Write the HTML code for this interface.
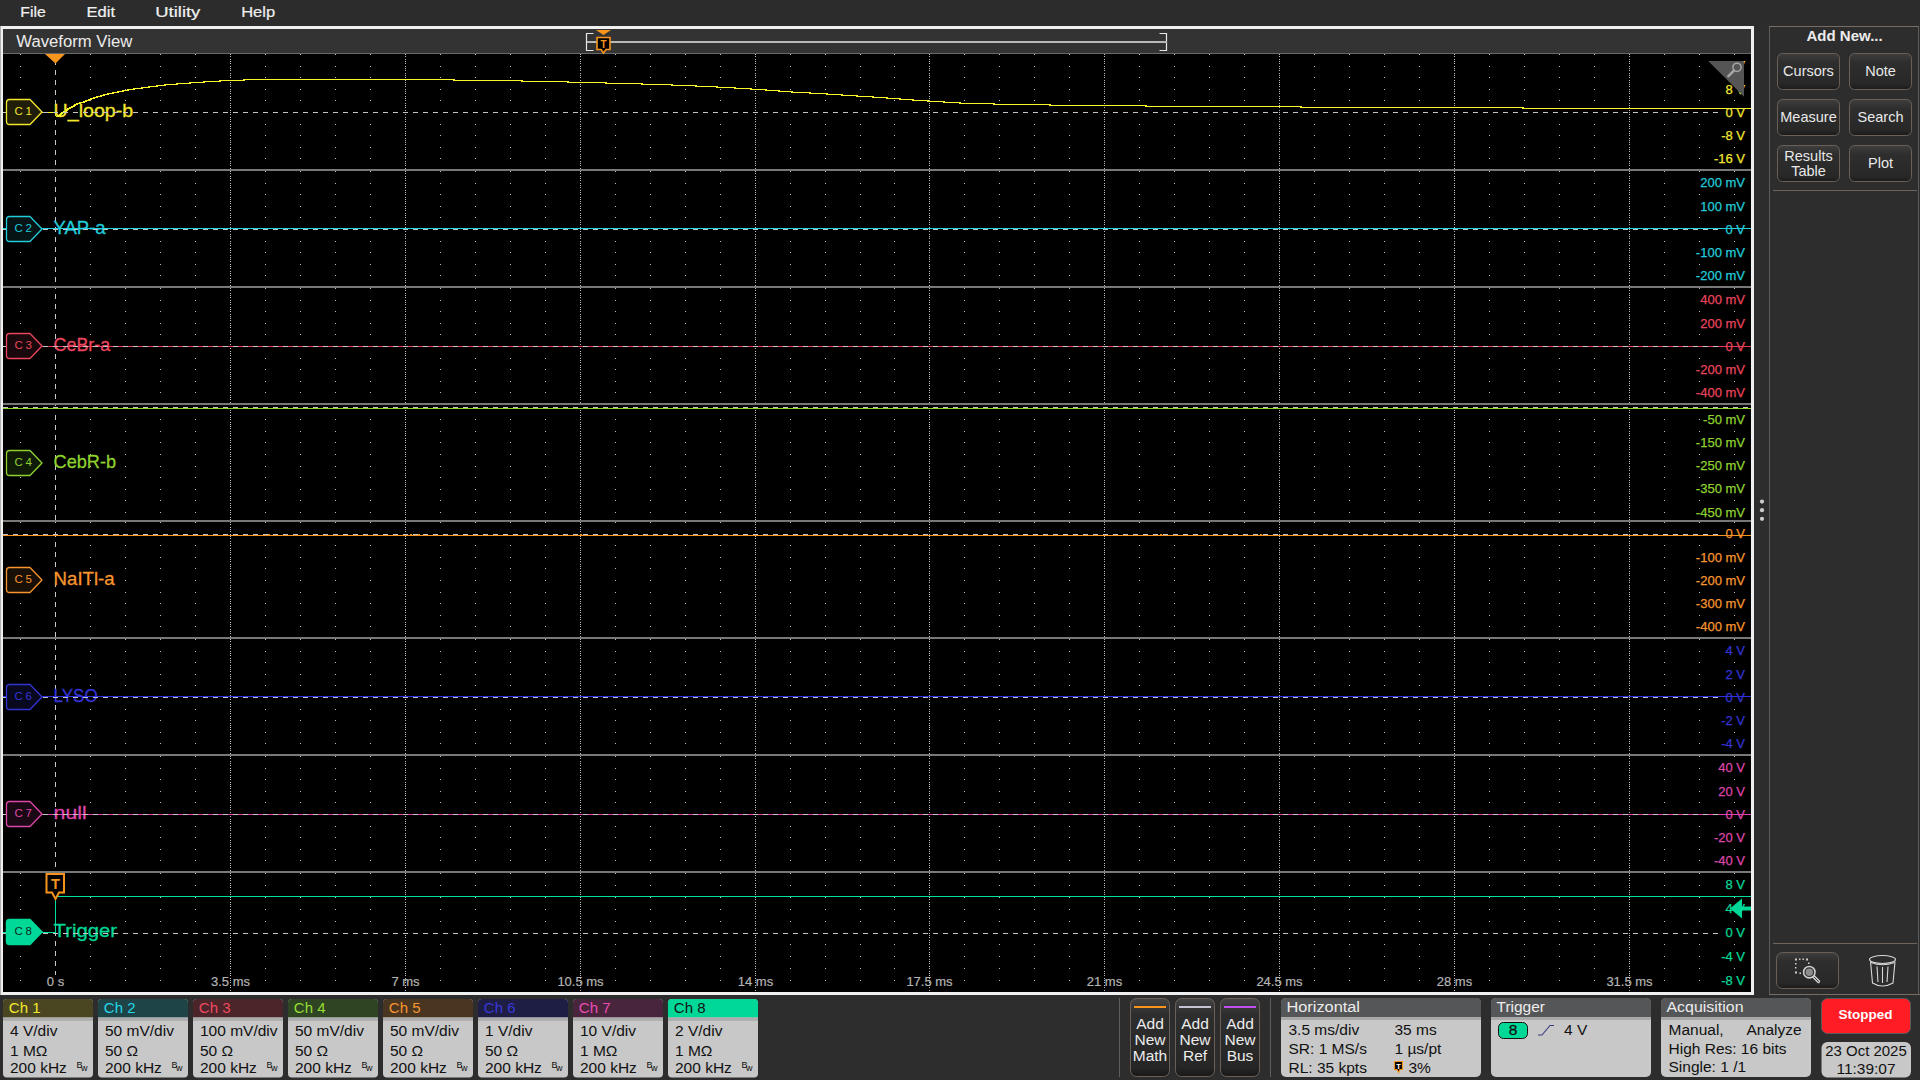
<!DOCTYPE html><html><head><meta charset="utf-8"><title>Waveform View</title><style>
html,body{margin:0;padding:0;background:#2d2d2d;width:1920px;height:1080px;overflow:hidden}
svg{display:block;font-family:"Liberation Sans",sans-serif}
</style></head><body>
<svg width="1920" height="1080" viewBox="0 0 1920 1080">
<rect x="0" y="0" width="1920" height="1080" fill="#2d2d2d"/>
<rect x="0" y="0" width="1920" height="26" fill="#2c2c2c"/>
<text x="20.3" y="16.5" font-size="15" fill="#f0f0f0" stroke="#f0f0f0" stroke-width="0.2" textLength="25.5" lengthAdjust="spacingAndGlyphs">File</text>
<text x="86.5" y="16.5" font-size="15" fill="#f0f0f0" stroke="#f0f0f0" stroke-width="0.2" textLength="28.6" lengthAdjust="spacingAndGlyphs">Edit</text>
<text x="155.3" y="16.5" font-size="15" fill="#f0f0f0" stroke="#f0f0f0" stroke-width="0.2" textLength="45" lengthAdjust="spacingAndGlyphs">Utility</text>
<text x="241.2" y="16.5" font-size="15" fill="#f0f0f0" stroke="#f0f0f0" stroke-width="0.2" textLength="34" lengthAdjust="spacingAndGlyphs">Help</text>
<rect x="0" y="26" width="1754" height="969" fill="#f0f0f0"/>
<rect x="0" y="26" width="1" height="969" fill="#b0b0b0"/>
<rect x="3" y="29" width="1748" height="24" fill="#333333"/>
<rect x="3" y="53" width="1748" height="1" fill="#6a6a6a"/>
<rect x="3" y="54" width="1748" height="938" fill="#000000"/>
<text x="16.3" y="47.2" font-size="16.7" fill="#ececec">Waveform View</text>
<path d="M593.5 33.5H586.5V50.5H593.5" fill="none" stroke="#e6e6e6" stroke-width="1.2"/>
<path d="M1159.5 33.5H1166.5V50.5H1159.5" fill="none" stroke="#e6e6e6" stroke-width="1.2"/>
<rect x="587" y="41" width="580" height="2" fill="#b8b8b8"/>
<path d="M596 30H611L603.5 35Z" fill="#f7941d"/>
<path d="M597 37.5H610V49.5H606L603.5 53L601 49.5H597Z" fill="#000" stroke="#f7941d" stroke-width="1.6"/>
<text x="603.5" y="48" font-size="10" font-weight="bold" fill="#f7941d" text-anchor="middle">T</text>
<path d="M20 54h1v1h-1zM90 54h1v1h-1zM125 54h1v1h-1zM160 54h1v1h-1zM195 54h1v1h-1zM265 54h1v1h-1zM300 54h1v1h-1zM335 54h1v1h-1zM370 54h1v1h-1zM440 54h1v1h-1zM475 54h1v1h-1zM510 54h1v1h-1zM545 54h1v1h-1zM615 54h1v1h-1zM650 54h1v1h-1zM685 54h1v1h-1zM720 54h1v1h-1zM790 54h1v1h-1zM825 54h1v1h-1zM860 54h1v1h-1zM894 54h1v1h-1zM964 54h1v1h-1zM999 54h1v1h-1zM1034 54h1v1h-1zM1069 54h1v1h-1zM1139 54h1v1h-1zM1174 54h1v1h-1zM1209 54h1v1h-1zM1244 54h1v1h-1zM1314 54h1v1h-1zM1349 54h1v1h-1zM1384 54h1v1h-1zM1419 54h1v1h-1zM1489 54h1v1h-1zM1524 54h1v1h-1zM1559 54h1v1h-1zM1594 54h1v1h-1zM1664 54h1v1h-1zM1699 54h1v1h-1zM1734 54h1v1h-1zM20 66h1v1h-1zM90 66h1v1h-1zM125 66h1v1h-1zM160 66h1v1h-1zM195 66h1v1h-1zM265 66h1v1h-1zM300 66h1v1h-1zM335 66h1v1h-1zM370 66h1v1h-1zM440 66h1v1h-1zM475 66h1v1h-1zM510 66h1v1h-1zM545 66h1v1h-1zM615 66h1v1h-1zM650 66h1v1h-1zM685 66h1v1h-1zM720 66h1v1h-1zM790 66h1v1h-1zM825 66h1v1h-1zM860 66h1v1h-1zM894 66h1v1h-1zM964 66h1v1h-1zM999 66h1v1h-1zM1034 66h1v1h-1zM1069 66h1v1h-1zM1139 66h1v1h-1zM1174 66h1v1h-1zM1209 66h1v1h-1zM1244 66h1v1h-1zM1314 66h1v1h-1zM1349 66h1v1h-1zM1384 66h1v1h-1zM1419 66h1v1h-1zM1489 66h1v1h-1zM1524 66h1v1h-1zM1559 66h1v1h-1zM1594 66h1v1h-1zM1664 66h1v1h-1zM1699 66h1v1h-1zM1734 66h1v1h-1zM20 77h1v1h-1zM90 77h1v1h-1zM125 77h1v1h-1zM160 77h1v1h-1zM195 77h1v1h-1zM265 77h1v1h-1zM300 77h1v1h-1zM335 77h1v1h-1zM370 77h1v1h-1zM440 77h1v1h-1zM475 77h1v1h-1zM510 77h1v1h-1zM545 77h1v1h-1zM615 77h1v1h-1zM650 77h1v1h-1zM685 77h1v1h-1zM720 77h1v1h-1zM790 77h1v1h-1zM825 77h1v1h-1zM860 77h1v1h-1zM894 77h1v1h-1zM964 77h1v1h-1zM999 77h1v1h-1zM1034 77h1v1h-1zM1069 77h1v1h-1zM1139 77h1v1h-1zM1174 77h1v1h-1zM1209 77h1v1h-1zM1244 77h1v1h-1zM1314 77h1v1h-1zM1349 77h1v1h-1zM1384 77h1v1h-1zM1419 77h1v1h-1zM1489 77h1v1h-1zM1524 77h1v1h-1zM1559 77h1v1h-1zM1594 77h1v1h-1zM1664 77h1v1h-1zM1699 77h1v1h-1zM1734 77h1v1h-1zM20 89h1v1h-1zM90 89h1v1h-1zM125 89h1v1h-1zM160 89h1v1h-1zM195 89h1v1h-1zM265 89h1v1h-1zM300 89h1v1h-1zM335 89h1v1h-1zM370 89h1v1h-1zM440 89h1v1h-1zM475 89h1v1h-1zM510 89h1v1h-1zM545 89h1v1h-1zM615 89h1v1h-1zM650 89h1v1h-1zM685 89h1v1h-1zM720 89h1v1h-1zM790 89h1v1h-1zM825 89h1v1h-1zM860 89h1v1h-1zM894 89h1v1h-1zM964 89h1v1h-1zM999 89h1v1h-1zM1034 89h1v1h-1zM1069 89h1v1h-1zM1139 89h1v1h-1zM1174 89h1v1h-1zM1209 89h1v1h-1zM1244 89h1v1h-1zM1314 89h1v1h-1zM1349 89h1v1h-1zM1384 89h1v1h-1zM1419 89h1v1h-1zM1489 89h1v1h-1zM1524 89h1v1h-1zM1559 89h1v1h-1zM1594 89h1v1h-1zM1664 89h1v1h-1zM1699 89h1v1h-1zM1734 89h1v1h-1zM20 100h1v1h-1zM90 100h1v1h-1zM125 100h1v1h-1zM160 100h1v1h-1zM195 100h1v1h-1zM265 100h1v1h-1zM300 100h1v1h-1zM335 100h1v1h-1zM370 100h1v1h-1zM440 100h1v1h-1zM475 100h1v1h-1zM510 100h1v1h-1zM545 100h1v1h-1zM615 100h1v1h-1zM650 100h1v1h-1zM685 100h1v1h-1zM720 100h1v1h-1zM790 100h1v1h-1zM825 100h1v1h-1zM860 100h1v1h-1zM894 100h1v1h-1zM964 100h1v1h-1zM999 100h1v1h-1zM1034 100h1v1h-1zM1069 100h1v1h-1zM1139 100h1v1h-1zM1174 100h1v1h-1zM1209 100h1v1h-1zM1244 100h1v1h-1zM1314 100h1v1h-1zM1349 100h1v1h-1zM1384 100h1v1h-1zM1419 100h1v1h-1zM1489 100h1v1h-1zM1524 100h1v1h-1zM1559 100h1v1h-1zM1594 100h1v1h-1zM1664 100h1v1h-1zM1699 100h1v1h-1zM1734 100h1v1h-1zM20 124h1v1h-1zM90 124h1v1h-1zM125 124h1v1h-1zM160 124h1v1h-1zM195 124h1v1h-1zM265 124h1v1h-1zM300 124h1v1h-1zM335 124h1v1h-1zM370 124h1v1h-1zM440 124h1v1h-1zM475 124h1v1h-1zM510 124h1v1h-1zM545 124h1v1h-1zM615 124h1v1h-1zM650 124h1v1h-1zM685 124h1v1h-1zM720 124h1v1h-1zM790 124h1v1h-1zM825 124h1v1h-1zM860 124h1v1h-1zM894 124h1v1h-1zM964 124h1v1h-1zM999 124h1v1h-1zM1034 124h1v1h-1zM1069 124h1v1h-1zM1139 124h1v1h-1zM1174 124h1v1h-1zM1209 124h1v1h-1zM1244 124h1v1h-1zM1314 124h1v1h-1zM1349 124h1v1h-1zM1384 124h1v1h-1zM1419 124h1v1h-1zM1489 124h1v1h-1zM1524 124h1v1h-1zM1559 124h1v1h-1zM1594 124h1v1h-1zM1664 124h1v1h-1zM1699 124h1v1h-1zM1734 124h1v1h-1zM20 135h1v1h-1zM90 135h1v1h-1zM125 135h1v1h-1zM160 135h1v1h-1zM195 135h1v1h-1zM265 135h1v1h-1zM300 135h1v1h-1zM335 135h1v1h-1zM370 135h1v1h-1zM440 135h1v1h-1zM475 135h1v1h-1zM510 135h1v1h-1zM545 135h1v1h-1zM615 135h1v1h-1zM650 135h1v1h-1zM685 135h1v1h-1zM720 135h1v1h-1zM790 135h1v1h-1zM825 135h1v1h-1zM860 135h1v1h-1zM894 135h1v1h-1zM964 135h1v1h-1zM999 135h1v1h-1zM1034 135h1v1h-1zM1069 135h1v1h-1zM1139 135h1v1h-1zM1174 135h1v1h-1zM1209 135h1v1h-1zM1244 135h1v1h-1zM1314 135h1v1h-1zM1349 135h1v1h-1zM1384 135h1v1h-1zM1419 135h1v1h-1zM1489 135h1v1h-1zM1524 135h1v1h-1zM1559 135h1v1h-1zM1594 135h1v1h-1zM1664 135h1v1h-1zM1699 135h1v1h-1zM1734 135h1v1h-1zM20 147h1v1h-1zM90 147h1v1h-1zM125 147h1v1h-1zM160 147h1v1h-1zM195 147h1v1h-1zM265 147h1v1h-1zM300 147h1v1h-1zM335 147h1v1h-1zM370 147h1v1h-1zM440 147h1v1h-1zM475 147h1v1h-1zM510 147h1v1h-1zM545 147h1v1h-1zM615 147h1v1h-1zM650 147h1v1h-1zM685 147h1v1h-1zM720 147h1v1h-1zM790 147h1v1h-1zM825 147h1v1h-1zM860 147h1v1h-1zM894 147h1v1h-1zM964 147h1v1h-1zM999 147h1v1h-1zM1034 147h1v1h-1zM1069 147h1v1h-1zM1139 147h1v1h-1zM1174 147h1v1h-1zM1209 147h1v1h-1zM1244 147h1v1h-1zM1314 147h1v1h-1zM1349 147h1v1h-1zM1384 147h1v1h-1zM1419 147h1v1h-1zM1489 147h1v1h-1zM1524 147h1v1h-1zM1559 147h1v1h-1zM1594 147h1v1h-1zM1664 147h1v1h-1zM1699 147h1v1h-1zM1734 147h1v1h-1zM20 158h1v1h-1zM90 158h1v1h-1zM125 158h1v1h-1zM160 158h1v1h-1zM195 158h1v1h-1zM265 158h1v1h-1zM300 158h1v1h-1zM335 158h1v1h-1zM370 158h1v1h-1zM440 158h1v1h-1zM475 158h1v1h-1zM510 158h1v1h-1zM545 158h1v1h-1zM615 158h1v1h-1zM650 158h1v1h-1zM685 158h1v1h-1zM720 158h1v1h-1zM790 158h1v1h-1zM825 158h1v1h-1zM860 158h1v1h-1zM894 158h1v1h-1zM964 158h1v1h-1zM999 158h1v1h-1zM1034 158h1v1h-1zM1069 158h1v1h-1zM1139 158h1v1h-1zM1174 158h1v1h-1zM1209 158h1v1h-1zM1244 158h1v1h-1zM1314 158h1v1h-1zM1349 158h1v1h-1zM1384 158h1v1h-1zM1419 158h1v1h-1zM1489 158h1v1h-1zM1524 158h1v1h-1zM1559 158h1v1h-1zM1594 158h1v1h-1zM1664 158h1v1h-1zM1699 158h1v1h-1zM1734 158h1v1h-1zM230 54h1v1h-1zM230 56h1v1h-1zM230 59h1v1h-1zM230 61h1v1h-1zM230 63h1v1h-1zM230 66h1v1h-1zM230 68h1v1h-1zM230 70h1v1h-1zM230 73h1v1h-1zM230 75h1v1h-1zM230 77h1v1h-1zM230 80h1v1h-1zM230 82h1v1h-1zM230 84h1v1h-1zM230 86h1v1h-1zM230 89h1v1h-1zM230 91h1v1h-1zM230 93h1v1h-1zM230 96h1v1h-1zM230 98h1v1h-1zM230 100h1v1h-1zM230 103h1v1h-1zM230 105h1v1h-1zM230 107h1v1h-1zM230 110h1v1h-1zM230 112h1v1h-1zM230 114h1v1h-1zM230 117h1v1h-1zM230 119h1v1h-1zM230 121h1v1h-1zM230 124h1v1h-1zM230 126h1v1h-1zM230 128h1v1h-1zM230 131h1v1h-1zM230 133h1v1h-1zM230 135h1v1h-1zM230 138h1v1h-1zM230 140h1v1h-1zM230 142h1v1h-1zM230 144h1v1h-1zM230 147h1v1h-1zM230 149h1v1h-1zM230 151h1v1h-1zM230 154h1v1h-1zM230 156h1v1h-1zM230 158h1v1h-1zM230 161h1v1h-1zM230 163h1v1h-1zM230 165h1v1h-1zM230 168h1v1h-1zM405 54h1v1h-1zM405 56h1v1h-1zM405 59h1v1h-1zM405 61h1v1h-1zM405 63h1v1h-1zM405 66h1v1h-1zM405 68h1v1h-1zM405 70h1v1h-1zM405 73h1v1h-1zM405 75h1v1h-1zM405 77h1v1h-1zM405 80h1v1h-1zM405 82h1v1h-1zM405 84h1v1h-1zM405 86h1v1h-1zM405 89h1v1h-1zM405 91h1v1h-1zM405 93h1v1h-1zM405 96h1v1h-1zM405 98h1v1h-1zM405 100h1v1h-1zM405 103h1v1h-1zM405 105h1v1h-1zM405 107h1v1h-1zM405 110h1v1h-1zM405 112h1v1h-1zM405 114h1v1h-1zM405 117h1v1h-1zM405 119h1v1h-1zM405 121h1v1h-1zM405 124h1v1h-1zM405 126h1v1h-1zM405 128h1v1h-1zM405 131h1v1h-1zM405 133h1v1h-1zM405 135h1v1h-1zM405 138h1v1h-1zM405 140h1v1h-1zM405 142h1v1h-1zM405 144h1v1h-1zM405 147h1v1h-1zM405 149h1v1h-1zM405 151h1v1h-1zM405 154h1v1h-1zM405 156h1v1h-1zM405 158h1v1h-1zM405 161h1v1h-1zM405 163h1v1h-1zM405 165h1v1h-1zM405 168h1v1h-1zM580 54h1v1h-1zM580 56h1v1h-1zM580 59h1v1h-1zM580 61h1v1h-1zM580 63h1v1h-1zM580 66h1v1h-1zM580 68h1v1h-1zM580 70h1v1h-1zM580 73h1v1h-1zM580 75h1v1h-1zM580 77h1v1h-1zM580 80h1v1h-1zM580 82h1v1h-1zM580 84h1v1h-1zM580 86h1v1h-1zM580 89h1v1h-1zM580 91h1v1h-1zM580 93h1v1h-1zM580 96h1v1h-1zM580 98h1v1h-1zM580 100h1v1h-1zM580 103h1v1h-1zM580 105h1v1h-1zM580 107h1v1h-1zM580 110h1v1h-1zM580 112h1v1h-1zM580 114h1v1h-1zM580 117h1v1h-1zM580 119h1v1h-1zM580 121h1v1h-1zM580 124h1v1h-1zM580 126h1v1h-1zM580 128h1v1h-1zM580 131h1v1h-1zM580 133h1v1h-1zM580 135h1v1h-1zM580 138h1v1h-1zM580 140h1v1h-1zM580 142h1v1h-1zM580 144h1v1h-1zM580 147h1v1h-1zM580 149h1v1h-1zM580 151h1v1h-1zM580 154h1v1h-1zM580 156h1v1h-1zM580 158h1v1h-1zM580 161h1v1h-1zM580 163h1v1h-1zM580 165h1v1h-1zM580 168h1v1h-1zM755 54h1v1h-1zM755 56h1v1h-1zM755 59h1v1h-1zM755 61h1v1h-1zM755 63h1v1h-1zM755 66h1v1h-1zM755 68h1v1h-1zM755 70h1v1h-1zM755 73h1v1h-1zM755 75h1v1h-1zM755 77h1v1h-1zM755 80h1v1h-1zM755 82h1v1h-1zM755 84h1v1h-1zM755 86h1v1h-1zM755 89h1v1h-1zM755 91h1v1h-1zM755 93h1v1h-1zM755 96h1v1h-1zM755 98h1v1h-1zM755 100h1v1h-1zM755 103h1v1h-1zM755 105h1v1h-1zM755 107h1v1h-1zM755 110h1v1h-1zM755 112h1v1h-1zM755 114h1v1h-1zM755 117h1v1h-1zM755 119h1v1h-1zM755 121h1v1h-1zM755 124h1v1h-1zM755 126h1v1h-1zM755 128h1v1h-1zM755 131h1v1h-1zM755 133h1v1h-1zM755 135h1v1h-1zM755 138h1v1h-1zM755 140h1v1h-1zM755 142h1v1h-1zM755 144h1v1h-1zM755 147h1v1h-1zM755 149h1v1h-1zM755 151h1v1h-1zM755 154h1v1h-1zM755 156h1v1h-1zM755 158h1v1h-1zM755 161h1v1h-1zM755 163h1v1h-1zM755 165h1v1h-1zM755 168h1v1h-1zM929 54h1v1h-1zM929 56h1v1h-1zM929 59h1v1h-1zM929 61h1v1h-1zM929 63h1v1h-1zM929 66h1v1h-1zM929 68h1v1h-1zM929 70h1v1h-1zM929 73h1v1h-1zM929 75h1v1h-1zM929 77h1v1h-1zM929 80h1v1h-1zM929 82h1v1h-1zM929 84h1v1h-1zM929 86h1v1h-1zM929 89h1v1h-1zM929 91h1v1h-1zM929 93h1v1h-1zM929 96h1v1h-1zM929 98h1v1h-1zM929 100h1v1h-1zM929 103h1v1h-1zM929 105h1v1h-1zM929 107h1v1h-1zM929 110h1v1h-1zM929 112h1v1h-1zM929 114h1v1h-1zM929 117h1v1h-1zM929 119h1v1h-1zM929 121h1v1h-1zM929 124h1v1h-1zM929 126h1v1h-1zM929 128h1v1h-1zM929 131h1v1h-1zM929 133h1v1h-1zM929 135h1v1h-1zM929 138h1v1h-1zM929 140h1v1h-1zM929 142h1v1h-1zM929 144h1v1h-1zM929 147h1v1h-1zM929 149h1v1h-1zM929 151h1v1h-1zM929 154h1v1h-1zM929 156h1v1h-1zM929 158h1v1h-1zM929 161h1v1h-1zM929 163h1v1h-1zM929 165h1v1h-1zM929 168h1v1h-1zM1104 54h1v1h-1zM1104 56h1v1h-1zM1104 59h1v1h-1zM1104 61h1v1h-1zM1104 63h1v1h-1zM1104 66h1v1h-1zM1104 68h1v1h-1zM1104 70h1v1h-1zM1104 73h1v1h-1zM1104 75h1v1h-1zM1104 77h1v1h-1zM1104 80h1v1h-1zM1104 82h1v1h-1zM1104 84h1v1h-1zM1104 86h1v1h-1zM1104 89h1v1h-1zM1104 91h1v1h-1zM1104 93h1v1h-1zM1104 96h1v1h-1zM1104 98h1v1h-1zM1104 100h1v1h-1zM1104 103h1v1h-1zM1104 105h1v1h-1zM1104 107h1v1h-1zM1104 110h1v1h-1zM1104 112h1v1h-1zM1104 114h1v1h-1zM1104 117h1v1h-1zM1104 119h1v1h-1zM1104 121h1v1h-1zM1104 124h1v1h-1zM1104 126h1v1h-1zM1104 128h1v1h-1zM1104 131h1v1h-1zM1104 133h1v1h-1zM1104 135h1v1h-1zM1104 138h1v1h-1zM1104 140h1v1h-1zM1104 142h1v1h-1zM1104 144h1v1h-1zM1104 147h1v1h-1zM1104 149h1v1h-1zM1104 151h1v1h-1zM1104 154h1v1h-1zM1104 156h1v1h-1zM1104 158h1v1h-1zM1104 161h1v1h-1zM1104 163h1v1h-1zM1104 165h1v1h-1zM1104 168h1v1h-1zM1279 54h1v1h-1zM1279 56h1v1h-1zM1279 59h1v1h-1zM1279 61h1v1h-1zM1279 63h1v1h-1zM1279 66h1v1h-1zM1279 68h1v1h-1zM1279 70h1v1h-1zM1279 73h1v1h-1zM1279 75h1v1h-1zM1279 77h1v1h-1zM1279 80h1v1h-1zM1279 82h1v1h-1zM1279 84h1v1h-1zM1279 86h1v1h-1zM1279 89h1v1h-1zM1279 91h1v1h-1zM1279 93h1v1h-1zM1279 96h1v1h-1zM1279 98h1v1h-1zM1279 100h1v1h-1zM1279 103h1v1h-1zM1279 105h1v1h-1zM1279 107h1v1h-1zM1279 110h1v1h-1zM1279 112h1v1h-1zM1279 114h1v1h-1zM1279 117h1v1h-1zM1279 119h1v1h-1zM1279 121h1v1h-1zM1279 124h1v1h-1zM1279 126h1v1h-1zM1279 128h1v1h-1zM1279 131h1v1h-1zM1279 133h1v1h-1zM1279 135h1v1h-1zM1279 138h1v1h-1zM1279 140h1v1h-1zM1279 142h1v1h-1zM1279 144h1v1h-1zM1279 147h1v1h-1zM1279 149h1v1h-1zM1279 151h1v1h-1zM1279 154h1v1h-1zM1279 156h1v1h-1zM1279 158h1v1h-1zM1279 161h1v1h-1zM1279 163h1v1h-1zM1279 165h1v1h-1zM1279 168h1v1h-1zM1454 54h1v1h-1zM1454 56h1v1h-1zM1454 59h1v1h-1zM1454 61h1v1h-1zM1454 63h1v1h-1zM1454 66h1v1h-1zM1454 68h1v1h-1zM1454 70h1v1h-1zM1454 73h1v1h-1zM1454 75h1v1h-1zM1454 77h1v1h-1zM1454 80h1v1h-1zM1454 82h1v1h-1zM1454 84h1v1h-1zM1454 86h1v1h-1zM1454 89h1v1h-1zM1454 91h1v1h-1zM1454 93h1v1h-1zM1454 96h1v1h-1zM1454 98h1v1h-1zM1454 100h1v1h-1zM1454 103h1v1h-1zM1454 105h1v1h-1zM1454 107h1v1h-1zM1454 110h1v1h-1zM1454 112h1v1h-1zM1454 114h1v1h-1zM1454 117h1v1h-1zM1454 119h1v1h-1zM1454 121h1v1h-1zM1454 124h1v1h-1zM1454 126h1v1h-1zM1454 128h1v1h-1zM1454 131h1v1h-1zM1454 133h1v1h-1zM1454 135h1v1h-1zM1454 138h1v1h-1zM1454 140h1v1h-1zM1454 142h1v1h-1zM1454 144h1v1h-1zM1454 147h1v1h-1zM1454 149h1v1h-1zM1454 151h1v1h-1zM1454 154h1v1h-1zM1454 156h1v1h-1zM1454 158h1v1h-1zM1454 161h1v1h-1zM1454 163h1v1h-1zM1454 165h1v1h-1zM1454 168h1v1h-1zM1629 54h1v1h-1zM1629 56h1v1h-1zM1629 59h1v1h-1zM1629 61h1v1h-1zM1629 63h1v1h-1zM1629 66h1v1h-1zM1629 68h1v1h-1zM1629 70h1v1h-1zM1629 73h1v1h-1zM1629 75h1v1h-1zM1629 77h1v1h-1zM1629 80h1v1h-1zM1629 82h1v1h-1zM1629 84h1v1h-1zM1629 86h1v1h-1zM1629 89h1v1h-1zM1629 91h1v1h-1zM1629 93h1v1h-1zM1629 96h1v1h-1zM1629 98h1v1h-1zM1629 100h1v1h-1zM1629 103h1v1h-1zM1629 105h1v1h-1zM1629 107h1v1h-1zM1629 110h1v1h-1zM1629 112h1v1h-1zM1629 114h1v1h-1zM1629 117h1v1h-1zM1629 119h1v1h-1zM1629 121h1v1h-1zM1629 124h1v1h-1zM1629 126h1v1h-1zM1629 128h1v1h-1zM1629 131h1v1h-1zM1629 133h1v1h-1zM1629 135h1v1h-1zM1629 138h1v1h-1zM1629 140h1v1h-1zM1629 142h1v1h-1zM1629 144h1v1h-1zM1629 147h1v1h-1zM1629 149h1v1h-1zM1629 151h1v1h-1zM1629 154h1v1h-1zM1629 156h1v1h-1zM1629 158h1v1h-1zM1629 161h1v1h-1zM1629 163h1v1h-1zM1629 165h1v1h-1zM1629 168h1v1h-1zM20 171h1v1h-1zM90 171h1v1h-1zM125 171h1v1h-1zM160 171h1v1h-1zM195 171h1v1h-1zM265 171h1v1h-1zM300 171h1v1h-1zM335 171h1v1h-1zM370 171h1v1h-1zM440 171h1v1h-1zM475 171h1v1h-1zM510 171h1v1h-1zM545 171h1v1h-1zM615 171h1v1h-1zM650 171h1v1h-1zM685 171h1v1h-1zM720 171h1v1h-1zM790 171h1v1h-1zM825 171h1v1h-1zM860 171h1v1h-1zM894 171h1v1h-1zM964 171h1v1h-1zM999 171h1v1h-1zM1034 171h1v1h-1zM1069 171h1v1h-1zM1139 171h1v1h-1zM1174 171h1v1h-1zM1209 171h1v1h-1zM1244 171h1v1h-1zM1314 171h1v1h-1zM1349 171h1v1h-1zM1384 171h1v1h-1zM1419 171h1v1h-1zM1489 171h1v1h-1zM1524 171h1v1h-1zM1559 171h1v1h-1zM1594 171h1v1h-1zM1664 171h1v1h-1zM1699 171h1v1h-1zM1734 171h1v1h-1zM20 183h1v1h-1zM90 183h1v1h-1zM125 183h1v1h-1zM160 183h1v1h-1zM195 183h1v1h-1zM265 183h1v1h-1zM300 183h1v1h-1zM335 183h1v1h-1zM370 183h1v1h-1zM440 183h1v1h-1zM475 183h1v1h-1zM510 183h1v1h-1zM545 183h1v1h-1zM615 183h1v1h-1zM650 183h1v1h-1zM685 183h1v1h-1zM720 183h1v1h-1zM790 183h1v1h-1zM825 183h1v1h-1zM860 183h1v1h-1zM894 183h1v1h-1zM964 183h1v1h-1zM999 183h1v1h-1zM1034 183h1v1h-1zM1069 183h1v1h-1zM1139 183h1v1h-1zM1174 183h1v1h-1zM1209 183h1v1h-1zM1244 183h1v1h-1zM1314 183h1v1h-1zM1349 183h1v1h-1zM1384 183h1v1h-1zM1419 183h1v1h-1zM1489 183h1v1h-1zM1524 183h1v1h-1zM1559 183h1v1h-1zM1594 183h1v1h-1zM1664 183h1v1h-1zM1699 183h1v1h-1zM1734 183h1v1h-1zM20 194h1v1h-1zM90 194h1v1h-1zM125 194h1v1h-1zM160 194h1v1h-1zM195 194h1v1h-1zM265 194h1v1h-1zM300 194h1v1h-1zM335 194h1v1h-1zM370 194h1v1h-1zM440 194h1v1h-1zM475 194h1v1h-1zM510 194h1v1h-1zM545 194h1v1h-1zM615 194h1v1h-1zM650 194h1v1h-1zM685 194h1v1h-1zM720 194h1v1h-1zM790 194h1v1h-1zM825 194h1v1h-1zM860 194h1v1h-1zM894 194h1v1h-1zM964 194h1v1h-1zM999 194h1v1h-1zM1034 194h1v1h-1zM1069 194h1v1h-1zM1139 194h1v1h-1zM1174 194h1v1h-1zM1209 194h1v1h-1zM1244 194h1v1h-1zM1314 194h1v1h-1zM1349 194h1v1h-1zM1384 194h1v1h-1zM1419 194h1v1h-1zM1489 194h1v1h-1zM1524 194h1v1h-1zM1559 194h1v1h-1zM1594 194h1v1h-1zM1664 194h1v1h-1zM1699 194h1v1h-1zM1734 194h1v1h-1zM20 206h1v1h-1zM90 206h1v1h-1zM125 206h1v1h-1zM160 206h1v1h-1zM195 206h1v1h-1zM265 206h1v1h-1zM300 206h1v1h-1zM335 206h1v1h-1zM370 206h1v1h-1zM440 206h1v1h-1zM475 206h1v1h-1zM510 206h1v1h-1zM545 206h1v1h-1zM615 206h1v1h-1zM650 206h1v1h-1zM685 206h1v1h-1zM720 206h1v1h-1zM790 206h1v1h-1zM825 206h1v1h-1zM860 206h1v1h-1zM894 206h1v1h-1zM964 206h1v1h-1zM999 206h1v1h-1zM1034 206h1v1h-1zM1069 206h1v1h-1zM1139 206h1v1h-1zM1174 206h1v1h-1zM1209 206h1v1h-1zM1244 206h1v1h-1zM1314 206h1v1h-1zM1349 206h1v1h-1zM1384 206h1v1h-1zM1419 206h1v1h-1zM1489 206h1v1h-1zM1524 206h1v1h-1zM1559 206h1v1h-1zM1594 206h1v1h-1zM1664 206h1v1h-1zM1699 206h1v1h-1zM1734 206h1v1h-1zM20 217h1v1h-1zM90 217h1v1h-1zM125 217h1v1h-1zM160 217h1v1h-1zM195 217h1v1h-1zM265 217h1v1h-1zM300 217h1v1h-1zM335 217h1v1h-1zM370 217h1v1h-1zM440 217h1v1h-1zM475 217h1v1h-1zM510 217h1v1h-1zM545 217h1v1h-1zM615 217h1v1h-1zM650 217h1v1h-1zM685 217h1v1h-1zM720 217h1v1h-1zM790 217h1v1h-1zM825 217h1v1h-1zM860 217h1v1h-1zM894 217h1v1h-1zM964 217h1v1h-1zM999 217h1v1h-1zM1034 217h1v1h-1zM1069 217h1v1h-1zM1139 217h1v1h-1zM1174 217h1v1h-1zM1209 217h1v1h-1zM1244 217h1v1h-1zM1314 217h1v1h-1zM1349 217h1v1h-1zM1384 217h1v1h-1zM1419 217h1v1h-1zM1489 217h1v1h-1zM1524 217h1v1h-1zM1559 217h1v1h-1zM1594 217h1v1h-1zM1664 217h1v1h-1zM1699 217h1v1h-1zM1734 217h1v1h-1zM20 241h1v1h-1zM90 241h1v1h-1zM125 241h1v1h-1zM160 241h1v1h-1zM195 241h1v1h-1zM265 241h1v1h-1zM300 241h1v1h-1zM335 241h1v1h-1zM370 241h1v1h-1zM440 241h1v1h-1zM475 241h1v1h-1zM510 241h1v1h-1zM545 241h1v1h-1zM615 241h1v1h-1zM650 241h1v1h-1zM685 241h1v1h-1zM720 241h1v1h-1zM790 241h1v1h-1zM825 241h1v1h-1zM860 241h1v1h-1zM894 241h1v1h-1zM964 241h1v1h-1zM999 241h1v1h-1zM1034 241h1v1h-1zM1069 241h1v1h-1zM1139 241h1v1h-1zM1174 241h1v1h-1zM1209 241h1v1h-1zM1244 241h1v1h-1zM1314 241h1v1h-1zM1349 241h1v1h-1zM1384 241h1v1h-1zM1419 241h1v1h-1zM1489 241h1v1h-1zM1524 241h1v1h-1zM1559 241h1v1h-1zM1594 241h1v1h-1zM1664 241h1v1h-1zM1699 241h1v1h-1zM1734 241h1v1h-1zM20 252h1v1h-1zM90 252h1v1h-1zM125 252h1v1h-1zM160 252h1v1h-1zM195 252h1v1h-1zM265 252h1v1h-1zM300 252h1v1h-1zM335 252h1v1h-1zM370 252h1v1h-1zM440 252h1v1h-1zM475 252h1v1h-1zM510 252h1v1h-1zM545 252h1v1h-1zM615 252h1v1h-1zM650 252h1v1h-1zM685 252h1v1h-1zM720 252h1v1h-1zM790 252h1v1h-1zM825 252h1v1h-1zM860 252h1v1h-1zM894 252h1v1h-1zM964 252h1v1h-1zM999 252h1v1h-1zM1034 252h1v1h-1zM1069 252h1v1h-1zM1139 252h1v1h-1zM1174 252h1v1h-1zM1209 252h1v1h-1zM1244 252h1v1h-1zM1314 252h1v1h-1zM1349 252h1v1h-1zM1384 252h1v1h-1zM1419 252h1v1h-1zM1489 252h1v1h-1zM1524 252h1v1h-1zM1559 252h1v1h-1zM1594 252h1v1h-1zM1664 252h1v1h-1zM1699 252h1v1h-1zM1734 252h1v1h-1zM20 264h1v1h-1zM90 264h1v1h-1zM125 264h1v1h-1zM160 264h1v1h-1zM195 264h1v1h-1zM265 264h1v1h-1zM300 264h1v1h-1zM335 264h1v1h-1zM370 264h1v1h-1zM440 264h1v1h-1zM475 264h1v1h-1zM510 264h1v1h-1zM545 264h1v1h-1zM615 264h1v1h-1zM650 264h1v1h-1zM685 264h1v1h-1zM720 264h1v1h-1zM790 264h1v1h-1zM825 264h1v1h-1zM860 264h1v1h-1zM894 264h1v1h-1zM964 264h1v1h-1zM999 264h1v1h-1zM1034 264h1v1h-1zM1069 264h1v1h-1zM1139 264h1v1h-1zM1174 264h1v1h-1zM1209 264h1v1h-1zM1244 264h1v1h-1zM1314 264h1v1h-1zM1349 264h1v1h-1zM1384 264h1v1h-1zM1419 264h1v1h-1zM1489 264h1v1h-1zM1524 264h1v1h-1zM1559 264h1v1h-1zM1594 264h1v1h-1zM1664 264h1v1h-1zM1699 264h1v1h-1zM1734 264h1v1h-1zM20 275h1v1h-1zM90 275h1v1h-1zM125 275h1v1h-1zM160 275h1v1h-1zM195 275h1v1h-1zM265 275h1v1h-1zM300 275h1v1h-1zM335 275h1v1h-1zM370 275h1v1h-1zM440 275h1v1h-1zM475 275h1v1h-1zM510 275h1v1h-1zM545 275h1v1h-1zM615 275h1v1h-1zM650 275h1v1h-1zM685 275h1v1h-1zM720 275h1v1h-1zM790 275h1v1h-1zM825 275h1v1h-1zM860 275h1v1h-1zM894 275h1v1h-1zM964 275h1v1h-1zM999 275h1v1h-1zM1034 275h1v1h-1zM1069 275h1v1h-1zM1139 275h1v1h-1zM1174 275h1v1h-1zM1209 275h1v1h-1zM1244 275h1v1h-1zM1314 275h1v1h-1zM1349 275h1v1h-1zM1384 275h1v1h-1zM1419 275h1v1h-1zM1489 275h1v1h-1zM1524 275h1v1h-1zM1559 275h1v1h-1zM1594 275h1v1h-1zM1664 275h1v1h-1zM1699 275h1v1h-1zM1734 275h1v1h-1zM230 171h1v1h-1zM230 173h1v1h-1zM230 176h1v1h-1zM230 178h1v1h-1zM230 180h1v1h-1zM230 183h1v1h-1zM230 185h1v1h-1zM230 187h1v1h-1zM230 190h1v1h-1zM230 192h1v1h-1zM230 194h1v1h-1zM230 197h1v1h-1zM230 199h1v1h-1zM230 201h1v1h-1zM230 203h1v1h-1zM230 206h1v1h-1zM230 208h1v1h-1zM230 210h1v1h-1zM230 213h1v1h-1zM230 215h1v1h-1zM230 217h1v1h-1zM230 220h1v1h-1zM230 222h1v1h-1zM230 224h1v1h-1zM230 227h1v1h-1zM230 229h1v1h-1zM230 231h1v1h-1zM230 234h1v1h-1zM230 236h1v1h-1zM230 238h1v1h-1zM230 241h1v1h-1zM230 243h1v1h-1zM230 245h1v1h-1zM230 248h1v1h-1zM230 250h1v1h-1zM230 252h1v1h-1zM230 255h1v1h-1zM230 257h1v1h-1zM230 259h1v1h-1zM230 261h1v1h-1zM230 264h1v1h-1zM230 266h1v1h-1zM230 268h1v1h-1zM230 271h1v1h-1zM230 273h1v1h-1zM230 275h1v1h-1zM230 278h1v1h-1zM230 280h1v1h-1zM230 282h1v1h-1zM230 285h1v1h-1zM405 171h1v1h-1zM405 173h1v1h-1zM405 176h1v1h-1zM405 178h1v1h-1zM405 180h1v1h-1zM405 183h1v1h-1zM405 185h1v1h-1zM405 187h1v1h-1zM405 190h1v1h-1zM405 192h1v1h-1zM405 194h1v1h-1zM405 197h1v1h-1zM405 199h1v1h-1zM405 201h1v1h-1zM405 203h1v1h-1zM405 206h1v1h-1zM405 208h1v1h-1zM405 210h1v1h-1zM405 213h1v1h-1zM405 215h1v1h-1zM405 217h1v1h-1zM405 220h1v1h-1zM405 222h1v1h-1zM405 224h1v1h-1zM405 227h1v1h-1zM405 229h1v1h-1zM405 231h1v1h-1zM405 234h1v1h-1zM405 236h1v1h-1zM405 238h1v1h-1zM405 241h1v1h-1zM405 243h1v1h-1zM405 245h1v1h-1zM405 248h1v1h-1zM405 250h1v1h-1zM405 252h1v1h-1zM405 255h1v1h-1zM405 257h1v1h-1zM405 259h1v1h-1zM405 261h1v1h-1zM405 264h1v1h-1zM405 266h1v1h-1zM405 268h1v1h-1zM405 271h1v1h-1zM405 273h1v1h-1zM405 275h1v1h-1zM405 278h1v1h-1zM405 280h1v1h-1zM405 282h1v1h-1zM405 285h1v1h-1zM580 171h1v1h-1zM580 173h1v1h-1zM580 176h1v1h-1zM580 178h1v1h-1zM580 180h1v1h-1zM580 183h1v1h-1zM580 185h1v1h-1zM580 187h1v1h-1zM580 190h1v1h-1zM580 192h1v1h-1zM580 194h1v1h-1zM580 197h1v1h-1zM580 199h1v1h-1zM580 201h1v1h-1zM580 203h1v1h-1zM580 206h1v1h-1zM580 208h1v1h-1zM580 210h1v1h-1zM580 213h1v1h-1zM580 215h1v1h-1zM580 217h1v1h-1zM580 220h1v1h-1zM580 222h1v1h-1zM580 224h1v1h-1zM580 227h1v1h-1zM580 229h1v1h-1zM580 231h1v1h-1zM580 234h1v1h-1zM580 236h1v1h-1zM580 238h1v1h-1zM580 241h1v1h-1zM580 243h1v1h-1zM580 245h1v1h-1zM580 248h1v1h-1zM580 250h1v1h-1zM580 252h1v1h-1zM580 255h1v1h-1zM580 257h1v1h-1zM580 259h1v1h-1zM580 261h1v1h-1zM580 264h1v1h-1zM580 266h1v1h-1zM580 268h1v1h-1zM580 271h1v1h-1zM580 273h1v1h-1zM580 275h1v1h-1zM580 278h1v1h-1zM580 280h1v1h-1zM580 282h1v1h-1zM580 285h1v1h-1zM755 171h1v1h-1zM755 173h1v1h-1zM755 176h1v1h-1zM755 178h1v1h-1zM755 180h1v1h-1zM755 183h1v1h-1zM755 185h1v1h-1zM755 187h1v1h-1zM755 190h1v1h-1zM755 192h1v1h-1zM755 194h1v1h-1zM755 197h1v1h-1zM755 199h1v1h-1zM755 201h1v1h-1zM755 203h1v1h-1zM755 206h1v1h-1zM755 208h1v1h-1zM755 210h1v1h-1zM755 213h1v1h-1zM755 215h1v1h-1zM755 217h1v1h-1zM755 220h1v1h-1zM755 222h1v1h-1zM755 224h1v1h-1zM755 227h1v1h-1zM755 229h1v1h-1zM755 231h1v1h-1zM755 234h1v1h-1zM755 236h1v1h-1zM755 238h1v1h-1zM755 241h1v1h-1zM755 243h1v1h-1zM755 245h1v1h-1zM755 248h1v1h-1zM755 250h1v1h-1zM755 252h1v1h-1zM755 255h1v1h-1zM755 257h1v1h-1zM755 259h1v1h-1zM755 261h1v1h-1zM755 264h1v1h-1zM755 266h1v1h-1zM755 268h1v1h-1zM755 271h1v1h-1zM755 273h1v1h-1zM755 275h1v1h-1zM755 278h1v1h-1zM755 280h1v1h-1zM755 282h1v1h-1zM755 285h1v1h-1zM929 171h1v1h-1zM929 173h1v1h-1zM929 176h1v1h-1zM929 178h1v1h-1zM929 180h1v1h-1zM929 183h1v1h-1zM929 185h1v1h-1zM929 187h1v1h-1zM929 190h1v1h-1zM929 192h1v1h-1zM929 194h1v1h-1zM929 197h1v1h-1zM929 199h1v1h-1zM929 201h1v1h-1zM929 203h1v1h-1zM929 206h1v1h-1zM929 208h1v1h-1zM929 210h1v1h-1zM929 213h1v1h-1zM929 215h1v1h-1zM929 217h1v1h-1zM929 220h1v1h-1zM929 222h1v1h-1zM929 224h1v1h-1zM929 227h1v1h-1zM929 229h1v1h-1zM929 231h1v1h-1zM929 234h1v1h-1zM929 236h1v1h-1zM929 238h1v1h-1zM929 241h1v1h-1zM929 243h1v1h-1zM929 245h1v1h-1zM929 248h1v1h-1zM929 250h1v1h-1zM929 252h1v1h-1zM929 255h1v1h-1zM929 257h1v1h-1zM929 259h1v1h-1zM929 261h1v1h-1zM929 264h1v1h-1zM929 266h1v1h-1zM929 268h1v1h-1zM929 271h1v1h-1zM929 273h1v1h-1zM929 275h1v1h-1zM929 278h1v1h-1zM929 280h1v1h-1zM929 282h1v1h-1zM929 285h1v1h-1zM1104 171h1v1h-1zM1104 173h1v1h-1zM1104 176h1v1h-1zM1104 178h1v1h-1zM1104 180h1v1h-1zM1104 183h1v1h-1zM1104 185h1v1h-1zM1104 187h1v1h-1zM1104 190h1v1h-1zM1104 192h1v1h-1zM1104 194h1v1h-1zM1104 197h1v1h-1zM1104 199h1v1h-1zM1104 201h1v1h-1zM1104 203h1v1h-1zM1104 206h1v1h-1zM1104 208h1v1h-1zM1104 210h1v1h-1zM1104 213h1v1h-1zM1104 215h1v1h-1zM1104 217h1v1h-1zM1104 220h1v1h-1zM1104 222h1v1h-1zM1104 224h1v1h-1zM1104 227h1v1h-1zM1104 229h1v1h-1zM1104 231h1v1h-1zM1104 234h1v1h-1zM1104 236h1v1h-1zM1104 238h1v1h-1zM1104 241h1v1h-1zM1104 243h1v1h-1zM1104 245h1v1h-1zM1104 248h1v1h-1zM1104 250h1v1h-1zM1104 252h1v1h-1zM1104 255h1v1h-1zM1104 257h1v1h-1zM1104 259h1v1h-1zM1104 261h1v1h-1zM1104 264h1v1h-1zM1104 266h1v1h-1zM1104 268h1v1h-1zM1104 271h1v1h-1zM1104 273h1v1h-1zM1104 275h1v1h-1zM1104 278h1v1h-1zM1104 280h1v1h-1zM1104 282h1v1h-1zM1104 285h1v1h-1zM1279 171h1v1h-1zM1279 173h1v1h-1zM1279 176h1v1h-1zM1279 178h1v1h-1zM1279 180h1v1h-1zM1279 183h1v1h-1zM1279 185h1v1h-1zM1279 187h1v1h-1zM1279 190h1v1h-1zM1279 192h1v1h-1zM1279 194h1v1h-1zM1279 197h1v1h-1zM1279 199h1v1h-1zM1279 201h1v1h-1zM1279 203h1v1h-1zM1279 206h1v1h-1zM1279 208h1v1h-1zM1279 210h1v1h-1zM1279 213h1v1h-1zM1279 215h1v1h-1zM1279 217h1v1h-1zM1279 220h1v1h-1zM1279 222h1v1h-1zM1279 224h1v1h-1zM1279 227h1v1h-1zM1279 229h1v1h-1zM1279 231h1v1h-1zM1279 234h1v1h-1zM1279 236h1v1h-1zM1279 238h1v1h-1zM1279 241h1v1h-1zM1279 243h1v1h-1zM1279 245h1v1h-1zM1279 248h1v1h-1zM1279 250h1v1h-1zM1279 252h1v1h-1zM1279 255h1v1h-1zM1279 257h1v1h-1zM1279 259h1v1h-1zM1279 261h1v1h-1zM1279 264h1v1h-1zM1279 266h1v1h-1zM1279 268h1v1h-1zM1279 271h1v1h-1zM1279 273h1v1h-1zM1279 275h1v1h-1zM1279 278h1v1h-1zM1279 280h1v1h-1zM1279 282h1v1h-1zM1279 285h1v1h-1zM1454 171h1v1h-1zM1454 173h1v1h-1zM1454 176h1v1h-1zM1454 178h1v1h-1zM1454 180h1v1h-1zM1454 183h1v1h-1zM1454 185h1v1h-1zM1454 187h1v1h-1zM1454 190h1v1h-1zM1454 192h1v1h-1zM1454 194h1v1h-1zM1454 197h1v1h-1zM1454 199h1v1h-1zM1454 201h1v1h-1zM1454 203h1v1h-1zM1454 206h1v1h-1zM1454 208h1v1h-1zM1454 210h1v1h-1zM1454 213h1v1h-1zM1454 215h1v1h-1zM1454 217h1v1h-1zM1454 220h1v1h-1zM1454 222h1v1h-1zM1454 224h1v1h-1zM1454 227h1v1h-1zM1454 229h1v1h-1zM1454 231h1v1h-1zM1454 234h1v1h-1zM1454 236h1v1h-1zM1454 238h1v1h-1zM1454 241h1v1h-1zM1454 243h1v1h-1zM1454 245h1v1h-1zM1454 248h1v1h-1zM1454 250h1v1h-1zM1454 252h1v1h-1zM1454 255h1v1h-1zM1454 257h1v1h-1zM1454 259h1v1h-1zM1454 261h1v1h-1zM1454 264h1v1h-1zM1454 266h1v1h-1zM1454 268h1v1h-1zM1454 271h1v1h-1zM1454 273h1v1h-1zM1454 275h1v1h-1zM1454 278h1v1h-1zM1454 280h1v1h-1zM1454 282h1v1h-1zM1454 285h1v1h-1zM1629 171h1v1h-1zM1629 173h1v1h-1zM1629 176h1v1h-1zM1629 178h1v1h-1zM1629 180h1v1h-1zM1629 183h1v1h-1zM1629 185h1v1h-1zM1629 187h1v1h-1zM1629 190h1v1h-1zM1629 192h1v1h-1zM1629 194h1v1h-1zM1629 197h1v1h-1zM1629 199h1v1h-1zM1629 201h1v1h-1zM1629 203h1v1h-1zM1629 206h1v1h-1zM1629 208h1v1h-1zM1629 210h1v1h-1zM1629 213h1v1h-1zM1629 215h1v1h-1zM1629 217h1v1h-1zM1629 220h1v1h-1zM1629 222h1v1h-1zM1629 224h1v1h-1zM1629 227h1v1h-1zM1629 229h1v1h-1zM1629 231h1v1h-1zM1629 234h1v1h-1zM1629 236h1v1h-1zM1629 238h1v1h-1zM1629 241h1v1h-1zM1629 243h1v1h-1zM1629 245h1v1h-1zM1629 248h1v1h-1zM1629 250h1v1h-1zM1629 252h1v1h-1zM1629 255h1v1h-1zM1629 257h1v1h-1zM1629 259h1v1h-1zM1629 261h1v1h-1zM1629 264h1v1h-1zM1629 266h1v1h-1zM1629 268h1v1h-1zM1629 271h1v1h-1zM1629 273h1v1h-1zM1629 275h1v1h-1zM1629 278h1v1h-1zM1629 280h1v1h-1zM1629 282h1v1h-1zM1629 285h1v1h-1zM20 288h1v1h-1zM90 288h1v1h-1zM125 288h1v1h-1zM160 288h1v1h-1zM195 288h1v1h-1zM265 288h1v1h-1zM300 288h1v1h-1zM335 288h1v1h-1zM370 288h1v1h-1zM440 288h1v1h-1zM475 288h1v1h-1zM510 288h1v1h-1zM545 288h1v1h-1zM615 288h1v1h-1zM650 288h1v1h-1zM685 288h1v1h-1zM720 288h1v1h-1zM790 288h1v1h-1zM825 288h1v1h-1zM860 288h1v1h-1zM894 288h1v1h-1zM964 288h1v1h-1zM999 288h1v1h-1zM1034 288h1v1h-1zM1069 288h1v1h-1zM1139 288h1v1h-1zM1174 288h1v1h-1zM1209 288h1v1h-1zM1244 288h1v1h-1zM1314 288h1v1h-1zM1349 288h1v1h-1zM1384 288h1v1h-1zM1419 288h1v1h-1zM1489 288h1v1h-1zM1524 288h1v1h-1zM1559 288h1v1h-1zM1594 288h1v1h-1zM1664 288h1v1h-1zM1699 288h1v1h-1zM1734 288h1v1h-1zM20 300h1v1h-1zM90 300h1v1h-1zM125 300h1v1h-1zM160 300h1v1h-1zM195 300h1v1h-1zM265 300h1v1h-1zM300 300h1v1h-1zM335 300h1v1h-1zM370 300h1v1h-1zM440 300h1v1h-1zM475 300h1v1h-1zM510 300h1v1h-1zM545 300h1v1h-1zM615 300h1v1h-1zM650 300h1v1h-1zM685 300h1v1h-1zM720 300h1v1h-1zM790 300h1v1h-1zM825 300h1v1h-1zM860 300h1v1h-1zM894 300h1v1h-1zM964 300h1v1h-1zM999 300h1v1h-1zM1034 300h1v1h-1zM1069 300h1v1h-1zM1139 300h1v1h-1zM1174 300h1v1h-1zM1209 300h1v1h-1zM1244 300h1v1h-1zM1314 300h1v1h-1zM1349 300h1v1h-1zM1384 300h1v1h-1zM1419 300h1v1h-1zM1489 300h1v1h-1zM1524 300h1v1h-1zM1559 300h1v1h-1zM1594 300h1v1h-1zM1664 300h1v1h-1zM1699 300h1v1h-1zM1734 300h1v1h-1zM20 311h1v1h-1zM90 311h1v1h-1zM125 311h1v1h-1zM160 311h1v1h-1zM195 311h1v1h-1zM265 311h1v1h-1zM300 311h1v1h-1zM335 311h1v1h-1zM370 311h1v1h-1zM440 311h1v1h-1zM475 311h1v1h-1zM510 311h1v1h-1zM545 311h1v1h-1zM615 311h1v1h-1zM650 311h1v1h-1zM685 311h1v1h-1zM720 311h1v1h-1zM790 311h1v1h-1zM825 311h1v1h-1zM860 311h1v1h-1zM894 311h1v1h-1zM964 311h1v1h-1zM999 311h1v1h-1zM1034 311h1v1h-1zM1069 311h1v1h-1zM1139 311h1v1h-1zM1174 311h1v1h-1zM1209 311h1v1h-1zM1244 311h1v1h-1zM1314 311h1v1h-1zM1349 311h1v1h-1zM1384 311h1v1h-1zM1419 311h1v1h-1zM1489 311h1v1h-1zM1524 311h1v1h-1zM1559 311h1v1h-1zM1594 311h1v1h-1zM1664 311h1v1h-1zM1699 311h1v1h-1zM1734 311h1v1h-1zM20 323h1v1h-1zM90 323h1v1h-1zM125 323h1v1h-1zM160 323h1v1h-1zM195 323h1v1h-1zM265 323h1v1h-1zM300 323h1v1h-1zM335 323h1v1h-1zM370 323h1v1h-1zM440 323h1v1h-1zM475 323h1v1h-1zM510 323h1v1h-1zM545 323h1v1h-1zM615 323h1v1h-1zM650 323h1v1h-1zM685 323h1v1h-1zM720 323h1v1h-1zM790 323h1v1h-1zM825 323h1v1h-1zM860 323h1v1h-1zM894 323h1v1h-1zM964 323h1v1h-1zM999 323h1v1h-1zM1034 323h1v1h-1zM1069 323h1v1h-1zM1139 323h1v1h-1zM1174 323h1v1h-1zM1209 323h1v1h-1zM1244 323h1v1h-1zM1314 323h1v1h-1zM1349 323h1v1h-1zM1384 323h1v1h-1zM1419 323h1v1h-1zM1489 323h1v1h-1zM1524 323h1v1h-1zM1559 323h1v1h-1zM1594 323h1v1h-1zM1664 323h1v1h-1zM1699 323h1v1h-1zM1734 323h1v1h-1zM20 334h1v1h-1zM90 334h1v1h-1zM125 334h1v1h-1zM160 334h1v1h-1zM195 334h1v1h-1zM265 334h1v1h-1zM300 334h1v1h-1zM335 334h1v1h-1zM370 334h1v1h-1zM440 334h1v1h-1zM475 334h1v1h-1zM510 334h1v1h-1zM545 334h1v1h-1zM615 334h1v1h-1zM650 334h1v1h-1zM685 334h1v1h-1zM720 334h1v1h-1zM790 334h1v1h-1zM825 334h1v1h-1zM860 334h1v1h-1zM894 334h1v1h-1zM964 334h1v1h-1zM999 334h1v1h-1zM1034 334h1v1h-1zM1069 334h1v1h-1zM1139 334h1v1h-1zM1174 334h1v1h-1zM1209 334h1v1h-1zM1244 334h1v1h-1zM1314 334h1v1h-1zM1349 334h1v1h-1zM1384 334h1v1h-1zM1419 334h1v1h-1zM1489 334h1v1h-1zM1524 334h1v1h-1zM1559 334h1v1h-1zM1594 334h1v1h-1zM1664 334h1v1h-1zM1699 334h1v1h-1zM1734 334h1v1h-1zM20 358h1v1h-1zM90 358h1v1h-1zM125 358h1v1h-1zM160 358h1v1h-1zM195 358h1v1h-1zM265 358h1v1h-1zM300 358h1v1h-1zM335 358h1v1h-1zM370 358h1v1h-1zM440 358h1v1h-1zM475 358h1v1h-1zM510 358h1v1h-1zM545 358h1v1h-1zM615 358h1v1h-1zM650 358h1v1h-1zM685 358h1v1h-1zM720 358h1v1h-1zM790 358h1v1h-1zM825 358h1v1h-1zM860 358h1v1h-1zM894 358h1v1h-1zM964 358h1v1h-1zM999 358h1v1h-1zM1034 358h1v1h-1zM1069 358h1v1h-1zM1139 358h1v1h-1zM1174 358h1v1h-1zM1209 358h1v1h-1zM1244 358h1v1h-1zM1314 358h1v1h-1zM1349 358h1v1h-1zM1384 358h1v1h-1zM1419 358h1v1h-1zM1489 358h1v1h-1zM1524 358h1v1h-1zM1559 358h1v1h-1zM1594 358h1v1h-1zM1664 358h1v1h-1zM1699 358h1v1h-1zM1734 358h1v1h-1zM20 369h1v1h-1zM90 369h1v1h-1zM125 369h1v1h-1zM160 369h1v1h-1zM195 369h1v1h-1zM265 369h1v1h-1zM300 369h1v1h-1zM335 369h1v1h-1zM370 369h1v1h-1zM440 369h1v1h-1zM475 369h1v1h-1zM510 369h1v1h-1zM545 369h1v1h-1zM615 369h1v1h-1zM650 369h1v1h-1zM685 369h1v1h-1zM720 369h1v1h-1zM790 369h1v1h-1zM825 369h1v1h-1zM860 369h1v1h-1zM894 369h1v1h-1zM964 369h1v1h-1zM999 369h1v1h-1zM1034 369h1v1h-1zM1069 369h1v1h-1zM1139 369h1v1h-1zM1174 369h1v1h-1zM1209 369h1v1h-1zM1244 369h1v1h-1zM1314 369h1v1h-1zM1349 369h1v1h-1zM1384 369h1v1h-1zM1419 369h1v1h-1zM1489 369h1v1h-1zM1524 369h1v1h-1zM1559 369h1v1h-1zM1594 369h1v1h-1zM1664 369h1v1h-1zM1699 369h1v1h-1zM1734 369h1v1h-1zM20 381h1v1h-1zM90 381h1v1h-1zM125 381h1v1h-1zM160 381h1v1h-1zM195 381h1v1h-1zM265 381h1v1h-1zM300 381h1v1h-1zM335 381h1v1h-1zM370 381h1v1h-1zM440 381h1v1h-1zM475 381h1v1h-1zM510 381h1v1h-1zM545 381h1v1h-1zM615 381h1v1h-1zM650 381h1v1h-1zM685 381h1v1h-1zM720 381h1v1h-1zM790 381h1v1h-1zM825 381h1v1h-1zM860 381h1v1h-1zM894 381h1v1h-1zM964 381h1v1h-1zM999 381h1v1h-1zM1034 381h1v1h-1zM1069 381h1v1h-1zM1139 381h1v1h-1zM1174 381h1v1h-1zM1209 381h1v1h-1zM1244 381h1v1h-1zM1314 381h1v1h-1zM1349 381h1v1h-1zM1384 381h1v1h-1zM1419 381h1v1h-1zM1489 381h1v1h-1zM1524 381h1v1h-1zM1559 381h1v1h-1zM1594 381h1v1h-1zM1664 381h1v1h-1zM1699 381h1v1h-1zM1734 381h1v1h-1zM20 392h1v1h-1zM90 392h1v1h-1zM125 392h1v1h-1zM160 392h1v1h-1zM195 392h1v1h-1zM265 392h1v1h-1zM300 392h1v1h-1zM335 392h1v1h-1zM370 392h1v1h-1zM440 392h1v1h-1zM475 392h1v1h-1zM510 392h1v1h-1zM545 392h1v1h-1zM615 392h1v1h-1zM650 392h1v1h-1zM685 392h1v1h-1zM720 392h1v1h-1zM790 392h1v1h-1zM825 392h1v1h-1zM860 392h1v1h-1zM894 392h1v1h-1zM964 392h1v1h-1zM999 392h1v1h-1zM1034 392h1v1h-1zM1069 392h1v1h-1zM1139 392h1v1h-1zM1174 392h1v1h-1zM1209 392h1v1h-1zM1244 392h1v1h-1zM1314 392h1v1h-1zM1349 392h1v1h-1zM1384 392h1v1h-1zM1419 392h1v1h-1zM1489 392h1v1h-1zM1524 392h1v1h-1zM1559 392h1v1h-1zM1594 392h1v1h-1zM1664 392h1v1h-1zM1699 392h1v1h-1zM1734 392h1v1h-1zM230 288h1v1h-1zM230 290h1v1h-1zM230 293h1v1h-1zM230 295h1v1h-1zM230 297h1v1h-1zM230 300h1v1h-1zM230 302h1v1h-1zM230 304h1v1h-1zM230 307h1v1h-1zM230 309h1v1h-1zM230 311h1v1h-1zM230 314h1v1h-1zM230 316h1v1h-1zM230 318h1v1h-1zM230 320h1v1h-1zM230 323h1v1h-1zM230 325h1v1h-1zM230 327h1v1h-1zM230 330h1v1h-1zM230 332h1v1h-1zM230 334h1v1h-1zM230 337h1v1h-1zM230 339h1v1h-1zM230 341h1v1h-1zM230 344h1v1h-1zM230 346h1v1h-1zM230 348h1v1h-1zM230 351h1v1h-1zM230 353h1v1h-1zM230 355h1v1h-1zM230 358h1v1h-1zM230 360h1v1h-1zM230 362h1v1h-1zM230 365h1v1h-1zM230 367h1v1h-1zM230 369h1v1h-1zM230 372h1v1h-1zM230 374h1v1h-1zM230 376h1v1h-1zM230 378h1v1h-1zM230 381h1v1h-1zM230 383h1v1h-1zM230 385h1v1h-1zM230 388h1v1h-1zM230 390h1v1h-1zM230 392h1v1h-1zM230 395h1v1h-1zM230 397h1v1h-1zM230 399h1v1h-1zM230 402h1v1h-1zM405 288h1v1h-1zM405 290h1v1h-1zM405 293h1v1h-1zM405 295h1v1h-1zM405 297h1v1h-1zM405 300h1v1h-1zM405 302h1v1h-1zM405 304h1v1h-1zM405 307h1v1h-1zM405 309h1v1h-1zM405 311h1v1h-1zM405 314h1v1h-1zM405 316h1v1h-1zM405 318h1v1h-1zM405 320h1v1h-1zM405 323h1v1h-1zM405 325h1v1h-1zM405 327h1v1h-1zM405 330h1v1h-1zM405 332h1v1h-1zM405 334h1v1h-1zM405 337h1v1h-1zM405 339h1v1h-1zM405 341h1v1h-1zM405 344h1v1h-1zM405 346h1v1h-1zM405 348h1v1h-1zM405 351h1v1h-1zM405 353h1v1h-1zM405 355h1v1h-1zM405 358h1v1h-1zM405 360h1v1h-1zM405 362h1v1h-1zM405 365h1v1h-1zM405 367h1v1h-1zM405 369h1v1h-1zM405 372h1v1h-1zM405 374h1v1h-1zM405 376h1v1h-1zM405 378h1v1h-1zM405 381h1v1h-1zM405 383h1v1h-1zM405 385h1v1h-1zM405 388h1v1h-1zM405 390h1v1h-1zM405 392h1v1h-1zM405 395h1v1h-1zM405 397h1v1h-1zM405 399h1v1h-1zM405 402h1v1h-1zM580 288h1v1h-1zM580 290h1v1h-1zM580 293h1v1h-1zM580 295h1v1h-1zM580 297h1v1h-1zM580 300h1v1h-1zM580 302h1v1h-1zM580 304h1v1h-1zM580 307h1v1h-1zM580 309h1v1h-1zM580 311h1v1h-1zM580 314h1v1h-1zM580 316h1v1h-1zM580 318h1v1h-1zM580 320h1v1h-1zM580 323h1v1h-1zM580 325h1v1h-1zM580 327h1v1h-1zM580 330h1v1h-1zM580 332h1v1h-1zM580 334h1v1h-1zM580 337h1v1h-1zM580 339h1v1h-1zM580 341h1v1h-1zM580 344h1v1h-1zM580 346h1v1h-1zM580 348h1v1h-1zM580 351h1v1h-1zM580 353h1v1h-1zM580 355h1v1h-1zM580 358h1v1h-1zM580 360h1v1h-1zM580 362h1v1h-1zM580 365h1v1h-1zM580 367h1v1h-1zM580 369h1v1h-1zM580 372h1v1h-1zM580 374h1v1h-1zM580 376h1v1h-1zM580 378h1v1h-1zM580 381h1v1h-1zM580 383h1v1h-1zM580 385h1v1h-1zM580 388h1v1h-1zM580 390h1v1h-1zM580 392h1v1h-1zM580 395h1v1h-1zM580 397h1v1h-1zM580 399h1v1h-1zM580 402h1v1h-1zM755 288h1v1h-1zM755 290h1v1h-1zM755 293h1v1h-1zM755 295h1v1h-1zM755 297h1v1h-1zM755 300h1v1h-1zM755 302h1v1h-1zM755 304h1v1h-1zM755 307h1v1h-1zM755 309h1v1h-1zM755 311h1v1h-1zM755 314h1v1h-1zM755 316h1v1h-1zM755 318h1v1h-1zM755 320h1v1h-1zM755 323h1v1h-1zM755 325h1v1h-1zM755 327h1v1h-1zM755 330h1v1h-1zM755 332h1v1h-1zM755 334h1v1h-1zM755 337h1v1h-1zM755 339h1v1h-1zM755 341h1v1h-1zM755 344h1v1h-1zM755 346h1v1h-1zM755 348h1v1h-1zM755 351h1v1h-1zM755 353h1v1h-1zM755 355h1v1h-1zM755 358h1v1h-1zM755 360h1v1h-1zM755 362h1v1h-1zM755 365h1v1h-1zM755 367h1v1h-1zM755 369h1v1h-1zM755 372h1v1h-1zM755 374h1v1h-1zM755 376h1v1h-1zM755 378h1v1h-1zM755 381h1v1h-1zM755 383h1v1h-1zM755 385h1v1h-1zM755 388h1v1h-1zM755 390h1v1h-1zM755 392h1v1h-1zM755 395h1v1h-1zM755 397h1v1h-1zM755 399h1v1h-1zM755 402h1v1h-1zM929 288h1v1h-1zM929 290h1v1h-1zM929 293h1v1h-1zM929 295h1v1h-1zM929 297h1v1h-1zM929 300h1v1h-1zM929 302h1v1h-1zM929 304h1v1h-1zM929 307h1v1h-1zM929 309h1v1h-1zM929 311h1v1h-1zM929 314h1v1h-1zM929 316h1v1h-1zM929 318h1v1h-1zM929 320h1v1h-1zM929 323h1v1h-1zM929 325h1v1h-1zM929 327h1v1h-1zM929 330h1v1h-1zM929 332h1v1h-1zM929 334h1v1h-1zM929 337h1v1h-1zM929 339h1v1h-1zM929 341h1v1h-1zM929 344h1v1h-1zM929 346h1v1h-1zM929 348h1v1h-1zM929 351h1v1h-1zM929 353h1v1h-1zM929 355h1v1h-1zM929 358h1v1h-1zM929 360h1v1h-1zM929 362h1v1h-1zM929 365h1v1h-1zM929 367h1v1h-1zM929 369h1v1h-1zM929 372h1v1h-1zM929 374h1v1h-1zM929 376h1v1h-1zM929 378h1v1h-1zM929 381h1v1h-1zM929 383h1v1h-1zM929 385h1v1h-1zM929 388h1v1h-1zM929 390h1v1h-1zM929 392h1v1h-1zM929 395h1v1h-1zM929 397h1v1h-1zM929 399h1v1h-1zM929 402h1v1h-1zM1104 288h1v1h-1zM1104 290h1v1h-1zM1104 293h1v1h-1zM1104 295h1v1h-1zM1104 297h1v1h-1zM1104 300h1v1h-1zM1104 302h1v1h-1zM1104 304h1v1h-1zM1104 307h1v1h-1zM1104 309h1v1h-1zM1104 311h1v1h-1zM1104 314h1v1h-1zM1104 316h1v1h-1zM1104 318h1v1h-1zM1104 320h1v1h-1zM1104 323h1v1h-1zM1104 325h1v1h-1zM1104 327h1v1h-1zM1104 330h1v1h-1zM1104 332h1v1h-1zM1104 334h1v1h-1zM1104 337h1v1h-1zM1104 339h1v1h-1zM1104 341h1v1h-1zM1104 344h1v1h-1zM1104 346h1v1h-1zM1104 348h1v1h-1zM1104 351h1v1h-1zM1104 353h1v1h-1zM1104 355h1v1h-1zM1104 358h1v1h-1zM1104 360h1v1h-1zM1104 362h1v1h-1zM1104 365h1v1h-1zM1104 367h1v1h-1zM1104 369h1v1h-1zM1104 372h1v1h-1zM1104 374h1v1h-1zM1104 376h1v1h-1zM1104 378h1v1h-1zM1104 381h1v1h-1zM1104 383h1v1h-1zM1104 385h1v1h-1zM1104 388h1v1h-1zM1104 390h1v1h-1zM1104 392h1v1h-1zM1104 395h1v1h-1zM1104 397h1v1h-1zM1104 399h1v1h-1zM1104 402h1v1h-1zM1279 288h1v1h-1zM1279 290h1v1h-1zM1279 293h1v1h-1zM1279 295h1v1h-1zM1279 297h1v1h-1zM1279 300h1v1h-1zM1279 302h1v1h-1zM1279 304h1v1h-1zM1279 307h1v1h-1zM1279 309h1v1h-1zM1279 311h1v1h-1zM1279 314h1v1h-1zM1279 316h1v1h-1zM1279 318h1v1h-1zM1279 320h1v1h-1zM1279 323h1v1h-1zM1279 325h1v1h-1zM1279 327h1v1h-1zM1279 330h1v1h-1zM1279 332h1v1h-1zM1279 334h1v1h-1zM1279 337h1v1h-1zM1279 339h1v1h-1zM1279 341h1v1h-1zM1279 344h1v1h-1zM1279 346h1v1h-1zM1279 348h1v1h-1zM1279 351h1v1h-1zM1279 353h1v1h-1zM1279 355h1v1h-1zM1279 358h1v1h-1zM1279 360h1v1h-1zM1279 362h1v1h-1zM1279 365h1v1h-1zM1279 367h1v1h-1zM1279 369h1v1h-1zM1279 372h1v1h-1zM1279 374h1v1h-1zM1279 376h1v1h-1zM1279 378h1v1h-1zM1279 381h1v1h-1zM1279 383h1v1h-1zM1279 385h1v1h-1zM1279 388h1v1h-1zM1279 390h1v1h-1zM1279 392h1v1h-1zM1279 395h1v1h-1zM1279 397h1v1h-1zM1279 399h1v1h-1zM1279 402h1v1h-1zM1454 288h1v1h-1zM1454 290h1v1h-1zM1454 293h1v1h-1zM1454 295h1v1h-1zM1454 297h1v1h-1zM1454 300h1v1h-1zM1454 302h1v1h-1zM1454 304h1v1h-1zM1454 307h1v1h-1zM1454 309h1v1h-1zM1454 311h1v1h-1zM1454 314h1v1h-1zM1454 316h1v1h-1zM1454 318h1v1h-1zM1454 320h1v1h-1zM1454 323h1v1h-1zM1454 325h1v1h-1zM1454 327h1v1h-1zM1454 330h1v1h-1zM1454 332h1v1h-1zM1454 334h1v1h-1zM1454 337h1v1h-1zM1454 339h1v1h-1zM1454 341h1v1h-1zM1454 344h1v1h-1zM1454 346h1v1h-1zM1454 348h1v1h-1zM1454 351h1v1h-1zM1454 353h1v1h-1zM1454 355h1v1h-1zM1454 358h1v1h-1zM1454 360h1v1h-1zM1454 362h1v1h-1zM1454 365h1v1h-1zM1454 367h1v1h-1zM1454 369h1v1h-1zM1454 372h1v1h-1zM1454 374h1v1h-1zM1454 376h1v1h-1zM1454 378h1v1h-1zM1454 381h1v1h-1zM1454 383h1v1h-1zM1454 385h1v1h-1zM1454 388h1v1h-1zM1454 390h1v1h-1zM1454 392h1v1h-1zM1454 395h1v1h-1zM1454 397h1v1h-1zM1454 399h1v1h-1zM1454 402h1v1h-1zM1629 288h1v1h-1zM1629 290h1v1h-1zM1629 293h1v1h-1zM1629 295h1v1h-1zM1629 297h1v1h-1zM1629 300h1v1h-1zM1629 302h1v1h-1zM1629 304h1v1h-1zM1629 307h1v1h-1zM1629 309h1v1h-1zM1629 311h1v1h-1zM1629 314h1v1h-1zM1629 316h1v1h-1zM1629 318h1v1h-1zM1629 320h1v1h-1zM1629 323h1v1h-1zM1629 325h1v1h-1zM1629 327h1v1h-1zM1629 330h1v1h-1zM1629 332h1v1h-1zM1629 334h1v1h-1zM1629 337h1v1h-1zM1629 339h1v1h-1zM1629 341h1v1h-1zM1629 344h1v1h-1zM1629 346h1v1h-1zM1629 348h1v1h-1zM1629 351h1v1h-1zM1629 353h1v1h-1zM1629 355h1v1h-1zM1629 358h1v1h-1zM1629 360h1v1h-1zM1629 362h1v1h-1zM1629 365h1v1h-1zM1629 367h1v1h-1zM1629 369h1v1h-1zM1629 372h1v1h-1zM1629 374h1v1h-1zM1629 376h1v1h-1zM1629 378h1v1h-1zM1629 381h1v1h-1zM1629 383h1v1h-1zM1629 385h1v1h-1zM1629 388h1v1h-1zM1629 390h1v1h-1zM1629 392h1v1h-1zM1629 395h1v1h-1zM1629 397h1v1h-1zM1629 399h1v1h-1zM1629 402h1v1h-1zM20 408h1v1h-1zM90 408h1v1h-1zM125 408h1v1h-1zM160 408h1v1h-1zM195 408h1v1h-1zM265 408h1v1h-1zM300 408h1v1h-1zM335 408h1v1h-1zM370 408h1v1h-1zM440 408h1v1h-1zM475 408h1v1h-1zM510 408h1v1h-1zM545 408h1v1h-1zM615 408h1v1h-1zM650 408h1v1h-1zM685 408h1v1h-1zM720 408h1v1h-1zM790 408h1v1h-1zM825 408h1v1h-1zM860 408h1v1h-1zM894 408h1v1h-1zM964 408h1v1h-1zM999 408h1v1h-1zM1034 408h1v1h-1zM1069 408h1v1h-1zM1139 408h1v1h-1zM1174 408h1v1h-1zM1209 408h1v1h-1zM1244 408h1v1h-1zM1314 408h1v1h-1zM1349 408h1v1h-1zM1384 408h1v1h-1zM1419 408h1v1h-1zM1489 408h1v1h-1zM1524 408h1v1h-1zM1559 408h1v1h-1zM1594 408h1v1h-1zM1664 408h1v1h-1zM1699 408h1v1h-1zM1734 408h1v1h-1zM20 419h1v1h-1zM90 419h1v1h-1zM125 419h1v1h-1zM160 419h1v1h-1zM195 419h1v1h-1zM265 419h1v1h-1zM300 419h1v1h-1zM335 419h1v1h-1zM370 419h1v1h-1zM440 419h1v1h-1zM475 419h1v1h-1zM510 419h1v1h-1zM545 419h1v1h-1zM615 419h1v1h-1zM650 419h1v1h-1zM685 419h1v1h-1zM720 419h1v1h-1zM790 419h1v1h-1zM825 419h1v1h-1zM860 419h1v1h-1zM894 419h1v1h-1zM964 419h1v1h-1zM999 419h1v1h-1zM1034 419h1v1h-1zM1069 419h1v1h-1zM1139 419h1v1h-1zM1174 419h1v1h-1zM1209 419h1v1h-1zM1244 419h1v1h-1zM1314 419h1v1h-1zM1349 419h1v1h-1zM1384 419h1v1h-1zM1419 419h1v1h-1zM1489 419h1v1h-1zM1524 419h1v1h-1zM1559 419h1v1h-1zM1594 419h1v1h-1zM1664 419h1v1h-1zM1699 419h1v1h-1zM1734 419h1v1h-1zM20 431h1v1h-1zM90 431h1v1h-1zM125 431h1v1h-1zM160 431h1v1h-1zM195 431h1v1h-1zM265 431h1v1h-1zM300 431h1v1h-1zM335 431h1v1h-1zM370 431h1v1h-1zM440 431h1v1h-1zM475 431h1v1h-1zM510 431h1v1h-1zM545 431h1v1h-1zM615 431h1v1h-1zM650 431h1v1h-1zM685 431h1v1h-1zM720 431h1v1h-1zM790 431h1v1h-1zM825 431h1v1h-1zM860 431h1v1h-1zM894 431h1v1h-1zM964 431h1v1h-1zM999 431h1v1h-1zM1034 431h1v1h-1zM1069 431h1v1h-1zM1139 431h1v1h-1zM1174 431h1v1h-1zM1209 431h1v1h-1zM1244 431h1v1h-1zM1314 431h1v1h-1zM1349 431h1v1h-1zM1384 431h1v1h-1zM1419 431h1v1h-1zM1489 431h1v1h-1zM1524 431h1v1h-1zM1559 431h1v1h-1zM1594 431h1v1h-1zM1664 431h1v1h-1zM1699 431h1v1h-1zM1734 431h1v1h-1zM20 442h1v1h-1zM90 442h1v1h-1zM125 442h1v1h-1zM160 442h1v1h-1zM195 442h1v1h-1zM265 442h1v1h-1zM300 442h1v1h-1zM335 442h1v1h-1zM370 442h1v1h-1zM440 442h1v1h-1zM475 442h1v1h-1zM510 442h1v1h-1zM545 442h1v1h-1zM615 442h1v1h-1zM650 442h1v1h-1zM685 442h1v1h-1zM720 442h1v1h-1zM790 442h1v1h-1zM825 442h1v1h-1zM860 442h1v1h-1zM894 442h1v1h-1zM964 442h1v1h-1zM999 442h1v1h-1zM1034 442h1v1h-1zM1069 442h1v1h-1zM1139 442h1v1h-1zM1174 442h1v1h-1zM1209 442h1v1h-1zM1244 442h1v1h-1zM1314 442h1v1h-1zM1349 442h1v1h-1zM1384 442h1v1h-1zM1419 442h1v1h-1zM1489 442h1v1h-1zM1524 442h1v1h-1zM1559 442h1v1h-1zM1594 442h1v1h-1zM1664 442h1v1h-1zM1699 442h1v1h-1zM1734 442h1v1h-1zM20 454h1v1h-1zM90 454h1v1h-1zM125 454h1v1h-1zM160 454h1v1h-1zM195 454h1v1h-1zM265 454h1v1h-1zM300 454h1v1h-1zM335 454h1v1h-1zM370 454h1v1h-1zM440 454h1v1h-1zM475 454h1v1h-1zM510 454h1v1h-1zM545 454h1v1h-1zM615 454h1v1h-1zM650 454h1v1h-1zM685 454h1v1h-1zM720 454h1v1h-1zM790 454h1v1h-1zM825 454h1v1h-1zM860 454h1v1h-1zM894 454h1v1h-1zM964 454h1v1h-1zM999 454h1v1h-1zM1034 454h1v1h-1zM1069 454h1v1h-1zM1139 454h1v1h-1zM1174 454h1v1h-1zM1209 454h1v1h-1zM1244 454h1v1h-1zM1314 454h1v1h-1zM1349 454h1v1h-1zM1384 454h1v1h-1zM1419 454h1v1h-1zM1489 454h1v1h-1zM1524 454h1v1h-1zM1559 454h1v1h-1zM1594 454h1v1h-1zM1664 454h1v1h-1zM1699 454h1v1h-1zM1734 454h1v1h-1zM20 466h1v1h-1zM90 466h1v1h-1zM125 466h1v1h-1zM160 466h1v1h-1zM195 466h1v1h-1zM265 466h1v1h-1zM300 466h1v1h-1zM335 466h1v1h-1zM370 466h1v1h-1zM440 466h1v1h-1zM475 466h1v1h-1zM510 466h1v1h-1zM545 466h1v1h-1zM615 466h1v1h-1zM650 466h1v1h-1zM685 466h1v1h-1zM720 466h1v1h-1zM790 466h1v1h-1zM825 466h1v1h-1zM860 466h1v1h-1zM894 466h1v1h-1zM964 466h1v1h-1zM999 466h1v1h-1zM1034 466h1v1h-1zM1069 466h1v1h-1zM1139 466h1v1h-1zM1174 466h1v1h-1zM1209 466h1v1h-1zM1244 466h1v1h-1zM1314 466h1v1h-1zM1349 466h1v1h-1zM1384 466h1v1h-1zM1419 466h1v1h-1zM1489 466h1v1h-1zM1524 466h1v1h-1zM1559 466h1v1h-1zM1594 466h1v1h-1zM1664 466h1v1h-1zM1699 466h1v1h-1zM1734 466h1v1h-1zM20 477h1v1h-1zM90 477h1v1h-1zM125 477h1v1h-1zM160 477h1v1h-1zM195 477h1v1h-1zM265 477h1v1h-1zM300 477h1v1h-1zM335 477h1v1h-1zM370 477h1v1h-1zM440 477h1v1h-1zM475 477h1v1h-1zM510 477h1v1h-1zM545 477h1v1h-1zM615 477h1v1h-1zM650 477h1v1h-1zM685 477h1v1h-1zM720 477h1v1h-1zM790 477h1v1h-1zM825 477h1v1h-1zM860 477h1v1h-1zM894 477h1v1h-1zM964 477h1v1h-1zM999 477h1v1h-1zM1034 477h1v1h-1zM1069 477h1v1h-1zM1139 477h1v1h-1zM1174 477h1v1h-1zM1209 477h1v1h-1zM1244 477h1v1h-1zM1314 477h1v1h-1zM1349 477h1v1h-1zM1384 477h1v1h-1zM1419 477h1v1h-1zM1489 477h1v1h-1zM1524 477h1v1h-1zM1559 477h1v1h-1zM1594 477h1v1h-1zM1664 477h1v1h-1zM1699 477h1v1h-1zM1734 477h1v1h-1zM20 489h1v1h-1zM90 489h1v1h-1zM125 489h1v1h-1zM160 489h1v1h-1zM195 489h1v1h-1zM265 489h1v1h-1zM300 489h1v1h-1zM335 489h1v1h-1zM370 489h1v1h-1zM440 489h1v1h-1zM475 489h1v1h-1zM510 489h1v1h-1zM545 489h1v1h-1zM615 489h1v1h-1zM650 489h1v1h-1zM685 489h1v1h-1zM720 489h1v1h-1zM790 489h1v1h-1zM825 489h1v1h-1zM860 489h1v1h-1zM894 489h1v1h-1zM964 489h1v1h-1zM999 489h1v1h-1zM1034 489h1v1h-1zM1069 489h1v1h-1zM1139 489h1v1h-1zM1174 489h1v1h-1zM1209 489h1v1h-1zM1244 489h1v1h-1zM1314 489h1v1h-1zM1349 489h1v1h-1zM1384 489h1v1h-1zM1419 489h1v1h-1zM1489 489h1v1h-1zM1524 489h1v1h-1zM1559 489h1v1h-1zM1594 489h1v1h-1zM1664 489h1v1h-1zM1699 489h1v1h-1zM1734 489h1v1h-1zM20 500h1v1h-1zM90 500h1v1h-1zM125 500h1v1h-1zM160 500h1v1h-1zM195 500h1v1h-1zM265 500h1v1h-1zM300 500h1v1h-1zM335 500h1v1h-1zM370 500h1v1h-1zM440 500h1v1h-1zM475 500h1v1h-1zM510 500h1v1h-1zM545 500h1v1h-1zM615 500h1v1h-1zM650 500h1v1h-1zM685 500h1v1h-1zM720 500h1v1h-1zM790 500h1v1h-1zM825 500h1v1h-1zM860 500h1v1h-1zM894 500h1v1h-1zM964 500h1v1h-1zM999 500h1v1h-1zM1034 500h1v1h-1zM1069 500h1v1h-1zM1139 500h1v1h-1zM1174 500h1v1h-1zM1209 500h1v1h-1zM1244 500h1v1h-1zM1314 500h1v1h-1zM1349 500h1v1h-1zM1384 500h1v1h-1zM1419 500h1v1h-1zM1489 500h1v1h-1zM1524 500h1v1h-1zM1559 500h1v1h-1zM1594 500h1v1h-1zM1664 500h1v1h-1zM1699 500h1v1h-1zM1734 500h1v1h-1zM20 512h1v1h-1zM90 512h1v1h-1zM125 512h1v1h-1zM160 512h1v1h-1zM195 512h1v1h-1zM265 512h1v1h-1zM300 512h1v1h-1zM335 512h1v1h-1zM370 512h1v1h-1zM440 512h1v1h-1zM475 512h1v1h-1zM510 512h1v1h-1zM545 512h1v1h-1zM615 512h1v1h-1zM650 512h1v1h-1zM685 512h1v1h-1zM720 512h1v1h-1zM790 512h1v1h-1zM825 512h1v1h-1zM860 512h1v1h-1zM894 512h1v1h-1zM964 512h1v1h-1zM999 512h1v1h-1zM1034 512h1v1h-1zM1069 512h1v1h-1zM1139 512h1v1h-1zM1174 512h1v1h-1zM1209 512h1v1h-1zM1244 512h1v1h-1zM1314 512h1v1h-1zM1349 512h1v1h-1zM1384 512h1v1h-1zM1419 512h1v1h-1zM1489 512h1v1h-1zM1524 512h1v1h-1zM1559 512h1v1h-1zM1594 512h1v1h-1zM1664 512h1v1h-1zM1699 512h1v1h-1zM1734 512h1v1h-1zM230 408h1v1h-1zM230 410h1v1h-1zM230 412h1v1h-1zM230 415h1v1h-1zM230 417h1v1h-1zM230 419h1v1h-1zM230 422h1v1h-1zM230 424h1v1h-1zM230 426h1v1h-1zM230 428h1v1h-1zM230 431h1v1h-1zM230 433h1v1h-1zM230 435h1v1h-1zM230 438h1v1h-1zM230 440h1v1h-1zM230 442h1v1h-1zM230 445h1v1h-1zM230 447h1v1h-1zM230 449h1v1h-1zM230 452h1v1h-1zM230 454h1v1h-1zM230 456h1v1h-1zM230 459h1v1h-1zM230 461h1v1h-1zM230 463h1v1h-1zM230 466h1v1h-1zM230 468h1v1h-1zM230 470h1v1h-1zM230 473h1v1h-1zM230 475h1v1h-1zM230 477h1v1h-1zM230 480h1v1h-1zM230 482h1v1h-1zM230 484h1v1h-1zM230 486h1v1h-1zM230 489h1v1h-1zM230 491h1v1h-1zM230 493h1v1h-1zM230 496h1v1h-1zM230 498h1v1h-1zM230 500h1v1h-1zM230 503h1v1h-1zM230 505h1v1h-1zM230 507h1v1h-1zM230 510h1v1h-1zM230 512h1v1h-1zM230 514h1v1h-1zM230 517h1v1h-1zM230 519h1v1h-1zM230 521h1v1h-1zM405 408h1v1h-1zM405 410h1v1h-1zM405 412h1v1h-1zM405 415h1v1h-1zM405 417h1v1h-1zM405 419h1v1h-1zM405 422h1v1h-1zM405 424h1v1h-1zM405 426h1v1h-1zM405 428h1v1h-1zM405 431h1v1h-1zM405 433h1v1h-1zM405 435h1v1h-1zM405 438h1v1h-1zM405 440h1v1h-1zM405 442h1v1h-1zM405 445h1v1h-1zM405 447h1v1h-1zM405 449h1v1h-1zM405 452h1v1h-1zM405 454h1v1h-1zM405 456h1v1h-1zM405 459h1v1h-1zM405 461h1v1h-1zM405 463h1v1h-1zM405 466h1v1h-1zM405 468h1v1h-1zM405 470h1v1h-1zM405 473h1v1h-1zM405 475h1v1h-1zM405 477h1v1h-1zM405 480h1v1h-1zM405 482h1v1h-1zM405 484h1v1h-1zM405 486h1v1h-1zM405 489h1v1h-1zM405 491h1v1h-1zM405 493h1v1h-1zM405 496h1v1h-1zM405 498h1v1h-1zM405 500h1v1h-1zM405 503h1v1h-1zM405 505h1v1h-1zM405 507h1v1h-1zM405 510h1v1h-1zM405 512h1v1h-1zM405 514h1v1h-1zM405 517h1v1h-1zM405 519h1v1h-1zM405 521h1v1h-1zM580 408h1v1h-1zM580 410h1v1h-1zM580 412h1v1h-1zM580 415h1v1h-1zM580 417h1v1h-1zM580 419h1v1h-1zM580 422h1v1h-1zM580 424h1v1h-1zM580 426h1v1h-1zM580 428h1v1h-1zM580 431h1v1h-1zM580 433h1v1h-1zM580 435h1v1h-1zM580 438h1v1h-1zM580 440h1v1h-1zM580 442h1v1h-1zM580 445h1v1h-1zM580 447h1v1h-1zM580 449h1v1h-1zM580 452h1v1h-1zM580 454h1v1h-1zM580 456h1v1h-1zM580 459h1v1h-1zM580 461h1v1h-1zM580 463h1v1h-1zM580 466h1v1h-1zM580 468h1v1h-1zM580 470h1v1h-1zM580 473h1v1h-1zM580 475h1v1h-1zM580 477h1v1h-1zM580 480h1v1h-1zM580 482h1v1h-1zM580 484h1v1h-1zM580 486h1v1h-1zM580 489h1v1h-1zM580 491h1v1h-1zM580 493h1v1h-1zM580 496h1v1h-1zM580 498h1v1h-1zM580 500h1v1h-1zM580 503h1v1h-1zM580 505h1v1h-1zM580 507h1v1h-1zM580 510h1v1h-1zM580 512h1v1h-1zM580 514h1v1h-1zM580 517h1v1h-1zM580 519h1v1h-1zM580 521h1v1h-1zM755 408h1v1h-1zM755 410h1v1h-1zM755 412h1v1h-1zM755 415h1v1h-1zM755 417h1v1h-1zM755 419h1v1h-1zM755 422h1v1h-1zM755 424h1v1h-1zM755 426h1v1h-1zM755 428h1v1h-1zM755 431h1v1h-1zM755 433h1v1h-1zM755 435h1v1h-1zM755 438h1v1h-1zM755 440h1v1h-1zM755 442h1v1h-1zM755 445h1v1h-1zM755 447h1v1h-1zM755 449h1v1h-1zM755 452h1v1h-1zM755 454h1v1h-1zM755 456h1v1h-1zM755 459h1v1h-1zM755 461h1v1h-1zM755 463h1v1h-1zM755 466h1v1h-1zM755 468h1v1h-1zM755 470h1v1h-1zM755 473h1v1h-1zM755 475h1v1h-1zM755 477h1v1h-1zM755 480h1v1h-1zM755 482h1v1h-1zM755 484h1v1h-1zM755 486h1v1h-1zM755 489h1v1h-1zM755 491h1v1h-1zM755 493h1v1h-1zM755 496h1v1h-1zM755 498h1v1h-1zM755 500h1v1h-1zM755 503h1v1h-1zM755 505h1v1h-1zM755 507h1v1h-1zM755 510h1v1h-1zM755 512h1v1h-1zM755 514h1v1h-1zM755 517h1v1h-1zM755 519h1v1h-1zM755 521h1v1h-1zM929 408h1v1h-1zM929 410h1v1h-1zM929 412h1v1h-1zM929 415h1v1h-1zM929 417h1v1h-1zM929 419h1v1h-1zM929 422h1v1h-1zM929 424h1v1h-1zM929 426h1v1h-1zM929 428h1v1h-1zM929 431h1v1h-1zM929 433h1v1h-1zM929 435h1v1h-1zM929 438h1v1h-1zM929 440h1v1h-1zM929 442h1v1h-1zM929 445h1v1h-1zM929 447h1v1h-1zM929 449h1v1h-1zM929 452h1v1h-1zM929 454h1v1h-1zM929 456h1v1h-1zM929 459h1v1h-1zM929 461h1v1h-1zM929 463h1v1h-1zM929 466h1v1h-1zM929 468h1v1h-1zM929 470h1v1h-1zM929 473h1v1h-1zM929 475h1v1h-1zM929 477h1v1h-1zM929 480h1v1h-1zM929 482h1v1h-1zM929 484h1v1h-1zM929 486h1v1h-1zM929 489h1v1h-1zM929 491h1v1h-1zM929 493h1v1h-1zM929 496h1v1h-1zM929 498h1v1h-1zM929 500h1v1h-1zM929 503h1v1h-1zM929 505h1v1h-1zM929 507h1v1h-1zM929 510h1v1h-1zM929 512h1v1h-1zM929 514h1v1h-1zM929 517h1v1h-1zM929 519h1v1h-1zM929 521h1v1h-1zM1104 408h1v1h-1zM1104 410h1v1h-1zM1104 412h1v1h-1zM1104 415h1v1h-1zM1104 417h1v1h-1zM1104 419h1v1h-1zM1104 422h1v1h-1zM1104 424h1v1h-1zM1104 426h1v1h-1zM1104 428h1v1h-1zM1104 431h1v1h-1zM1104 433h1v1h-1zM1104 435h1v1h-1zM1104 438h1v1h-1zM1104 440h1v1h-1zM1104 442h1v1h-1zM1104 445h1v1h-1zM1104 447h1v1h-1zM1104 449h1v1h-1zM1104 452h1v1h-1zM1104 454h1v1h-1zM1104 456h1v1h-1zM1104 459h1v1h-1zM1104 461h1v1h-1zM1104 463h1v1h-1zM1104 466h1v1h-1zM1104 468h1v1h-1zM1104 470h1v1h-1zM1104 473h1v1h-1zM1104 475h1v1h-1zM1104 477h1v1h-1zM1104 480h1v1h-1zM1104 482h1v1h-1zM1104 484h1v1h-1zM1104 486h1v1h-1zM1104 489h1v1h-1zM1104 491h1v1h-1zM1104 493h1v1h-1zM1104 496h1v1h-1zM1104 498h1v1h-1zM1104 500h1v1h-1zM1104 503h1v1h-1zM1104 505h1v1h-1zM1104 507h1v1h-1zM1104 510h1v1h-1zM1104 512h1v1h-1zM1104 514h1v1h-1zM1104 517h1v1h-1zM1104 519h1v1h-1zM1104 521h1v1h-1zM1279 408h1v1h-1zM1279 410h1v1h-1zM1279 412h1v1h-1zM1279 415h1v1h-1zM1279 417h1v1h-1zM1279 419h1v1h-1zM1279 422h1v1h-1zM1279 424h1v1h-1zM1279 426h1v1h-1zM1279 428h1v1h-1zM1279 431h1v1h-1zM1279 433h1v1h-1zM1279 435h1v1h-1zM1279 438h1v1h-1zM1279 440h1v1h-1zM1279 442h1v1h-1zM1279 445h1v1h-1zM1279 447h1v1h-1zM1279 449h1v1h-1zM1279 452h1v1h-1zM1279 454h1v1h-1zM1279 456h1v1h-1zM1279 459h1v1h-1zM1279 461h1v1h-1zM1279 463h1v1h-1zM1279 466h1v1h-1zM1279 468h1v1h-1zM1279 470h1v1h-1zM1279 473h1v1h-1zM1279 475h1v1h-1zM1279 477h1v1h-1zM1279 480h1v1h-1zM1279 482h1v1h-1zM1279 484h1v1h-1zM1279 486h1v1h-1zM1279 489h1v1h-1zM1279 491h1v1h-1zM1279 493h1v1h-1zM1279 496h1v1h-1zM1279 498h1v1h-1zM1279 500h1v1h-1zM1279 503h1v1h-1zM1279 505h1v1h-1zM1279 507h1v1h-1zM1279 510h1v1h-1zM1279 512h1v1h-1zM1279 514h1v1h-1zM1279 517h1v1h-1zM1279 519h1v1h-1zM1279 521h1v1h-1zM1454 408h1v1h-1zM1454 410h1v1h-1zM1454 412h1v1h-1zM1454 415h1v1h-1zM1454 417h1v1h-1zM1454 419h1v1h-1zM1454 422h1v1h-1zM1454 424h1v1h-1zM1454 426h1v1h-1zM1454 428h1v1h-1zM1454 431h1v1h-1zM1454 433h1v1h-1zM1454 435h1v1h-1zM1454 438h1v1h-1zM1454 440h1v1h-1zM1454 442h1v1h-1zM1454 445h1v1h-1zM1454 447h1v1h-1zM1454 449h1v1h-1zM1454 452h1v1h-1zM1454 454h1v1h-1zM1454 456h1v1h-1zM1454 459h1v1h-1zM1454 461h1v1h-1zM1454 463h1v1h-1zM1454 466h1v1h-1zM1454 468h1v1h-1zM1454 470h1v1h-1zM1454 473h1v1h-1zM1454 475h1v1h-1zM1454 477h1v1h-1zM1454 480h1v1h-1zM1454 482h1v1h-1zM1454 484h1v1h-1zM1454 486h1v1h-1zM1454 489h1v1h-1zM1454 491h1v1h-1zM1454 493h1v1h-1zM1454 496h1v1h-1zM1454 498h1v1h-1zM1454 500h1v1h-1zM1454 503h1v1h-1zM1454 505h1v1h-1zM1454 507h1v1h-1zM1454 510h1v1h-1zM1454 512h1v1h-1zM1454 514h1v1h-1zM1454 517h1v1h-1zM1454 519h1v1h-1zM1454 521h1v1h-1zM1629 408h1v1h-1zM1629 410h1v1h-1zM1629 412h1v1h-1zM1629 415h1v1h-1zM1629 417h1v1h-1zM1629 419h1v1h-1zM1629 422h1v1h-1zM1629 424h1v1h-1zM1629 426h1v1h-1zM1629 428h1v1h-1zM1629 431h1v1h-1zM1629 433h1v1h-1zM1629 435h1v1h-1zM1629 438h1v1h-1zM1629 440h1v1h-1zM1629 442h1v1h-1zM1629 445h1v1h-1zM1629 447h1v1h-1zM1629 449h1v1h-1zM1629 452h1v1h-1zM1629 454h1v1h-1zM1629 456h1v1h-1zM1629 459h1v1h-1zM1629 461h1v1h-1zM1629 463h1v1h-1zM1629 466h1v1h-1zM1629 468h1v1h-1zM1629 470h1v1h-1zM1629 473h1v1h-1zM1629 475h1v1h-1zM1629 477h1v1h-1zM1629 480h1v1h-1zM1629 482h1v1h-1zM1629 484h1v1h-1zM1629 486h1v1h-1zM1629 489h1v1h-1zM1629 491h1v1h-1zM1629 493h1v1h-1zM1629 496h1v1h-1zM1629 498h1v1h-1zM1629 500h1v1h-1zM1629 503h1v1h-1zM1629 505h1v1h-1zM1629 507h1v1h-1zM1629 510h1v1h-1zM1629 512h1v1h-1zM1629 514h1v1h-1zM1629 517h1v1h-1zM1629 519h1v1h-1zM1629 521h1v1h-1zM20 522h1v1h-1zM90 522h1v1h-1zM125 522h1v1h-1zM160 522h1v1h-1zM195 522h1v1h-1zM265 522h1v1h-1zM300 522h1v1h-1zM335 522h1v1h-1zM370 522h1v1h-1zM440 522h1v1h-1zM475 522h1v1h-1zM510 522h1v1h-1zM545 522h1v1h-1zM615 522h1v1h-1zM650 522h1v1h-1zM685 522h1v1h-1zM720 522h1v1h-1zM790 522h1v1h-1zM825 522h1v1h-1zM860 522h1v1h-1zM894 522h1v1h-1zM964 522h1v1h-1zM999 522h1v1h-1zM1034 522h1v1h-1zM1069 522h1v1h-1zM1139 522h1v1h-1zM1174 522h1v1h-1zM1209 522h1v1h-1zM1244 522h1v1h-1zM1314 522h1v1h-1zM1349 522h1v1h-1zM1384 522h1v1h-1zM1419 522h1v1h-1zM1489 522h1v1h-1zM1524 522h1v1h-1zM1559 522h1v1h-1zM1594 522h1v1h-1zM1664 522h1v1h-1zM1699 522h1v1h-1zM1734 522h1v1h-1zM20 545h1v1h-1zM90 545h1v1h-1zM125 545h1v1h-1zM160 545h1v1h-1zM195 545h1v1h-1zM265 545h1v1h-1zM300 545h1v1h-1zM335 545h1v1h-1zM370 545h1v1h-1zM440 545h1v1h-1zM475 545h1v1h-1zM510 545h1v1h-1zM545 545h1v1h-1zM615 545h1v1h-1zM650 545h1v1h-1zM685 545h1v1h-1zM720 545h1v1h-1zM790 545h1v1h-1zM825 545h1v1h-1zM860 545h1v1h-1zM894 545h1v1h-1zM964 545h1v1h-1zM999 545h1v1h-1zM1034 545h1v1h-1zM1069 545h1v1h-1zM1139 545h1v1h-1zM1174 545h1v1h-1zM1209 545h1v1h-1zM1244 545h1v1h-1zM1314 545h1v1h-1zM1349 545h1v1h-1zM1384 545h1v1h-1zM1419 545h1v1h-1zM1489 545h1v1h-1zM1524 545h1v1h-1zM1559 545h1v1h-1zM1594 545h1v1h-1zM1664 545h1v1h-1zM1699 545h1v1h-1zM1734 545h1v1h-1zM20 557h1v1h-1zM90 557h1v1h-1zM125 557h1v1h-1zM160 557h1v1h-1zM195 557h1v1h-1zM265 557h1v1h-1zM300 557h1v1h-1zM335 557h1v1h-1zM370 557h1v1h-1zM440 557h1v1h-1zM475 557h1v1h-1zM510 557h1v1h-1zM545 557h1v1h-1zM615 557h1v1h-1zM650 557h1v1h-1zM685 557h1v1h-1zM720 557h1v1h-1zM790 557h1v1h-1zM825 557h1v1h-1zM860 557h1v1h-1zM894 557h1v1h-1zM964 557h1v1h-1zM999 557h1v1h-1zM1034 557h1v1h-1zM1069 557h1v1h-1zM1139 557h1v1h-1zM1174 557h1v1h-1zM1209 557h1v1h-1zM1244 557h1v1h-1zM1314 557h1v1h-1zM1349 557h1v1h-1zM1384 557h1v1h-1zM1419 557h1v1h-1zM1489 557h1v1h-1zM1524 557h1v1h-1zM1559 557h1v1h-1zM1594 557h1v1h-1zM1664 557h1v1h-1zM1699 557h1v1h-1zM1734 557h1v1h-1zM20 568h1v1h-1zM90 568h1v1h-1zM125 568h1v1h-1zM160 568h1v1h-1zM195 568h1v1h-1zM265 568h1v1h-1zM300 568h1v1h-1zM335 568h1v1h-1zM370 568h1v1h-1zM440 568h1v1h-1zM475 568h1v1h-1zM510 568h1v1h-1zM545 568h1v1h-1zM615 568h1v1h-1zM650 568h1v1h-1zM685 568h1v1h-1zM720 568h1v1h-1zM790 568h1v1h-1zM825 568h1v1h-1zM860 568h1v1h-1zM894 568h1v1h-1zM964 568h1v1h-1zM999 568h1v1h-1zM1034 568h1v1h-1zM1069 568h1v1h-1zM1139 568h1v1h-1zM1174 568h1v1h-1zM1209 568h1v1h-1zM1244 568h1v1h-1zM1314 568h1v1h-1zM1349 568h1v1h-1zM1384 568h1v1h-1zM1419 568h1v1h-1zM1489 568h1v1h-1zM1524 568h1v1h-1zM1559 568h1v1h-1zM1594 568h1v1h-1zM1664 568h1v1h-1zM1699 568h1v1h-1zM1734 568h1v1h-1zM20 580h1v1h-1zM90 580h1v1h-1zM125 580h1v1h-1zM160 580h1v1h-1zM195 580h1v1h-1zM265 580h1v1h-1zM300 580h1v1h-1zM335 580h1v1h-1zM370 580h1v1h-1zM440 580h1v1h-1zM475 580h1v1h-1zM510 580h1v1h-1zM545 580h1v1h-1zM615 580h1v1h-1zM650 580h1v1h-1zM685 580h1v1h-1zM720 580h1v1h-1zM790 580h1v1h-1zM825 580h1v1h-1zM860 580h1v1h-1zM894 580h1v1h-1zM964 580h1v1h-1zM999 580h1v1h-1zM1034 580h1v1h-1zM1069 580h1v1h-1zM1139 580h1v1h-1zM1174 580h1v1h-1zM1209 580h1v1h-1zM1244 580h1v1h-1zM1314 580h1v1h-1zM1349 580h1v1h-1zM1384 580h1v1h-1zM1419 580h1v1h-1zM1489 580h1v1h-1zM1524 580h1v1h-1zM1559 580h1v1h-1zM1594 580h1v1h-1zM1664 580h1v1h-1zM1699 580h1v1h-1zM1734 580h1v1h-1zM20 592h1v1h-1zM90 592h1v1h-1zM125 592h1v1h-1zM160 592h1v1h-1zM195 592h1v1h-1zM265 592h1v1h-1zM300 592h1v1h-1zM335 592h1v1h-1zM370 592h1v1h-1zM440 592h1v1h-1zM475 592h1v1h-1zM510 592h1v1h-1zM545 592h1v1h-1zM615 592h1v1h-1zM650 592h1v1h-1zM685 592h1v1h-1zM720 592h1v1h-1zM790 592h1v1h-1zM825 592h1v1h-1zM860 592h1v1h-1zM894 592h1v1h-1zM964 592h1v1h-1zM999 592h1v1h-1zM1034 592h1v1h-1zM1069 592h1v1h-1zM1139 592h1v1h-1zM1174 592h1v1h-1zM1209 592h1v1h-1zM1244 592h1v1h-1zM1314 592h1v1h-1zM1349 592h1v1h-1zM1384 592h1v1h-1zM1419 592h1v1h-1zM1489 592h1v1h-1zM1524 592h1v1h-1zM1559 592h1v1h-1zM1594 592h1v1h-1zM1664 592h1v1h-1zM1699 592h1v1h-1zM1734 592h1v1h-1zM20 603h1v1h-1zM90 603h1v1h-1zM125 603h1v1h-1zM160 603h1v1h-1zM195 603h1v1h-1zM265 603h1v1h-1zM300 603h1v1h-1zM335 603h1v1h-1zM370 603h1v1h-1zM440 603h1v1h-1zM475 603h1v1h-1zM510 603h1v1h-1zM545 603h1v1h-1zM615 603h1v1h-1zM650 603h1v1h-1zM685 603h1v1h-1zM720 603h1v1h-1zM790 603h1v1h-1zM825 603h1v1h-1zM860 603h1v1h-1zM894 603h1v1h-1zM964 603h1v1h-1zM999 603h1v1h-1zM1034 603h1v1h-1zM1069 603h1v1h-1zM1139 603h1v1h-1zM1174 603h1v1h-1zM1209 603h1v1h-1zM1244 603h1v1h-1zM1314 603h1v1h-1zM1349 603h1v1h-1zM1384 603h1v1h-1zM1419 603h1v1h-1zM1489 603h1v1h-1zM1524 603h1v1h-1zM1559 603h1v1h-1zM1594 603h1v1h-1zM1664 603h1v1h-1zM1699 603h1v1h-1zM1734 603h1v1h-1zM20 615h1v1h-1zM90 615h1v1h-1zM125 615h1v1h-1zM160 615h1v1h-1zM195 615h1v1h-1zM265 615h1v1h-1zM300 615h1v1h-1zM335 615h1v1h-1zM370 615h1v1h-1zM440 615h1v1h-1zM475 615h1v1h-1zM510 615h1v1h-1zM545 615h1v1h-1zM615 615h1v1h-1zM650 615h1v1h-1zM685 615h1v1h-1zM720 615h1v1h-1zM790 615h1v1h-1zM825 615h1v1h-1zM860 615h1v1h-1zM894 615h1v1h-1zM964 615h1v1h-1zM999 615h1v1h-1zM1034 615h1v1h-1zM1069 615h1v1h-1zM1139 615h1v1h-1zM1174 615h1v1h-1zM1209 615h1v1h-1zM1244 615h1v1h-1zM1314 615h1v1h-1zM1349 615h1v1h-1zM1384 615h1v1h-1zM1419 615h1v1h-1zM1489 615h1v1h-1zM1524 615h1v1h-1zM1559 615h1v1h-1zM1594 615h1v1h-1zM1664 615h1v1h-1zM1699 615h1v1h-1zM1734 615h1v1h-1zM20 626h1v1h-1zM90 626h1v1h-1zM125 626h1v1h-1zM160 626h1v1h-1zM195 626h1v1h-1zM265 626h1v1h-1zM300 626h1v1h-1zM335 626h1v1h-1zM370 626h1v1h-1zM440 626h1v1h-1zM475 626h1v1h-1zM510 626h1v1h-1zM545 626h1v1h-1zM615 626h1v1h-1zM650 626h1v1h-1zM685 626h1v1h-1zM720 626h1v1h-1zM790 626h1v1h-1zM825 626h1v1h-1zM860 626h1v1h-1zM894 626h1v1h-1zM964 626h1v1h-1zM999 626h1v1h-1zM1034 626h1v1h-1zM1069 626h1v1h-1zM1139 626h1v1h-1zM1174 626h1v1h-1zM1209 626h1v1h-1zM1244 626h1v1h-1zM1314 626h1v1h-1zM1349 626h1v1h-1zM1384 626h1v1h-1zM1419 626h1v1h-1zM1489 626h1v1h-1zM1524 626h1v1h-1zM1559 626h1v1h-1zM1594 626h1v1h-1zM1664 626h1v1h-1zM1699 626h1v1h-1zM1734 626h1v1h-1zM230 522h1v1h-1zM230 524h1v1h-1zM230 527h1v1h-1zM230 529h1v1h-1zM230 531h1v1h-1zM230 534h1v1h-1zM230 536h1v1h-1zM230 538h1v1h-1zM230 541h1v1h-1zM230 543h1v1h-1zM230 545h1v1h-1zM230 548h1v1h-1zM230 550h1v1h-1zM230 552h1v1h-1zM230 554h1v1h-1zM230 557h1v1h-1zM230 559h1v1h-1zM230 561h1v1h-1zM230 564h1v1h-1zM230 566h1v1h-1zM230 568h1v1h-1zM230 571h1v1h-1zM230 573h1v1h-1zM230 575h1v1h-1zM230 578h1v1h-1zM230 580h1v1h-1zM230 582h1v1h-1zM230 585h1v1h-1zM230 587h1v1h-1zM230 589h1v1h-1zM230 592h1v1h-1zM230 594h1v1h-1zM230 596h1v1h-1zM230 599h1v1h-1zM230 601h1v1h-1zM230 603h1v1h-1zM230 606h1v1h-1zM230 608h1v1h-1zM230 610h1v1h-1zM230 612h1v1h-1zM230 615h1v1h-1zM230 617h1v1h-1zM230 619h1v1h-1zM230 622h1v1h-1zM230 624h1v1h-1zM230 626h1v1h-1zM230 629h1v1h-1zM230 631h1v1h-1zM230 633h1v1h-1zM230 636h1v1h-1zM405 522h1v1h-1zM405 524h1v1h-1zM405 527h1v1h-1zM405 529h1v1h-1zM405 531h1v1h-1zM405 534h1v1h-1zM405 536h1v1h-1zM405 538h1v1h-1zM405 541h1v1h-1zM405 543h1v1h-1zM405 545h1v1h-1zM405 548h1v1h-1zM405 550h1v1h-1zM405 552h1v1h-1zM405 554h1v1h-1zM405 557h1v1h-1zM405 559h1v1h-1zM405 561h1v1h-1zM405 564h1v1h-1zM405 566h1v1h-1zM405 568h1v1h-1zM405 571h1v1h-1zM405 573h1v1h-1zM405 575h1v1h-1zM405 578h1v1h-1zM405 580h1v1h-1zM405 582h1v1h-1zM405 585h1v1h-1zM405 587h1v1h-1zM405 589h1v1h-1zM405 592h1v1h-1zM405 594h1v1h-1zM405 596h1v1h-1zM405 599h1v1h-1zM405 601h1v1h-1zM405 603h1v1h-1zM405 606h1v1h-1zM405 608h1v1h-1zM405 610h1v1h-1zM405 612h1v1h-1zM405 615h1v1h-1zM405 617h1v1h-1zM405 619h1v1h-1zM405 622h1v1h-1zM405 624h1v1h-1zM405 626h1v1h-1zM405 629h1v1h-1zM405 631h1v1h-1zM405 633h1v1h-1zM405 636h1v1h-1zM580 522h1v1h-1zM580 524h1v1h-1zM580 527h1v1h-1zM580 529h1v1h-1zM580 531h1v1h-1zM580 534h1v1h-1zM580 536h1v1h-1zM580 538h1v1h-1zM580 541h1v1h-1zM580 543h1v1h-1zM580 545h1v1h-1zM580 548h1v1h-1zM580 550h1v1h-1zM580 552h1v1h-1zM580 554h1v1h-1zM580 557h1v1h-1zM580 559h1v1h-1zM580 561h1v1h-1zM580 564h1v1h-1zM580 566h1v1h-1zM580 568h1v1h-1zM580 571h1v1h-1zM580 573h1v1h-1zM580 575h1v1h-1zM580 578h1v1h-1zM580 580h1v1h-1zM580 582h1v1h-1zM580 585h1v1h-1zM580 587h1v1h-1zM580 589h1v1h-1zM580 592h1v1h-1zM580 594h1v1h-1zM580 596h1v1h-1zM580 599h1v1h-1zM580 601h1v1h-1zM580 603h1v1h-1zM580 606h1v1h-1zM580 608h1v1h-1zM580 610h1v1h-1zM580 612h1v1h-1zM580 615h1v1h-1zM580 617h1v1h-1zM580 619h1v1h-1zM580 622h1v1h-1zM580 624h1v1h-1zM580 626h1v1h-1zM580 629h1v1h-1zM580 631h1v1h-1zM580 633h1v1h-1zM580 636h1v1h-1zM755 522h1v1h-1zM755 524h1v1h-1zM755 527h1v1h-1zM755 529h1v1h-1zM755 531h1v1h-1zM755 534h1v1h-1zM755 536h1v1h-1zM755 538h1v1h-1zM755 541h1v1h-1zM755 543h1v1h-1zM755 545h1v1h-1zM755 548h1v1h-1zM755 550h1v1h-1zM755 552h1v1h-1zM755 554h1v1h-1zM755 557h1v1h-1zM755 559h1v1h-1zM755 561h1v1h-1zM755 564h1v1h-1zM755 566h1v1h-1zM755 568h1v1h-1zM755 571h1v1h-1zM755 573h1v1h-1zM755 575h1v1h-1zM755 578h1v1h-1zM755 580h1v1h-1zM755 582h1v1h-1zM755 585h1v1h-1zM755 587h1v1h-1zM755 589h1v1h-1zM755 592h1v1h-1zM755 594h1v1h-1zM755 596h1v1h-1zM755 599h1v1h-1zM755 601h1v1h-1zM755 603h1v1h-1zM755 606h1v1h-1zM755 608h1v1h-1zM755 610h1v1h-1zM755 612h1v1h-1zM755 615h1v1h-1zM755 617h1v1h-1zM755 619h1v1h-1zM755 622h1v1h-1zM755 624h1v1h-1zM755 626h1v1h-1zM755 629h1v1h-1zM755 631h1v1h-1zM755 633h1v1h-1zM755 636h1v1h-1zM929 522h1v1h-1zM929 524h1v1h-1zM929 527h1v1h-1zM929 529h1v1h-1zM929 531h1v1h-1zM929 534h1v1h-1zM929 536h1v1h-1zM929 538h1v1h-1zM929 541h1v1h-1zM929 543h1v1h-1zM929 545h1v1h-1zM929 548h1v1h-1zM929 550h1v1h-1zM929 552h1v1h-1zM929 554h1v1h-1zM929 557h1v1h-1zM929 559h1v1h-1zM929 561h1v1h-1zM929 564h1v1h-1zM929 566h1v1h-1zM929 568h1v1h-1zM929 571h1v1h-1zM929 573h1v1h-1zM929 575h1v1h-1zM929 578h1v1h-1zM929 580h1v1h-1zM929 582h1v1h-1zM929 585h1v1h-1zM929 587h1v1h-1zM929 589h1v1h-1zM929 592h1v1h-1zM929 594h1v1h-1zM929 596h1v1h-1zM929 599h1v1h-1zM929 601h1v1h-1zM929 603h1v1h-1zM929 606h1v1h-1zM929 608h1v1h-1zM929 610h1v1h-1zM929 612h1v1h-1zM929 615h1v1h-1zM929 617h1v1h-1zM929 619h1v1h-1zM929 622h1v1h-1zM929 624h1v1h-1zM929 626h1v1h-1zM929 629h1v1h-1zM929 631h1v1h-1zM929 633h1v1h-1zM929 636h1v1h-1zM1104 522h1v1h-1zM1104 524h1v1h-1zM1104 527h1v1h-1zM1104 529h1v1h-1zM1104 531h1v1h-1zM1104 534h1v1h-1zM1104 536h1v1h-1zM1104 538h1v1h-1zM1104 541h1v1h-1zM1104 543h1v1h-1zM1104 545h1v1h-1zM1104 548h1v1h-1zM1104 550h1v1h-1zM1104 552h1v1h-1zM1104 554h1v1h-1zM1104 557h1v1h-1zM1104 559h1v1h-1zM1104 561h1v1h-1zM1104 564h1v1h-1zM1104 566h1v1h-1zM1104 568h1v1h-1zM1104 571h1v1h-1zM1104 573h1v1h-1zM1104 575h1v1h-1zM1104 578h1v1h-1zM1104 580h1v1h-1zM1104 582h1v1h-1zM1104 585h1v1h-1zM1104 587h1v1h-1zM1104 589h1v1h-1zM1104 592h1v1h-1zM1104 594h1v1h-1zM1104 596h1v1h-1zM1104 599h1v1h-1zM1104 601h1v1h-1zM1104 603h1v1h-1zM1104 606h1v1h-1zM1104 608h1v1h-1zM1104 610h1v1h-1zM1104 612h1v1h-1zM1104 615h1v1h-1zM1104 617h1v1h-1zM1104 619h1v1h-1zM1104 622h1v1h-1zM1104 624h1v1h-1zM1104 626h1v1h-1zM1104 629h1v1h-1zM1104 631h1v1h-1zM1104 633h1v1h-1zM1104 636h1v1h-1zM1279 522h1v1h-1zM1279 524h1v1h-1zM1279 527h1v1h-1zM1279 529h1v1h-1zM1279 531h1v1h-1zM1279 534h1v1h-1zM1279 536h1v1h-1zM1279 538h1v1h-1zM1279 541h1v1h-1zM1279 543h1v1h-1zM1279 545h1v1h-1zM1279 548h1v1h-1zM1279 550h1v1h-1zM1279 552h1v1h-1zM1279 554h1v1h-1zM1279 557h1v1h-1zM1279 559h1v1h-1zM1279 561h1v1h-1zM1279 564h1v1h-1zM1279 566h1v1h-1zM1279 568h1v1h-1zM1279 571h1v1h-1zM1279 573h1v1h-1zM1279 575h1v1h-1zM1279 578h1v1h-1zM1279 580h1v1h-1zM1279 582h1v1h-1zM1279 585h1v1h-1zM1279 587h1v1h-1zM1279 589h1v1h-1zM1279 592h1v1h-1zM1279 594h1v1h-1zM1279 596h1v1h-1zM1279 599h1v1h-1zM1279 601h1v1h-1zM1279 603h1v1h-1zM1279 606h1v1h-1zM1279 608h1v1h-1zM1279 610h1v1h-1zM1279 612h1v1h-1zM1279 615h1v1h-1zM1279 617h1v1h-1zM1279 619h1v1h-1zM1279 622h1v1h-1zM1279 624h1v1h-1zM1279 626h1v1h-1zM1279 629h1v1h-1zM1279 631h1v1h-1zM1279 633h1v1h-1zM1279 636h1v1h-1zM1454 522h1v1h-1zM1454 524h1v1h-1zM1454 527h1v1h-1zM1454 529h1v1h-1zM1454 531h1v1h-1zM1454 534h1v1h-1zM1454 536h1v1h-1zM1454 538h1v1h-1zM1454 541h1v1h-1zM1454 543h1v1h-1zM1454 545h1v1h-1zM1454 548h1v1h-1zM1454 550h1v1h-1zM1454 552h1v1h-1zM1454 554h1v1h-1zM1454 557h1v1h-1zM1454 559h1v1h-1zM1454 561h1v1h-1zM1454 564h1v1h-1zM1454 566h1v1h-1zM1454 568h1v1h-1zM1454 571h1v1h-1zM1454 573h1v1h-1zM1454 575h1v1h-1zM1454 578h1v1h-1zM1454 580h1v1h-1zM1454 582h1v1h-1zM1454 585h1v1h-1zM1454 587h1v1h-1zM1454 589h1v1h-1zM1454 592h1v1h-1zM1454 594h1v1h-1zM1454 596h1v1h-1zM1454 599h1v1h-1zM1454 601h1v1h-1zM1454 603h1v1h-1zM1454 606h1v1h-1zM1454 608h1v1h-1zM1454 610h1v1h-1zM1454 612h1v1h-1zM1454 615h1v1h-1zM1454 617h1v1h-1zM1454 619h1v1h-1zM1454 622h1v1h-1zM1454 624h1v1h-1zM1454 626h1v1h-1zM1454 629h1v1h-1zM1454 631h1v1h-1zM1454 633h1v1h-1zM1454 636h1v1h-1zM1629 522h1v1h-1zM1629 524h1v1h-1zM1629 527h1v1h-1zM1629 529h1v1h-1zM1629 531h1v1h-1zM1629 534h1v1h-1zM1629 536h1v1h-1zM1629 538h1v1h-1zM1629 541h1v1h-1zM1629 543h1v1h-1zM1629 545h1v1h-1zM1629 548h1v1h-1zM1629 550h1v1h-1zM1629 552h1v1h-1zM1629 554h1v1h-1zM1629 557h1v1h-1zM1629 559h1v1h-1zM1629 561h1v1h-1zM1629 564h1v1h-1zM1629 566h1v1h-1zM1629 568h1v1h-1zM1629 571h1v1h-1zM1629 573h1v1h-1zM1629 575h1v1h-1zM1629 578h1v1h-1zM1629 580h1v1h-1zM1629 582h1v1h-1zM1629 585h1v1h-1zM1629 587h1v1h-1zM1629 589h1v1h-1zM1629 592h1v1h-1zM1629 594h1v1h-1zM1629 596h1v1h-1zM1629 599h1v1h-1zM1629 601h1v1h-1zM1629 603h1v1h-1zM1629 606h1v1h-1zM1629 608h1v1h-1zM1629 610h1v1h-1zM1629 612h1v1h-1zM1629 615h1v1h-1zM1629 617h1v1h-1zM1629 619h1v1h-1zM1629 622h1v1h-1zM1629 624h1v1h-1zM1629 626h1v1h-1zM1629 629h1v1h-1zM1629 631h1v1h-1zM1629 633h1v1h-1zM1629 636h1v1h-1zM20 639h1v1h-1zM90 639h1v1h-1zM125 639h1v1h-1zM160 639h1v1h-1zM195 639h1v1h-1zM265 639h1v1h-1zM300 639h1v1h-1zM335 639h1v1h-1zM370 639h1v1h-1zM440 639h1v1h-1zM475 639h1v1h-1zM510 639h1v1h-1zM545 639h1v1h-1zM615 639h1v1h-1zM650 639h1v1h-1zM685 639h1v1h-1zM720 639h1v1h-1zM790 639h1v1h-1zM825 639h1v1h-1zM860 639h1v1h-1zM894 639h1v1h-1zM964 639h1v1h-1zM999 639h1v1h-1zM1034 639h1v1h-1zM1069 639h1v1h-1zM1139 639h1v1h-1zM1174 639h1v1h-1zM1209 639h1v1h-1zM1244 639h1v1h-1zM1314 639h1v1h-1zM1349 639h1v1h-1zM1384 639h1v1h-1zM1419 639h1v1h-1zM1489 639h1v1h-1zM1524 639h1v1h-1zM1559 639h1v1h-1zM1594 639h1v1h-1zM1664 639h1v1h-1zM1699 639h1v1h-1zM1734 639h1v1h-1zM20 651h1v1h-1zM90 651h1v1h-1zM125 651h1v1h-1zM160 651h1v1h-1zM195 651h1v1h-1zM265 651h1v1h-1zM300 651h1v1h-1zM335 651h1v1h-1zM370 651h1v1h-1zM440 651h1v1h-1zM475 651h1v1h-1zM510 651h1v1h-1zM545 651h1v1h-1zM615 651h1v1h-1zM650 651h1v1h-1zM685 651h1v1h-1zM720 651h1v1h-1zM790 651h1v1h-1zM825 651h1v1h-1zM860 651h1v1h-1zM894 651h1v1h-1zM964 651h1v1h-1zM999 651h1v1h-1zM1034 651h1v1h-1zM1069 651h1v1h-1zM1139 651h1v1h-1zM1174 651h1v1h-1zM1209 651h1v1h-1zM1244 651h1v1h-1zM1314 651h1v1h-1zM1349 651h1v1h-1zM1384 651h1v1h-1zM1419 651h1v1h-1zM1489 651h1v1h-1zM1524 651h1v1h-1zM1559 651h1v1h-1zM1594 651h1v1h-1zM1664 651h1v1h-1zM1699 651h1v1h-1zM1734 651h1v1h-1zM20 662h1v1h-1zM90 662h1v1h-1zM125 662h1v1h-1zM160 662h1v1h-1zM195 662h1v1h-1zM265 662h1v1h-1zM300 662h1v1h-1zM335 662h1v1h-1zM370 662h1v1h-1zM440 662h1v1h-1zM475 662h1v1h-1zM510 662h1v1h-1zM545 662h1v1h-1zM615 662h1v1h-1zM650 662h1v1h-1zM685 662h1v1h-1zM720 662h1v1h-1zM790 662h1v1h-1zM825 662h1v1h-1zM860 662h1v1h-1zM894 662h1v1h-1zM964 662h1v1h-1zM999 662h1v1h-1zM1034 662h1v1h-1zM1069 662h1v1h-1zM1139 662h1v1h-1zM1174 662h1v1h-1zM1209 662h1v1h-1zM1244 662h1v1h-1zM1314 662h1v1h-1zM1349 662h1v1h-1zM1384 662h1v1h-1zM1419 662h1v1h-1zM1489 662h1v1h-1zM1524 662h1v1h-1zM1559 662h1v1h-1zM1594 662h1v1h-1zM1664 662h1v1h-1zM1699 662h1v1h-1zM1734 662h1v1h-1zM20 674h1v1h-1zM90 674h1v1h-1zM125 674h1v1h-1zM160 674h1v1h-1zM195 674h1v1h-1zM265 674h1v1h-1zM300 674h1v1h-1zM335 674h1v1h-1zM370 674h1v1h-1zM440 674h1v1h-1zM475 674h1v1h-1zM510 674h1v1h-1zM545 674h1v1h-1zM615 674h1v1h-1zM650 674h1v1h-1zM685 674h1v1h-1zM720 674h1v1h-1zM790 674h1v1h-1zM825 674h1v1h-1zM860 674h1v1h-1zM894 674h1v1h-1zM964 674h1v1h-1zM999 674h1v1h-1zM1034 674h1v1h-1zM1069 674h1v1h-1zM1139 674h1v1h-1zM1174 674h1v1h-1zM1209 674h1v1h-1zM1244 674h1v1h-1zM1314 674h1v1h-1zM1349 674h1v1h-1zM1384 674h1v1h-1zM1419 674h1v1h-1zM1489 674h1v1h-1zM1524 674h1v1h-1zM1559 674h1v1h-1zM1594 674h1v1h-1zM1664 674h1v1h-1zM1699 674h1v1h-1zM1734 674h1v1h-1zM20 685h1v1h-1zM90 685h1v1h-1zM125 685h1v1h-1zM160 685h1v1h-1zM195 685h1v1h-1zM265 685h1v1h-1zM300 685h1v1h-1zM335 685h1v1h-1zM370 685h1v1h-1zM440 685h1v1h-1zM475 685h1v1h-1zM510 685h1v1h-1zM545 685h1v1h-1zM615 685h1v1h-1zM650 685h1v1h-1zM685 685h1v1h-1zM720 685h1v1h-1zM790 685h1v1h-1zM825 685h1v1h-1zM860 685h1v1h-1zM894 685h1v1h-1zM964 685h1v1h-1zM999 685h1v1h-1zM1034 685h1v1h-1zM1069 685h1v1h-1zM1139 685h1v1h-1zM1174 685h1v1h-1zM1209 685h1v1h-1zM1244 685h1v1h-1zM1314 685h1v1h-1zM1349 685h1v1h-1zM1384 685h1v1h-1zM1419 685h1v1h-1zM1489 685h1v1h-1zM1524 685h1v1h-1zM1559 685h1v1h-1zM1594 685h1v1h-1zM1664 685h1v1h-1zM1699 685h1v1h-1zM1734 685h1v1h-1zM20 709h1v1h-1zM90 709h1v1h-1zM125 709h1v1h-1zM160 709h1v1h-1zM195 709h1v1h-1zM265 709h1v1h-1zM300 709h1v1h-1zM335 709h1v1h-1zM370 709h1v1h-1zM440 709h1v1h-1zM475 709h1v1h-1zM510 709h1v1h-1zM545 709h1v1h-1zM615 709h1v1h-1zM650 709h1v1h-1zM685 709h1v1h-1zM720 709h1v1h-1zM790 709h1v1h-1zM825 709h1v1h-1zM860 709h1v1h-1zM894 709h1v1h-1zM964 709h1v1h-1zM999 709h1v1h-1zM1034 709h1v1h-1zM1069 709h1v1h-1zM1139 709h1v1h-1zM1174 709h1v1h-1zM1209 709h1v1h-1zM1244 709h1v1h-1zM1314 709h1v1h-1zM1349 709h1v1h-1zM1384 709h1v1h-1zM1419 709h1v1h-1zM1489 709h1v1h-1zM1524 709h1v1h-1zM1559 709h1v1h-1zM1594 709h1v1h-1zM1664 709h1v1h-1zM1699 709h1v1h-1zM1734 709h1v1h-1zM20 720h1v1h-1zM90 720h1v1h-1zM125 720h1v1h-1zM160 720h1v1h-1zM195 720h1v1h-1zM265 720h1v1h-1zM300 720h1v1h-1zM335 720h1v1h-1zM370 720h1v1h-1zM440 720h1v1h-1zM475 720h1v1h-1zM510 720h1v1h-1zM545 720h1v1h-1zM615 720h1v1h-1zM650 720h1v1h-1zM685 720h1v1h-1zM720 720h1v1h-1zM790 720h1v1h-1zM825 720h1v1h-1zM860 720h1v1h-1zM894 720h1v1h-1zM964 720h1v1h-1zM999 720h1v1h-1zM1034 720h1v1h-1zM1069 720h1v1h-1zM1139 720h1v1h-1zM1174 720h1v1h-1zM1209 720h1v1h-1zM1244 720h1v1h-1zM1314 720h1v1h-1zM1349 720h1v1h-1zM1384 720h1v1h-1zM1419 720h1v1h-1zM1489 720h1v1h-1zM1524 720h1v1h-1zM1559 720h1v1h-1zM1594 720h1v1h-1zM1664 720h1v1h-1zM1699 720h1v1h-1zM1734 720h1v1h-1zM20 732h1v1h-1zM90 732h1v1h-1zM125 732h1v1h-1zM160 732h1v1h-1zM195 732h1v1h-1zM265 732h1v1h-1zM300 732h1v1h-1zM335 732h1v1h-1zM370 732h1v1h-1zM440 732h1v1h-1zM475 732h1v1h-1zM510 732h1v1h-1zM545 732h1v1h-1zM615 732h1v1h-1zM650 732h1v1h-1zM685 732h1v1h-1zM720 732h1v1h-1zM790 732h1v1h-1zM825 732h1v1h-1zM860 732h1v1h-1zM894 732h1v1h-1zM964 732h1v1h-1zM999 732h1v1h-1zM1034 732h1v1h-1zM1069 732h1v1h-1zM1139 732h1v1h-1zM1174 732h1v1h-1zM1209 732h1v1h-1zM1244 732h1v1h-1zM1314 732h1v1h-1zM1349 732h1v1h-1zM1384 732h1v1h-1zM1419 732h1v1h-1zM1489 732h1v1h-1zM1524 732h1v1h-1zM1559 732h1v1h-1zM1594 732h1v1h-1zM1664 732h1v1h-1zM1699 732h1v1h-1zM1734 732h1v1h-1zM20 743h1v1h-1zM90 743h1v1h-1zM125 743h1v1h-1zM160 743h1v1h-1zM195 743h1v1h-1zM265 743h1v1h-1zM300 743h1v1h-1zM335 743h1v1h-1zM370 743h1v1h-1zM440 743h1v1h-1zM475 743h1v1h-1zM510 743h1v1h-1zM545 743h1v1h-1zM615 743h1v1h-1zM650 743h1v1h-1zM685 743h1v1h-1zM720 743h1v1h-1zM790 743h1v1h-1zM825 743h1v1h-1zM860 743h1v1h-1zM894 743h1v1h-1zM964 743h1v1h-1zM999 743h1v1h-1zM1034 743h1v1h-1zM1069 743h1v1h-1zM1139 743h1v1h-1zM1174 743h1v1h-1zM1209 743h1v1h-1zM1244 743h1v1h-1zM1314 743h1v1h-1zM1349 743h1v1h-1zM1384 743h1v1h-1zM1419 743h1v1h-1zM1489 743h1v1h-1zM1524 743h1v1h-1zM1559 743h1v1h-1zM1594 743h1v1h-1zM1664 743h1v1h-1zM1699 743h1v1h-1zM1734 743h1v1h-1zM230 639h1v1h-1zM230 641h1v1h-1zM230 644h1v1h-1zM230 646h1v1h-1zM230 648h1v1h-1zM230 651h1v1h-1zM230 653h1v1h-1zM230 655h1v1h-1zM230 658h1v1h-1zM230 660h1v1h-1zM230 662h1v1h-1zM230 665h1v1h-1zM230 667h1v1h-1zM230 669h1v1h-1zM230 671h1v1h-1zM230 674h1v1h-1zM230 676h1v1h-1zM230 678h1v1h-1zM230 681h1v1h-1zM230 683h1v1h-1zM230 685h1v1h-1zM230 688h1v1h-1zM230 690h1v1h-1zM230 692h1v1h-1zM230 695h1v1h-1zM230 697h1v1h-1zM230 699h1v1h-1zM230 702h1v1h-1zM230 704h1v1h-1zM230 706h1v1h-1zM230 709h1v1h-1zM230 711h1v1h-1zM230 713h1v1h-1zM230 716h1v1h-1zM230 718h1v1h-1zM230 720h1v1h-1zM230 723h1v1h-1zM230 725h1v1h-1zM230 727h1v1h-1zM230 729h1v1h-1zM230 732h1v1h-1zM230 734h1v1h-1zM230 736h1v1h-1zM230 739h1v1h-1zM230 741h1v1h-1zM230 743h1v1h-1zM230 746h1v1h-1zM230 748h1v1h-1zM230 750h1v1h-1zM230 753h1v1h-1zM405 639h1v1h-1zM405 641h1v1h-1zM405 644h1v1h-1zM405 646h1v1h-1zM405 648h1v1h-1zM405 651h1v1h-1zM405 653h1v1h-1zM405 655h1v1h-1zM405 658h1v1h-1zM405 660h1v1h-1zM405 662h1v1h-1zM405 665h1v1h-1zM405 667h1v1h-1zM405 669h1v1h-1zM405 671h1v1h-1zM405 674h1v1h-1zM405 676h1v1h-1zM405 678h1v1h-1zM405 681h1v1h-1zM405 683h1v1h-1zM405 685h1v1h-1zM405 688h1v1h-1zM405 690h1v1h-1zM405 692h1v1h-1zM405 695h1v1h-1zM405 697h1v1h-1zM405 699h1v1h-1zM405 702h1v1h-1zM405 704h1v1h-1zM405 706h1v1h-1zM405 709h1v1h-1zM405 711h1v1h-1zM405 713h1v1h-1zM405 716h1v1h-1zM405 718h1v1h-1zM405 720h1v1h-1zM405 723h1v1h-1zM405 725h1v1h-1zM405 727h1v1h-1zM405 729h1v1h-1zM405 732h1v1h-1zM405 734h1v1h-1zM405 736h1v1h-1zM405 739h1v1h-1zM405 741h1v1h-1zM405 743h1v1h-1zM405 746h1v1h-1zM405 748h1v1h-1zM405 750h1v1h-1zM405 753h1v1h-1zM580 639h1v1h-1zM580 641h1v1h-1zM580 644h1v1h-1zM580 646h1v1h-1zM580 648h1v1h-1zM580 651h1v1h-1zM580 653h1v1h-1zM580 655h1v1h-1zM580 658h1v1h-1zM580 660h1v1h-1zM580 662h1v1h-1zM580 665h1v1h-1zM580 667h1v1h-1zM580 669h1v1h-1zM580 671h1v1h-1zM580 674h1v1h-1zM580 676h1v1h-1zM580 678h1v1h-1zM580 681h1v1h-1zM580 683h1v1h-1zM580 685h1v1h-1zM580 688h1v1h-1zM580 690h1v1h-1zM580 692h1v1h-1zM580 695h1v1h-1zM580 697h1v1h-1zM580 699h1v1h-1zM580 702h1v1h-1zM580 704h1v1h-1zM580 706h1v1h-1zM580 709h1v1h-1zM580 711h1v1h-1zM580 713h1v1h-1zM580 716h1v1h-1zM580 718h1v1h-1zM580 720h1v1h-1zM580 723h1v1h-1zM580 725h1v1h-1zM580 727h1v1h-1zM580 729h1v1h-1zM580 732h1v1h-1zM580 734h1v1h-1zM580 736h1v1h-1zM580 739h1v1h-1zM580 741h1v1h-1zM580 743h1v1h-1zM580 746h1v1h-1zM580 748h1v1h-1zM580 750h1v1h-1zM580 753h1v1h-1zM755 639h1v1h-1zM755 641h1v1h-1zM755 644h1v1h-1zM755 646h1v1h-1zM755 648h1v1h-1zM755 651h1v1h-1zM755 653h1v1h-1zM755 655h1v1h-1zM755 658h1v1h-1zM755 660h1v1h-1zM755 662h1v1h-1zM755 665h1v1h-1zM755 667h1v1h-1zM755 669h1v1h-1zM755 671h1v1h-1zM755 674h1v1h-1zM755 676h1v1h-1zM755 678h1v1h-1zM755 681h1v1h-1zM755 683h1v1h-1zM755 685h1v1h-1zM755 688h1v1h-1zM755 690h1v1h-1zM755 692h1v1h-1zM755 695h1v1h-1zM755 697h1v1h-1zM755 699h1v1h-1zM755 702h1v1h-1zM755 704h1v1h-1zM755 706h1v1h-1zM755 709h1v1h-1zM755 711h1v1h-1zM755 713h1v1h-1zM755 716h1v1h-1zM755 718h1v1h-1zM755 720h1v1h-1zM755 723h1v1h-1zM755 725h1v1h-1zM755 727h1v1h-1zM755 729h1v1h-1zM755 732h1v1h-1zM755 734h1v1h-1zM755 736h1v1h-1zM755 739h1v1h-1zM755 741h1v1h-1zM755 743h1v1h-1zM755 746h1v1h-1zM755 748h1v1h-1zM755 750h1v1h-1zM755 753h1v1h-1zM929 639h1v1h-1zM929 641h1v1h-1zM929 644h1v1h-1zM929 646h1v1h-1zM929 648h1v1h-1zM929 651h1v1h-1zM929 653h1v1h-1zM929 655h1v1h-1zM929 658h1v1h-1zM929 660h1v1h-1zM929 662h1v1h-1zM929 665h1v1h-1zM929 667h1v1h-1zM929 669h1v1h-1zM929 671h1v1h-1zM929 674h1v1h-1zM929 676h1v1h-1zM929 678h1v1h-1zM929 681h1v1h-1zM929 683h1v1h-1zM929 685h1v1h-1zM929 688h1v1h-1zM929 690h1v1h-1zM929 692h1v1h-1zM929 695h1v1h-1zM929 697h1v1h-1zM929 699h1v1h-1zM929 702h1v1h-1zM929 704h1v1h-1zM929 706h1v1h-1zM929 709h1v1h-1zM929 711h1v1h-1zM929 713h1v1h-1zM929 716h1v1h-1zM929 718h1v1h-1zM929 720h1v1h-1zM929 723h1v1h-1zM929 725h1v1h-1zM929 727h1v1h-1zM929 729h1v1h-1zM929 732h1v1h-1zM929 734h1v1h-1zM929 736h1v1h-1zM929 739h1v1h-1zM929 741h1v1h-1zM929 743h1v1h-1zM929 746h1v1h-1zM929 748h1v1h-1zM929 750h1v1h-1zM929 753h1v1h-1zM1104 639h1v1h-1zM1104 641h1v1h-1zM1104 644h1v1h-1zM1104 646h1v1h-1zM1104 648h1v1h-1zM1104 651h1v1h-1zM1104 653h1v1h-1zM1104 655h1v1h-1zM1104 658h1v1h-1zM1104 660h1v1h-1zM1104 662h1v1h-1zM1104 665h1v1h-1zM1104 667h1v1h-1zM1104 669h1v1h-1zM1104 671h1v1h-1zM1104 674h1v1h-1zM1104 676h1v1h-1zM1104 678h1v1h-1zM1104 681h1v1h-1zM1104 683h1v1h-1zM1104 685h1v1h-1zM1104 688h1v1h-1zM1104 690h1v1h-1zM1104 692h1v1h-1zM1104 695h1v1h-1zM1104 697h1v1h-1zM1104 699h1v1h-1zM1104 702h1v1h-1zM1104 704h1v1h-1zM1104 706h1v1h-1zM1104 709h1v1h-1zM1104 711h1v1h-1zM1104 713h1v1h-1zM1104 716h1v1h-1zM1104 718h1v1h-1zM1104 720h1v1h-1zM1104 723h1v1h-1zM1104 725h1v1h-1zM1104 727h1v1h-1zM1104 729h1v1h-1zM1104 732h1v1h-1zM1104 734h1v1h-1zM1104 736h1v1h-1zM1104 739h1v1h-1zM1104 741h1v1h-1zM1104 743h1v1h-1zM1104 746h1v1h-1zM1104 748h1v1h-1zM1104 750h1v1h-1zM1104 753h1v1h-1zM1279 639h1v1h-1zM1279 641h1v1h-1zM1279 644h1v1h-1zM1279 646h1v1h-1zM1279 648h1v1h-1zM1279 651h1v1h-1zM1279 653h1v1h-1zM1279 655h1v1h-1zM1279 658h1v1h-1zM1279 660h1v1h-1zM1279 662h1v1h-1zM1279 665h1v1h-1zM1279 667h1v1h-1zM1279 669h1v1h-1zM1279 671h1v1h-1zM1279 674h1v1h-1zM1279 676h1v1h-1zM1279 678h1v1h-1zM1279 681h1v1h-1zM1279 683h1v1h-1zM1279 685h1v1h-1zM1279 688h1v1h-1zM1279 690h1v1h-1zM1279 692h1v1h-1zM1279 695h1v1h-1zM1279 697h1v1h-1zM1279 699h1v1h-1zM1279 702h1v1h-1zM1279 704h1v1h-1zM1279 706h1v1h-1zM1279 709h1v1h-1zM1279 711h1v1h-1zM1279 713h1v1h-1zM1279 716h1v1h-1zM1279 718h1v1h-1zM1279 720h1v1h-1zM1279 723h1v1h-1zM1279 725h1v1h-1zM1279 727h1v1h-1zM1279 729h1v1h-1zM1279 732h1v1h-1zM1279 734h1v1h-1zM1279 736h1v1h-1zM1279 739h1v1h-1zM1279 741h1v1h-1zM1279 743h1v1h-1zM1279 746h1v1h-1zM1279 748h1v1h-1zM1279 750h1v1h-1zM1279 753h1v1h-1zM1454 639h1v1h-1zM1454 641h1v1h-1zM1454 644h1v1h-1zM1454 646h1v1h-1zM1454 648h1v1h-1zM1454 651h1v1h-1zM1454 653h1v1h-1zM1454 655h1v1h-1zM1454 658h1v1h-1zM1454 660h1v1h-1zM1454 662h1v1h-1zM1454 665h1v1h-1zM1454 667h1v1h-1zM1454 669h1v1h-1zM1454 671h1v1h-1zM1454 674h1v1h-1zM1454 676h1v1h-1zM1454 678h1v1h-1zM1454 681h1v1h-1zM1454 683h1v1h-1zM1454 685h1v1h-1zM1454 688h1v1h-1zM1454 690h1v1h-1zM1454 692h1v1h-1zM1454 695h1v1h-1zM1454 697h1v1h-1zM1454 699h1v1h-1zM1454 702h1v1h-1zM1454 704h1v1h-1zM1454 706h1v1h-1zM1454 709h1v1h-1zM1454 711h1v1h-1zM1454 713h1v1h-1zM1454 716h1v1h-1zM1454 718h1v1h-1zM1454 720h1v1h-1zM1454 723h1v1h-1zM1454 725h1v1h-1zM1454 727h1v1h-1zM1454 729h1v1h-1zM1454 732h1v1h-1zM1454 734h1v1h-1zM1454 736h1v1h-1zM1454 739h1v1h-1zM1454 741h1v1h-1zM1454 743h1v1h-1zM1454 746h1v1h-1zM1454 748h1v1h-1zM1454 750h1v1h-1zM1454 753h1v1h-1zM1629 639h1v1h-1zM1629 641h1v1h-1zM1629 644h1v1h-1zM1629 646h1v1h-1zM1629 648h1v1h-1zM1629 651h1v1h-1zM1629 653h1v1h-1zM1629 655h1v1h-1zM1629 658h1v1h-1zM1629 660h1v1h-1zM1629 662h1v1h-1zM1629 665h1v1h-1zM1629 667h1v1h-1zM1629 669h1v1h-1zM1629 671h1v1h-1zM1629 674h1v1h-1zM1629 676h1v1h-1zM1629 678h1v1h-1zM1629 681h1v1h-1zM1629 683h1v1h-1zM1629 685h1v1h-1zM1629 688h1v1h-1zM1629 690h1v1h-1zM1629 692h1v1h-1zM1629 695h1v1h-1zM1629 697h1v1h-1zM1629 699h1v1h-1zM1629 702h1v1h-1zM1629 704h1v1h-1zM1629 706h1v1h-1zM1629 709h1v1h-1zM1629 711h1v1h-1zM1629 713h1v1h-1zM1629 716h1v1h-1zM1629 718h1v1h-1zM1629 720h1v1h-1zM1629 723h1v1h-1zM1629 725h1v1h-1zM1629 727h1v1h-1zM1629 729h1v1h-1zM1629 732h1v1h-1zM1629 734h1v1h-1zM1629 736h1v1h-1zM1629 739h1v1h-1zM1629 741h1v1h-1zM1629 743h1v1h-1zM1629 746h1v1h-1zM1629 748h1v1h-1zM1629 750h1v1h-1zM1629 753h1v1h-1zM20 756h1v1h-1zM90 756h1v1h-1zM125 756h1v1h-1zM160 756h1v1h-1zM195 756h1v1h-1zM265 756h1v1h-1zM300 756h1v1h-1zM335 756h1v1h-1zM370 756h1v1h-1zM440 756h1v1h-1zM475 756h1v1h-1zM510 756h1v1h-1zM545 756h1v1h-1zM615 756h1v1h-1zM650 756h1v1h-1zM685 756h1v1h-1zM720 756h1v1h-1zM790 756h1v1h-1zM825 756h1v1h-1zM860 756h1v1h-1zM894 756h1v1h-1zM964 756h1v1h-1zM999 756h1v1h-1zM1034 756h1v1h-1zM1069 756h1v1h-1zM1139 756h1v1h-1zM1174 756h1v1h-1zM1209 756h1v1h-1zM1244 756h1v1h-1zM1314 756h1v1h-1zM1349 756h1v1h-1zM1384 756h1v1h-1zM1419 756h1v1h-1zM1489 756h1v1h-1zM1524 756h1v1h-1zM1559 756h1v1h-1zM1594 756h1v1h-1zM1664 756h1v1h-1zM1699 756h1v1h-1zM1734 756h1v1h-1zM20 768h1v1h-1zM90 768h1v1h-1zM125 768h1v1h-1zM160 768h1v1h-1zM195 768h1v1h-1zM265 768h1v1h-1zM300 768h1v1h-1zM335 768h1v1h-1zM370 768h1v1h-1zM440 768h1v1h-1zM475 768h1v1h-1zM510 768h1v1h-1zM545 768h1v1h-1zM615 768h1v1h-1zM650 768h1v1h-1zM685 768h1v1h-1zM720 768h1v1h-1zM790 768h1v1h-1zM825 768h1v1h-1zM860 768h1v1h-1zM894 768h1v1h-1zM964 768h1v1h-1zM999 768h1v1h-1zM1034 768h1v1h-1zM1069 768h1v1h-1zM1139 768h1v1h-1zM1174 768h1v1h-1zM1209 768h1v1h-1zM1244 768h1v1h-1zM1314 768h1v1h-1zM1349 768h1v1h-1zM1384 768h1v1h-1zM1419 768h1v1h-1zM1489 768h1v1h-1zM1524 768h1v1h-1zM1559 768h1v1h-1zM1594 768h1v1h-1zM1664 768h1v1h-1zM1699 768h1v1h-1zM1734 768h1v1h-1zM20 779h1v1h-1zM90 779h1v1h-1zM125 779h1v1h-1zM160 779h1v1h-1zM195 779h1v1h-1zM265 779h1v1h-1zM300 779h1v1h-1zM335 779h1v1h-1zM370 779h1v1h-1zM440 779h1v1h-1zM475 779h1v1h-1zM510 779h1v1h-1zM545 779h1v1h-1zM615 779h1v1h-1zM650 779h1v1h-1zM685 779h1v1h-1zM720 779h1v1h-1zM790 779h1v1h-1zM825 779h1v1h-1zM860 779h1v1h-1zM894 779h1v1h-1zM964 779h1v1h-1zM999 779h1v1h-1zM1034 779h1v1h-1zM1069 779h1v1h-1zM1139 779h1v1h-1zM1174 779h1v1h-1zM1209 779h1v1h-1zM1244 779h1v1h-1zM1314 779h1v1h-1zM1349 779h1v1h-1zM1384 779h1v1h-1zM1419 779h1v1h-1zM1489 779h1v1h-1zM1524 779h1v1h-1zM1559 779h1v1h-1zM1594 779h1v1h-1zM1664 779h1v1h-1zM1699 779h1v1h-1zM1734 779h1v1h-1zM20 791h1v1h-1zM90 791h1v1h-1zM125 791h1v1h-1zM160 791h1v1h-1zM195 791h1v1h-1zM265 791h1v1h-1zM300 791h1v1h-1zM335 791h1v1h-1zM370 791h1v1h-1zM440 791h1v1h-1zM475 791h1v1h-1zM510 791h1v1h-1zM545 791h1v1h-1zM615 791h1v1h-1zM650 791h1v1h-1zM685 791h1v1h-1zM720 791h1v1h-1zM790 791h1v1h-1zM825 791h1v1h-1zM860 791h1v1h-1zM894 791h1v1h-1zM964 791h1v1h-1zM999 791h1v1h-1zM1034 791h1v1h-1zM1069 791h1v1h-1zM1139 791h1v1h-1zM1174 791h1v1h-1zM1209 791h1v1h-1zM1244 791h1v1h-1zM1314 791h1v1h-1zM1349 791h1v1h-1zM1384 791h1v1h-1zM1419 791h1v1h-1zM1489 791h1v1h-1zM1524 791h1v1h-1zM1559 791h1v1h-1zM1594 791h1v1h-1zM1664 791h1v1h-1zM1699 791h1v1h-1zM1734 791h1v1h-1zM20 802h1v1h-1zM90 802h1v1h-1zM125 802h1v1h-1zM160 802h1v1h-1zM195 802h1v1h-1zM265 802h1v1h-1zM300 802h1v1h-1zM335 802h1v1h-1zM370 802h1v1h-1zM440 802h1v1h-1zM475 802h1v1h-1zM510 802h1v1h-1zM545 802h1v1h-1zM615 802h1v1h-1zM650 802h1v1h-1zM685 802h1v1h-1zM720 802h1v1h-1zM790 802h1v1h-1zM825 802h1v1h-1zM860 802h1v1h-1zM894 802h1v1h-1zM964 802h1v1h-1zM999 802h1v1h-1zM1034 802h1v1h-1zM1069 802h1v1h-1zM1139 802h1v1h-1zM1174 802h1v1h-1zM1209 802h1v1h-1zM1244 802h1v1h-1zM1314 802h1v1h-1zM1349 802h1v1h-1zM1384 802h1v1h-1zM1419 802h1v1h-1zM1489 802h1v1h-1zM1524 802h1v1h-1zM1559 802h1v1h-1zM1594 802h1v1h-1zM1664 802h1v1h-1zM1699 802h1v1h-1zM1734 802h1v1h-1zM20 826h1v1h-1zM90 826h1v1h-1zM125 826h1v1h-1zM160 826h1v1h-1zM195 826h1v1h-1zM265 826h1v1h-1zM300 826h1v1h-1zM335 826h1v1h-1zM370 826h1v1h-1zM440 826h1v1h-1zM475 826h1v1h-1zM510 826h1v1h-1zM545 826h1v1h-1zM615 826h1v1h-1zM650 826h1v1h-1zM685 826h1v1h-1zM720 826h1v1h-1zM790 826h1v1h-1zM825 826h1v1h-1zM860 826h1v1h-1zM894 826h1v1h-1zM964 826h1v1h-1zM999 826h1v1h-1zM1034 826h1v1h-1zM1069 826h1v1h-1zM1139 826h1v1h-1zM1174 826h1v1h-1zM1209 826h1v1h-1zM1244 826h1v1h-1zM1314 826h1v1h-1zM1349 826h1v1h-1zM1384 826h1v1h-1zM1419 826h1v1h-1zM1489 826h1v1h-1zM1524 826h1v1h-1zM1559 826h1v1h-1zM1594 826h1v1h-1zM1664 826h1v1h-1zM1699 826h1v1h-1zM1734 826h1v1h-1zM20 837h1v1h-1zM90 837h1v1h-1zM125 837h1v1h-1zM160 837h1v1h-1zM195 837h1v1h-1zM265 837h1v1h-1zM300 837h1v1h-1zM335 837h1v1h-1zM370 837h1v1h-1zM440 837h1v1h-1zM475 837h1v1h-1zM510 837h1v1h-1zM545 837h1v1h-1zM615 837h1v1h-1zM650 837h1v1h-1zM685 837h1v1h-1zM720 837h1v1h-1zM790 837h1v1h-1zM825 837h1v1h-1zM860 837h1v1h-1zM894 837h1v1h-1zM964 837h1v1h-1zM999 837h1v1h-1zM1034 837h1v1h-1zM1069 837h1v1h-1zM1139 837h1v1h-1zM1174 837h1v1h-1zM1209 837h1v1h-1zM1244 837h1v1h-1zM1314 837h1v1h-1zM1349 837h1v1h-1zM1384 837h1v1h-1zM1419 837h1v1h-1zM1489 837h1v1h-1zM1524 837h1v1h-1zM1559 837h1v1h-1zM1594 837h1v1h-1zM1664 837h1v1h-1zM1699 837h1v1h-1zM1734 837h1v1h-1zM20 849h1v1h-1zM90 849h1v1h-1zM125 849h1v1h-1zM160 849h1v1h-1zM195 849h1v1h-1zM265 849h1v1h-1zM300 849h1v1h-1zM335 849h1v1h-1zM370 849h1v1h-1zM440 849h1v1h-1zM475 849h1v1h-1zM510 849h1v1h-1zM545 849h1v1h-1zM615 849h1v1h-1zM650 849h1v1h-1zM685 849h1v1h-1zM720 849h1v1h-1zM790 849h1v1h-1zM825 849h1v1h-1zM860 849h1v1h-1zM894 849h1v1h-1zM964 849h1v1h-1zM999 849h1v1h-1zM1034 849h1v1h-1zM1069 849h1v1h-1zM1139 849h1v1h-1zM1174 849h1v1h-1zM1209 849h1v1h-1zM1244 849h1v1h-1zM1314 849h1v1h-1zM1349 849h1v1h-1zM1384 849h1v1h-1zM1419 849h1v1h-1zM1489 849h1v1h-1zM1524 849h1v1h-1zM1559 849h1v1h-1zM1594 849h1v1h-1zM1664 849h1v1h-1zM1699 849h1v1h-1zM1734 849h1v1h-1zM20 860h1v1h-1zM90 860h1v1h-1zM125 860h1v1h-1zM160 860h1v1h-1zM195 860h1v1h-1zM265 860h1v1h-1zM300 860h1v1h-1zM335 860h1v1h-1zM370 860h1v1h-1zM440 860h1v1h-1zM475 860h1v1h-1zM510 860h1v1h-1zM545 860h1v1h-1zM615 860h1v1h-1zM650 860h1v1h-1zM685 860h1v1h-1zM720 860h1v1h-1zM790 860h1v1h-1zM825 860h1v1h-1zM860 860h1v1h-1zM894 860h1v1h-1zM964 860h1v1h-1zM999 860h1v1h-1zM1034 860h1v1h-1zM1069 860h1v1h-1zM1139 860h1v1h-1zM1174 860h1v1h-1zM1209 860h1v1h-1zM1244 860h1v1h-1zM1314 860h1v1h-1zM1349 860h1v1h-1zM1384 860h1v1h-1zM1419 860h1v1h-1zM1489 860h1v1h-1zM1524 860h1v1h-1zM1559 860h1v1h-1zM1594 860h1v1h-1zM1664 860h1v1h-1zM1699 860h1v1h-1zM1734 860h1v1h-1zM230 756h1v1h-1zM230 758h1v1h-1zM230 761h1v1h-1zM230 763h1v1h-1zM230 765h1v1h-1zM230 768h1v1h-1zM230 770h1v1h-1zM230 772h1v1h-1zM230 775h1v1h-1zM230 777h1v1h-1zM230 779h1v1h-1zM230 782h1v1h-1zM230 784h1v1h-1zM230 786h1v1h-1zM230 788h1v1h-1zM230 791h1v1h-1zM230 793h1v1h-1zM230 795h1v1h-1zM230 798h1v1h-1zM230 800h1v1h-1zM230 802h1v1h-1zM230 805h1v1h-1zM230 807h1v1h-1zM230 809h1v1h-1zM230 812h1v1h-1zM230 814h1v1h-1zM230 816h1v1h-1zM230 819h1v1h-1zM230 821h1v1h-1zM230 823h1v1h-1zM230 826h1v1h-1zM230 828h1v1h-1zM230 830h1v1h-1zM230 833h1v1h-1zM230 835h1v1h-1zM230 837h1v1h-1zM230 840h1v1h-1zM230 842h1v1h-1zM230 844h1v1h-1zM230 846h1v1h-1zM230 849h1v1h-1zM230 851h1v1h-1zM230 853h1v1h-1zM230 856h1v1h-1zM230 858h1v1h-1zM230 860h1v1h-1zM230 863h1v1h-1zM230 865h1v1h-1zM230 867h1v1h-1zM230 870h1v1h-1zM405 756h1v1h-1zM405 758h1v1h-1zM405 761h1v1h-1zM405 763h1v1h-1zM405 765h1v1h-1zM405 768h1v1h-1zM405 770h1v1h-1zM405 772h1v1h-1zM405 775h1v1h-1zM405 777h1v1h-1zM405 779h1v1h-1zM405 782h1v1h-1zM405 784h1v1h-1zM405 786h1v1h-1zM405 788h1v1h-1zM405 791h1v1h-1zM405 793h1v1h-1zM405 795h1v1h-1zM405 798h1v1h-1zM405 800h1v1h-1zM405 802h1v1h-1zM405 805h1v1h-1zM405 807h1v1h-1zM405 809h1v1h-1zM405 812h1v1h-1zM405 814h1v1h-1zM405 816h1v1h-1zM405 819h1v1h-1zM405 821h1v1h-1zM405 823h1v1h-1zM405 826h1v1h-1zM405 828h1v1h-1zM405 830h1v1h-1zM405 833h1v1h-1zM405 835h1v1h-1zM405 837h1v1h-1zM405 840h1v1h-1zM405 842h1v1h-1zM405 844h1v1h-1zM405 846h1v1h-1zM405 849h1v1h-1zM405 851h1v1h-1zM405 853h1v1h-1zM405 856h1v1h-1zM405 858h1v1h-1zM405 860h1v1h-1zM405 863h1v1h-1zM405 865h1v1h-1zM405 867h1v1h-1zM405 870h1v1h-1zM580 756h1v1h-1zM580 758h1v1h-1zM580 761h1v1h-1zM580 763h1v1h-1zM580 765h1v1h-1zM580 768h1v1h-1zM580 770h1v1h-1zM580 772h1v1h-1zM580 775h1v1h-1zM580 777h1v1h-1zM580 779h1v1h-1zM580 782h1v1h-1zM580 784h1v1h-1zM580 786h1v1h-1zM580 788h1v1h-1zM580 791h1v1h-1zM580 793h1v1h-1zM580 795h1v1h-1zM580 798h1v1h-1zM580 800h1v1h-1zM580 802h1v1h-1zM580 805h1v1h-1zM580 807h1v1h-1zM580 809h1v1h-1zM580 812h1v1h-1zM580 814h1v1h-1zM580 816h1v1h-1zM580 819h1v1h-1zM580 821h1v1h-1zM580 823h1v1h-1zM580 826h1v1h-1zM580 828h1v1h-1zM580 830h1v1h-1zM580 833h1v1h-1zM580 835h1v1h-1zM580 837h1v1h-1zM580 840h1v1h-1zM580 842h1v1h-1zM580 844h1v1h-1zM580 846h1v1h-1zM580 849h1v1h-1zM580 851h1v1h-1zM580 853h1v1h-1zM580 856h1v1h-1zM580 858h1v1h-1zM580 860h1v1h-1zM580 863h1v1h-1zM580 865h1v1h-1zM580 867h1v1h-1zM580 870h1v1h-1zM755 756h1v1h-1zM755 758h1v1h-1zM755 761h1v1h-1zM755 763h1v1h-1zM755 765h1v1h-1zM755 768h1v1h-1zM755 770h1v1h-1zM755 772h1v1h-1zM755 775h1v1h-1zM755 777h1v1h-1zM755 779h1v1h-1zM755 782h1v1h-1zM755 784h1v1h-1zM755 786h1v1h-1zM755 788h1v1h-1zM755 791h1v1h-1zM755 793h1v1h-1zM755 795h1v1h-1zM755 798h1v1h-1zM755 800h1v1h-1zM755 802h1v1h-1zM755 805h1v1h-1zM755 807h1v1h-1zM755 809h1v1h-1zM755 812h1v1h-1zM755 814h1v1h-1zM755 816h1v1h-1zM755 819h1v1h-1zM755 821h1v1h-1zM755 823h1v1h-1zM755 826h1v1h-1zM755 828h1v1h-1zM755 830h1v1h-1zM755 833h1v1h-1zM755 835h1v1h-1zM755 837h1v1h-1zM755 840h1v1h-1zM755 842h1v1h-1zM755 844h1v1h-1zM755 846h1v1h-1zM755 849h1v1h-1zM755 851h1v1h-1zM755 853h1v1h-1zM755 856h1v1h-1zM755 858h1v1h-1zM755 860h1v1h-1zM755 863h1v1h-1zM755 865h1v1h-1zM755 867h1v1h-1zM755 870h1v1h-1zM929 756h1v1h-1zM929 758h1v1h-1zM929 761h1v1h-1zM929 763h1v1h-1zM929 765h1v1h-1zM929 768h1v1h-1zM929 770h1v1h-1zM929 772h1v1h-1zM929 775h1v1h-1zM929 777h1v1h-1zM929 779h1v1h-1zM929 782h1v1h-1zM929 784h1v1h-1zM929 786h1v1h-1zM929 788h1v1h-1zM929 791h1v1h-1zM929 793h1v1h-1zM929 795h1v1h-1zM929 798h1v1h-1zM929 800h1v1h-1zM929 802h1v1h-1zM929 805h1v1h-1zM929 807h1v1h-1zM929 809h1v1h-1zM929 812h1v1h-1zM929 814h1v1h-1zM929 816h1v1h-1zM929 819h1v1h-1zM929 821h1v1h-1zM929 823h1v1h-1zM929 826h1v1h-1zM929 828h1v1h-1zM929 830h1v1h-1zM929 833h1v1h-1zM929 835h1v1h-1zM929 837h1v1h-1zM929 840h1v1h-1zM929 842h1v1h-1zM929 844h1v1h-1zM929 846h1v1h-1zM929 849h1v1h-1zM929 851h1v1h-1zM929 853h1v1h-1zM929 856h1v1h-1zM929 858h1v1h-1zM929 860h1v1h-1zM929 863h1v1h-1zM929 865h1v1h-1zM929 867h1v1h-1zM929 870h1v1h-1zM1104 756h1v1h-1zM1104 758h1v1h-1zM1104 761h1v1h-1zM1104 763h1v1h-1zM1104 765h1v1h-1zM1104 768h1v1h-1zM1104 770h1v1h-1zM1104 772h1v1h-1zM1104 775h1v1h-1zM1104 777h1v1h-1zM1104 779h1v1h-1zM1104 782h1v1h-1zM1104 784h1v1h-1zM1104 786h1v1h-1zM1104 788h1v1h-1zM1104 791h1v1h-1zM1104 793h1v1h-1zM1104 795h1v1h-1zM1104 798h1v1h-1zM1104 800h1v1h-1zM1104 802h1v1h-1zM1104 805h1v1h-1zM1104 807h1v1h-1zM1104 809h1v1h-1zM1104 812h1v1h-1zM1104 814h1v1h-1zM1104 816h1v1h-1zM1104 819h1v1h-1zM1104 821h1v1h-1zM1104 823h1v1h-1zM1104 826h1v1h-1zM1104 828h1v1h-1zM1104 830h1v1h-1zM1104 833h1v1h-1zM1104 835h1v1h-1zM1104 837h1v1h-1zM1104 840h1v1h-1zM1104 842h1v1h-1zM1104 844h1v1h-1zM1104 846h1v1h-1zM1104 849h1v1h-1zM1104 851h1v1h-1zM1104 853h1v1h-1zM1104 856h1v1h-1zM1104 858h1v1h-1zM1104 860h1v1h-1zM1104 863h1v1h-1zM1104 865h1v1h-1zM1104 867h1v1h-1zM1104 870h1v1h-1zM1279 756h1v1h-1zM1279 758h1v1h-1zM1279 761h1v1h-1zM1279 763h1v1h-1zM1279 765h1v1h-1zM1279 768h1v1h-1zM1279 770h1v1h-1zM1279 772h1v1h-1zM1279 775h1v1h-1zM1279 777h1v1h-1zM1279 779h1v1h-1zM1279 782h1v1h-1zM1279 784h1v1h-1zM1279 786h1v1h-1zM1279 788h1v1h-1zM1279 791h1v1h-1zM1279 793h1v1h-1zM1279 795h1v1h-1zM1279 798h1v1h-1zM1279 800h1v1h-1zM1279 802h1v1h-1zM1279 805h1v1h-1zM1279 807h1v1h-1zM1279 809h1v1h-1zM1279 812h1v1h-1zM1279 814h1v1h-1zM1279 816h1v1h-1zM1279 819h1v1h-1zM1279 821h1v1h-1zM1279 823h1v1h-1zM1279 826h1v1h-1zM1279 828h1v1h-1zM1279 830h1v1h-1zM1279 833h1v1h-1zM1279 835h1v1h-1zM1279 837h1v1h-1zM1279 840h1v1h-1zM1279 842h1v1h-1zM1279 844h1v1h-1zM1279 846h1v1h-1zM1279 849h1v1h-1zM1279 851h1v1h-1zM1279 853h1v1h-1zM1279 856h1v1h-1zM1279 858h1v1h-1zM1279 860h1v1h-1zM1279 863h1v1h-1zM1279 865h1v1h-1zM1279 867h1v1h-1zM1279 870h1v1h-1zM1454 756h1v1h-1zM1454 758h1v1h-1zM1454 761h1v1h-1zM1454 763h1v1h-1zM1454 765h1v1h-1zM1454 768h1v1h-1zM1454 770h1v1h-1zM1454 772h1v1h-1zM1454 775h1v1h-1zM1454 777h1v1h-1zM1454 779h1v1h-1zM1454 782h1v1h-1zM1454 784h1v1h-1zM1454 786h1v1h-1zM1454 788h1v1h-1zM1454 791h1v1h-1zM1454 793h1v1h-1zM1454 795h1v1h-1zM1454 798h1v1h-1zM1454 800h1v1h-1zM1454 802h1v1h-1zM1454 805h1v1h-1zM1454 807h1v1h-1zM1454 809h1v1h-1zM1454 812h1v1h-1zM1454 814h1v1h-1zM1454 816h1v1h-1zM1454 819h1v1h-1zM1454 821h1v1h-1zM1454 823h1v1h-1zM1454 826h1v1h-1zM1454 828h1v1h-1zM1454 830h1v1h-1zM1454 833h1v1h-1zM1454 835h1v1h-1zM1454 837h1v1h-1zM1454 840h1v1h-1zM1454 842h1v1h-1zM1454 844h1v1h-1zM1454 846h1v1h-1zM1454 849h1v1h-1zM1454 851h1v1h-1zM1454 853h1v1h-1zM1454 856h1v1h-1zM1454 858h1v1h-1zM1454 860h1v1h-1zM1454 863h1v1h-1zM1454 865h1v1h-1zM1454 867h1v1h-1zM1454 870h1v1h-1zM1629 756h1v1h-1zM1629 758h1v1h-1zM1629 761h1v1h-1zM1629 763h1v1h-1zM1629 765h1v1h-1zM1629 768h1v1h-1zM1629 770h1v1h-1zM1629 772h1v1h-1zM1629 775h1v1h-1zM1629 777h1v1h-1zM1629 779h1v1h-1zM1629 782h1v1h-1zM1629 784h1v1h-1zM1629 786h1v1h-1zM1629 788h1v1h-1zM1629 791h1v1h-1zM1629 793h1v1h-1zM1629 795h1v1h-1zM1629 798h1v1h-1zM1629 800h1v1h-1zM1629 802h1v1h-1zM1629 805h1v1h-1zM1629 807h1v1h-1zM1629 809h1v1h-1zM1629 812h1v1h-1zM1629 814h1v1h-1zM1629 816h1v1h-1zM1629 819h1v1h-1zM1629 821h1v1h-1zM1629 823h1v1h-1zM1629 826h1v1h-1zM1629 828h1v1h-1zM1629 830h1v1h-1zM1629 833h1v1h-1zM1629 835h1v1h-1zM1629 837h1v1h-1zM1629 840h1v1h-1zM1629 842h1v1h-1zM1629 844h1v1h-1zM1629 846h1v1h-1zM1629 849h1v1h-1zM1629 851h1v1h-1zM1629 853h1v1h-1zM1629 856h1v1h-1zM1629 858h1v1h-1zM1629 860h1v1h-1zM1629 863h1v1h-1zM1629 865h1v1h-1zM1629 867h1v1h-1zM1629 870h1v1h-1zM20 873h1v1h-1zM90 873h1v1h-1zM125 873h1v1h-1zM160 873h1v1h-1zM195 873h1v1h-1zM265 873h1v1h-1zM300 873h1v1h-1zM335 873h1v1h-1zM370 873h1v1h-1zM440 873h1v1h-1zM475 873h1v1h-1zM510 873h1v1h-1zM545 873h1v1h-1zM615 873h1v1h-1zM650 873h1v1h-1zM685 873h1v1h-1zM720 873h1v1h-1zM790 873h1v1h-1zM825 873h1v1h-1zM860 873h1v1h-1zM894 873h1v1h-1zM964 873h1v1h-1zM999 873h1v1h-1zM1034 873h1v1h-1zM1069 873h1v1h-1zM1139 873h1v1h-1zM1174 873h1v1h-1zM1209 873h1v1h-1zM1244 873h1v1h-1zM1314 873h1v1h-1zM1349 873h1v1h-1zM1384 873h1v1h-1zM1419 873h1v1h-1zM1489 873h1v1h-1zM1524 873h1v1h-1zM1559 873h1v1h-1zM1594 873h1v1h-1zM1664 873h1v1h-1zM1699 873h1v1h-1zM1734 873h1v1h-1zM20 885h1v1h-1zM90 885h1v1h-1zM125 885h1v1h-1zM160 885h1v1h-1zM195 885h1v1h-1zM265 885h1v1h-1zM300 885h1v1h-1zM335 885h1v1h-1zM370 885h1v1h-1zM440 885h1v1h-1zM475 885h1v1h-1zM510 885h1v1h-1zM545 885h1v1h-1zM615 885h1v1h-1zM650 885h1v1h-1zM685 885h1v1h-1zM720 885h1v1h-1zM790 885h1v1h-1zM825 885h1v1h-1zM860 885h1v1h-1zM894 885h1v1h-1zM964 885h1v1h-1zM999 885h1v1h-1zM1034 885h1v1h-1zM1069 885h1v1h-1zM1139 885h1v1h-1zM1174 885h1v1h-1zM1209 885h1v1h-1zM1244 885h1v1h-1zM1314 885h1v1h-1zM1349 885h1v1h-1zM1384 885h1v1h-1zM1419 885h1v1h-1zM1489 885h1v1h-1zM1524 885h1v1h-1zM1559 885h1v1h-1zM1594 885h1v1h-1zM1664 885h1v1h-1zM1699 885h1v1h-1zM1734 885h1v1h-1zM20 897h1v1h-1zM90 897h1v1h-1zM125 897h1v1h-1zM160 897h1v1h-1zM195 897h1v1h-1zM265 897h1v1h-1zM300 897h1v1h-1zM335 897h1v1h-1zM370 897h1v1h-1zM440 897h1v1h-1zM475 897h1v1h-1zM510 897h1v1h-1zM545 897h1v1h-1zM615 897h1v1h-1zM650 897h1v1h-1zM685 897h1v1h-1zM720 897h1v1h-1zM790 897h1v1h-1zM825 897h1v1h-1zM860 897h1v1h-1zM894 897h1v1h-1zM964 897h1v1h-1zM999 897h1v1h-1zM1034 897h1v1h-1zM1069 897h1v1h-1zM1139 897h1v1h-1zM1174 897h1v1h-1zM1209 897h1v1h-1zM1244 897h1v1h-1zM1314 897h1v1h-1zM1349 897h1v1h-1zM1384 897h1v1h-1zM1419 897h1v1h-1zM1489 897h1v1h-1zM1524 897h1v1h-1zM1559 897h1v1h-1zM1594 897h1v1h-1zM1664 897h1v1h-1zM1699 897h1v1h-1zM1734 897h1v1h-1zM20 909h1v1h-1zM90 909h1v1h-1zM125 909h1v1h-1zM160 909h1v1h-1zM195 909h1v1h-1zM265 909h1v1h-1zM300 909h1v1h-1zM335 909h1v1h-1zM370 909h1v1h-1zM440 909h1v1h-1zM475 909h1v1h-1zM510 909h1v1h-1zM545 909h1v1h-1zM615 909h1v1h-1zM650 909h1v1h-1zM685 909h1v1h-1zM720 909h1v1h-1zM790 909h1v1h-1zM825 909h1v1h-1zM860 909h1v1h-1zM894 909h1v1h-1zM964 909h1v1h-1zM999 909h1v1h-1zM1034 909h1v1h-1zM1069 909h1v1h-1zM1139 909h1v1h-1zM1174 909h1v1h-1zM1209 909h1v1h-1zM1244 909h1v1h-1zM1314 909h1v1h-1zM1349 909h1v1h-1zM1384 909h1v1h-1zM1419 909h1v1h-1zM1489 909h1v1h-1zM1524 909h1v1h-1zM1559 909h1v1h-1zM1594 909h1v1h-1zM1664 909h1v1h-1zM1699 909h1v1h-1zM1734 909h1v1h-1zM20 921h1v1h-1zM90 921h1v1h-1zM125 921h1v1h-1zM160 921h1v1h-1zM195 921h1v1h-1zM265 921h1v1h-1zM300 921h1v1h-1zM335 921h1v1h-1zM370 921h1v1h-1zM440 921h1v1h-1zM475 921h1v1h-1zM510 921h1v1h-1zM545 921h1v1h-1zM615 921h1v1h-1zM650 921h1v1h-1zM685 921h1v1h-1zM720 921h1v1h-1zM790 921h1v1h-1zM825 921h1v1h-1zM860 921h1v1h-1zM894 921h1v1h-1zM964 921h1v1h-1zM999 921h1v1h-1zM1034 921h1v1h-1zM1069 921h1v1h-1zM1139 921h1v1h-1zM1174 921h1v1h-1zM1209 921h1v1h-1zM1244 921h1v1h-1zM1314 921h1v1h-1zM1349 921h1v1h-1zM1384 921h1v1h-1zM1419 921h1v1h-1zM1489 921h1v1h-1zM1524 921h1v1h-1zM1559 921h1v1h-1zM1594 921h1v1h-1zM1664 921h1v1h-1zM1699 921h1v1h-1zM1734 921h1v1h-1zM20 944h1v1h-1zM90 944h1v1h-1zM125 944h1v1h-1zM160 944h1v1h-1zM195 944h1v1h-1zM265 944h1v1h-1zM300 944h1v1h-1zM335 944h1v1h-1zM370 944h1v1h-1zM440 944h1v1h-1zM475 944h1v1h-1zM510 944h1v1h-1zM545 944h1v1h-1zM615 944h1v1h-1zM650 944h1v1h-1zM685 944h1v1h-1zM720 944h1v1h-1zM790 944h1v1h-1zM825 944h1v1h-1zM860 944h1v1h-1zM894 944h1v1h-1zM964 944h1v1h-1zM999 944h1v1h-1zM1034 944h1v1h-1zM1069 944h1v1h-1zM1139 944h1v1h-1zM1174 944h1v1h-1zM1209 944h1v1h-1zM1244 944h1v1h-1zM1314 944h1v1h-1zM1349 944h1v1h-1zM1384 944h1v1h-1zM1419 944h1v1h-1zM1489 944h1v1h-1zM1524 944h1v1h-1zM1559 944h1v1h-1zM1594 944h1v1h-1zM1664 944h1v1h-1zM1699 944h1v1h-1zM1734 944h1v1h-1zM20 956h1v1h-1zM90 956h1v1h-1zM125 956h1v1h-1zM160 956h1v1h-1zM195 956h1v1h-1zM265 956h1v1h-1zM300 956h1v1h-1zM335 956h1v1h-1zM370 956h1v1h-1zM440 956h1v1h-1zM475 956h1v1h-1zM510 956h1v1h-1zM545 956h1v1h-1zM615 956h1v1h-1zM650 956h1v1h-1zM685 956h1v1h-1zM720 956h1v1h-1zM790 956h1v1h-1zM825 956h1v1h-1zM860 956h1v1h-1zM894 956h1v1h-1zM964 956h1v1h-1zM999 956h1v1h-1zM1034 956h1v1h-1zM1069 956h1v1h-1zM1139 956h1v1h-1zM1174 956h1v1h-1zM1209 956h1v1h-1zM1244 956h1v1h-1zM1314 956h1v1h-1zM1349 956h1v1h-1zM1384 956h1v1h-1zM1419 956h1v1h-1zM1489 956h1v1h-1zM1524 956h1v1h-1zM1559 956h1v1h-1zM1594 956h1v1h-1zM1664 956h1v1h-1zM1699 956h1v1h-1zM1734 956h1v1h-1zM20 968h1v1h-1zM90 968h1v1h-1zM125 968h1v1h-1zM160 968h1v1h-1zM195 968h1v1h-1zM265 968h1v1h-1zM300 968h1v1h-1zM335 968h1v1h-1zM370 968h1v1h-1zM440 968h1v1h-1zM475 968h1v1h-1zM510 968h1v1h-1zM545 968h1v1h-1zM615 968h1v1h-1zM650 968h1v1h-1zM685 968h1v1h-1zM720 968h1v1h-1zM790 968h1v1h-1zM825 968h1v1h-1zM860 968h1v1h-1zM894 968h1v1h-1zM964 968h1v1h-1zM999 968h1v1h-1zM1034 968h1v1h-1zM1069 968h1v1h-1zM1139 968h1v1h-1zM1174 968h1v1h-1zM1209 968h1v1h-1zM1244 968h1v1h-1zM1314 968h1v1h-1zM1349 968h1v1h-1zM1384 968h1v1h-1zM1419 968h1v1h-1zM1489 968h1v1h-1zM1524 968h1v1h-1zM1559 968h1v1h-1zM1594 968h1v1h-1zM1664 968h1v1h-1zM1699 968h1v1h-1zM1734 968h1v1h-1zM20 980h1v1h-1zM90 980h1v1h-1zM125 980h1v1h-1zM160 980h1v1h-1zM195 980h1v1h-1zM265 980h1v1h-1zM300 980h1v1h-1zM335 980h1v1h-1zM370 980h1v1h-1zM440 980h1v1h-1zM475 980h1v1h-1zM510 980h1v1h-1zM545 980h1v1h-1zM615 980h1v1h-1zM650 980h1v1h-1zM685 980h1v1h-1zM720 980h1v1h-1zM790 980h1v1h-1zM825 980h1v1h-1zM860 980h1v1h-1zM894 980h1v1h-1zM964 980h1v1h-1zM999 980h1v1h-1zM1034 980h1v1h-1zM1069 980h1v1h-1zM1139 980h1v1h-1zM1174 980h1v1h-1zM1209 980h1v1h-1zM1244 980h1v1h-1zM1314 980h1v1h-1zM1349 980h1v1h-1zM1384 980h1v1h-1zM1419 980h1v1h-1zM1489 980h1v1h-1zM1524 980h1v1h-1zM1559 980h1v1h-1zM1594 980h1v1h-1zM1664 980h1v1h-1zM1699 980h1v1h-1zM1734 980h1v1h-1zM230 873h1v1h-1zM230 875h1v1h-1zM230 878h1v1h-1zM230 880h1v1h-1zM230 883h1v1h-1zM230 885h1v1h-1zM230 887h1v1h-1zM230 890h1v1h-1zM230 892h1v1h-1zM230 894h1v1h-1zM230 897h1v1h-1zM230 899h1v1h-1zM230 902h1v1h-1zM230 904h1v1h-1zM230 906h1v1h-1zM230 909h1v1h-1zM230 911h1v1h-1zM230 913h1v1h-1zM230 916h1v1h-1zM230 918h1v1h-1zM230 921h1v1h-1zM230 923h1v1h-1zM230 925h1v1h-1zM230 928h1v1h-1zM230 930h1v1h-1zM230 933h1v1h-1zM230 935h1v1h-1zM230 937h1v1h-1zM230 940h1v1h-1zM230 942h1v1h-1zM230 944h1v1h-1zM230 947h1v1h-1zM230 949h1v1h-1zM230 952h1v1h-1zM230 954h1v1h-1zM230 956h1v1h-1zM230 959h1v1h-1zM230 961h1v1h-1zM230 963h1v1h-1zM230 966h1v1h-1zM230 968h1v1h-1zM230 971h1v1h-1zM230 973h1v1h-1zM230 975h1v1h-1zM230 978h1v1h-1zM230 980h1v1h-1zM230 982h1v1h-1zM230 985h1v1h-1zM230 987h1v1h-1zM230 990h1v1h-1zM405 873h1v1h-1zM405 875h1v1h-1zM405 878h1v1h-1zM405 880h1v1h-1zM405 883h1v1h-1zM405 885h1v1h-1zM405 887h1v1h-1zM405 890h1v1h-1zM405 892h1v1h-1zM405 894h1v1h-1zM405 897h1v1h-1zM405 899h1v1h-1zM405 902h1v1h-1zM405 904h1v1h-1zM405 906h1v1h-1zM405 909h1v1h-1zM405 911h1v1h-1zM405 913h1v1h-1zM405 916h1v1h-1zM405 918h1v1h-1zM405 921h1v1h-1zM405 923h1v1h-1zM405 925h1v1h-1zM405 928h1v1h-1zM405 930h1v1h-1zM405 933h1v1h-1zM405 935h1v1h-1zM405 937h1v1h-1zM405 940h1v1h-1zM405 942h1v1h-1zM405 944h1v1h-1zM405 947h1v1h-1zM405 949h1v1h-1zM405 952h1v1h-1zM405 954h1v1h-1zM405 956h1v1h-1zM405 959h1v1h-1zM405 961h1v1h-1zM405 963h1v1h-1zM405 966h1v1h-1zM405 968h1v1h-1zM405 971h1v1h-1zM405 973h1v1h-1zM405 975h1v1h-1zM405 978h1v1h-1zM405 980h1v1h-1zM405 982h1v1h-1zM405 985h1v1h-1zM405 987h1v1h-1zM405 990h1v1h-1zM580 873h1v1h-1zM580 875h1v1h-1zM580 878h1v1h-1zM580 880h1v1h-1zM580 883h1v1h-1zM580 885h1v1h-1zM580 887h1v1h-1zM580 890h1v1h-1zM580 892h1v1h-1zM580 894h1v1h-1zM580 897h1v1h-1zM580 899h1v1h-1zM580 902h1v1h-1zM580 904h1v1h-1zM580 906h1v1h-1zM580 909h1v1h-1zM580 911h1v1h-1zM580 913h1v1h-1zM580 916h1v1h-1zM580 918h1v1h-1zM580 921h1v1h-1zM580 923h1v1h-1zM580 925h1v1h-1zM580 928h1v1h-1zM580 930h1v1h-1zM580 933h1v1h-1zM580 935h1v1h-1zM580 937h1v1h-1zM580 940h1v1h-1zM580 942h1v1h-1zM580 944h1v1h-1zM580 947h1v1h-1zM580 949h1v1h-1zM580 952h1v1h-1zM580 954h1v1h-1zM580 956h1v1h-1zM580 959h1v1h-1zM580 961h1v1h-1zM580 963h1v1h-1zM580 966h1v1h-1zM580 968h1v1h-1zM580 971h1v1h-1zM580 973h1v1h-1zM580 975h1v1h-1zM580 978h1v1h-1zM580 980h1v1h-1zM580 982h1v1h-1zM580 985h1v1h-1zM580 987h1v1h-1zM580 990h1v1h-1zM755 873h1v1h-1zM755 875h1v1h-1zM755 878h1v1h-1zM755 880h1v1h-1zM755 883h1v1h-1zM755 885h1v1h-1zM755 887h1v1h-1zM755 890h1v1h-1zM755 892h1v1h-1zM755 894h1v1h-1zM755 897h1v1h-1zM755 899h1v1h-1zM755 902h1v1h-1zM755 904h1v1h-1zM755 906h1v1h-1zM755 909h1v1h-1zM755 911h1v1h-1zM755 913h1v1h-1zM755 916h1v1h-1zM755 918h1v1h-1zM755 921h1v1h-1zM755 923h1v1h-1zM755 925h1v1h-1zM755 928h1v1h-1zM755 930h1v1h-1zM755 933h1v1h-1zM755 935h1v1h-1zM755 937h1v1h-1zM755 940h1v1h-1zM755 942h1v1h-1zM755 944h1v1h-1zM755 947h1v1h-1zM755 949h1v1h-1zM755 952h1v1h-1zM755 954h1v1h-1zM755 956h1v1h-1zM755 959h1v1h-1zM755 961h1v1h-1zM755 963h1v1h-1zM755 966h1v1h-1zM755 968h1v1h-1zM755 971h1v1h-1zM755 973h1v1h-1zM755 975h1v1h-1zM755 978h1v1h-1zM755 980h1v1h-1zM755 982h1v1h-1zM755 985h1v1h-1zM755 987h1v1h-1zM755 990h1v1h-1zM929 873h1v1h-1zM929 875h1v1h-1zM929 878h1v1h-1zM929 880h1v1h-1zM929 883h1v1h-1zM929 885h1v1h-1zM929 887h1v1h-1zM929 890h1v1h-1zM929 892h1v1h-1zM929 894h1v1h-1zM929 897h1v1h-1zM929 899h1v1h-1zM929 902h1v1h-1zM929 904h1v1h-1zM929 906h1v1h-1zM929 909h1v1h-1zM929 911h1v1h-1zM929 913h1v1h-1zM929 916h1v1h-1zM929 918h1v1h-1zM929 921h1v1h-1zM929 923h1v1h-1zM929 925h1v1h-1zM929 928h1v1h-1zM929 930h1v1h-1zM929 933h1v1h-1zM929 935h1v1h-1zM929 937h1v1h-1zM929 940h1v1h-1zM929 942h1v1h-1zM929 944h1v1h-1zM929 947h1v1h-1zM929 949h1v1h-1zM929 952h1v1h-1zM929 954h1v1h-1zM929 956h1v1h-1zM929 959h1v1h-1zM929 961h1v1h-1zM929 963h1v1h-1zM929 966h1v1h-1zM929 968h1v1h-1zM929 971h1v1h-1zM929 973h1v1h-1zM929 975h1v1h-1zM929 978h1v1h-1zM929 980h1v1h-1zM929 982h1v1h-1zM929 985h1v1h-1zM929 987h1v1h-1zM929 990h1v1h-1zM1104 873h1v1h-1zM1104 875h1v1h-1zM1104 878h1v1h-1zM1104 880h1v1h-1zM1104 883h1v1h-1zM1104 885h1v1h-1zM1104 887h1v1h-1zM1104 890h1v1h-1zM1104 892h1v1h-1zM1104 894h1v1h-1zM1104 897h1v1h-1zM1104 899h1v1h-1zM1104 902h1v1h-1zM1104 904h1v1h-1zM1104 906h1v1h-1zM1104 909h1v1h-1zM1104 911h1v1h-1zM1104 913h1v1h-1zM1104 916h1v1h-1zM1104 918h1v1h-1zM1104 921h1v1h-1zM1104 923h1v1h-1zM1104 925h1v1h-1zM1104 928h1v1h-1zM1104 930h1v1h-1zM1104 933h1v1h-1zM1104 935h1v1h-1zM1104 937h1v1h-1zM1104 940h1v1h-1zM1104 942h1v1h-1zM1104 944h1v1h-1zM1104 947h1v1h-1zM1104 949h1v1h-1zM1104 952h1v1h-1zM1104 954h1v1h-1zM1104 956h1v1h-1zM1104 959h1v1h-1zM1104 961h1v1h-1zM1104 963h1v1h-1zM1104 966h1v1h-1zM1104 968h1v1h-1zM1104 971h1v1h-1zM1104 973h1v1h-1zM1104 975h1v1h-1zM1104 978h1v1h-1zM1104 980h1v1h-1zM1104 982h1v1h-1zM1104 985h1v1h-1zM1104 987h1v1h-1zM1104 990h1v1h-1zM1279 873h1v1h-1zM1279 875h1v1h-1zM1279 878h1v1h-1zM1279 880h1v1h-1zM1279 883h1v1h-1zM1279 885h1v1h-1zM1279 887h1v1h-1zM1279 890h1v1h-1zM1279 892h1v1h-1zM1279 894h1v1h-1zM1279 897h1v1h-1zM1279 899h1v1h-1zM1279 902h1v1h-1zM1279 904h1v1h-1zM1279 906h1v1h-1zM1279 909h1v1h-1zM1279 911h1v1h-1zM1279 913h1v1h-1zM1279 916h1v1h-1zM1279 918h1v1h-1zM1279 921h1v1h-1zM1279 923h1v1h-1zM1279 925h1v1h-1zM1279 928h1v1h-1zM1279 930h1v1h-1zM1279 933h1v1h-1zM1279 935h1v1h-1zM1279 937h1v1h-1zM1279 940h1v1h-1zM1279 942h1v1h-1zM1279 944h1v1h-1zM1279 947h1v1h-1zM1279 949h1v1h-1zM1279 952h1v1h-1zM1279 954h1v1h-1zM1279 956h1v1h-1zM1279 959h1v1h-1zM1279 961h1v1h-1zM1279 963h1v1h-1zM1279 966h1v1h-1zM1279 968h1v1h-1zM1279 971h1v1h-1zM1279 973h1v1h-1zM1279 975h1v1h-1zM1279 978h1v1h-1zM1279 980h1v1h-1zM1279 982h1v1h-1zM1279 985h1v1h-1zM1279 987h1v1h-1zM1279 990h1v1h-1zM1454 873h1v1h-1zM1454 875h1v1h-1zM1454 878h1v1h-1zM1454 880h1v1h-1zM1454 883h1v1h-1zM1454 885h1v1h-1zM1454 887h1v1h-1zM1454 890h1v1h-1zM1454 892h1v1h-1zM1454 894h1v1h-1zM1454 897h1v1h-1zM1454 899h1v1h-1zM1454 902h1v1h-1zM1454 904h1v1h-1zM1454 906h1v1h-1zM1454 909h1v1h-1zM1454 911h1v1h-1zM1454 913h1v1h-1zM1454 916h1v1h-1zM1454 918h1v1h-1zM1454 921h1v1h-1zM1454 923h1v1h-1zM1454 925h1v1h-1zM1454 928h1v1h-1zM1454 930h1v1h-1zM1454 933h1v1h-1zM1454 935h1v1h-1zM1454 937h1v1h-1zM1454 940h1v1h-1zM1454 942h1v1h-1zM1454 944h1v1h-1zM1454 947h1v1h-1zM1454 949h1v1h-1zM1454 952h1v1h-1zM1454 954h1v1h-1zM1454 956h1v1h-1zM1454 959h1v1h-1zM1454 961h1v1h-1zM1454 963h1v1h-1zM1454 966h1v1h-1zM1454 968h1v1h-1zM1454 971h1v1h-1zM1454 973h1v1h-1zM1454 975h1v1h-1zM1454 978h1v1h-1zM1454 980h1v1h-1zM1454 982h1v1h-1zM1454 985h1v1h-1zM1454 987h1v1h-1zM1454 990h1v1h-1zM1629 873h1v1h-1zM1629 875h1v1h-1zM1629 878h1v1h-1zM1629 880h1v1h-1zM1629 883h1v1h-1zM1629 885h1v1h-1zM1629 887h1v1h-1zM1629 890h1v1h-1zM1629 892h1v1h-1zM1629 894h1v1h-1zM1629 897h1v1h-1zM1629 899h1v1h-1zM1629 902h1v1h-1zM1629 904h1v1h-1zM1629 906h1v1h-1zM1629 909h1v1h-1zM1629 911h1v1h-1zM1629 913h1v1h-1zM1629 916h1v1h-1zM1629 918h1v1h-1zM1629 921h1v1h-1zM1629 923h1v1h-1zM1629 925h1v1h-1zM1629 928h1v1h-1zM1629 930h1v1h-1zM1629 933h1v1h-1zM1629 935h1v1h-1zM1629 937h1v1h-1zM1629 940h1v1h-1zM1629 942h1v1h-1zM1629 944h1v1h-1zM1629 947h1v1h-1zM1629 949h1v1h-1zM1629 952h1v1h-1zM1629 954h1v1h-1zM1629 956h1v1h-1zM1629 959h1v1h-1zM1629 961h1v1h-1zM1629 963h1v1h-1zM1629 966h1v1h-1zM1629 968h1v1h-1zM1629 971h1v1h-1zM1629 973h1v1h-1zM1629 975h1v1h-1zM1629 978h1v1h-1zM1629 980h1v1h-1zM1629 982h1v1h-1zM1629 985h1v1h-1zM1629 987h1v1h-1zM1629 990h1v1h-1z" fill="#bdbdbd" shape-rendering="crispEdges"/>
<rect x="3" y="169" width="1748" height="2" fill="#787878"/>
<rect x="3" y="286" width="1748" height="2" fill="#787878"/>
<rect x="3" y="403" width="1748" height="2" fill="#787878"/>
<rect x="3" y="520" width="1748" height="2" fill="#787878"/>
<rect x="3" y="637" width="1748" height="2" fill="#787878"/>
<rect x="3" y="754" width="1748" height="2" fill="#787878"/>
<rect x="3" y="871" width="1748" height="2" fill="#787878"/>
<path d="M55 54h1v1h-1zM55 60h1v5h-1zM55 70h1v5h-1zM55 80h1v5h-1zM55 90h1v5h-1zM55 100h1v5h-1zM55 110h1v5h-1zM55 120h1v5h-1zM55 130h1v5h-1zM55 140h1v5h-1zM55 150h1v5h-1zM55 160h1v5h-1zM55 171h1v1h-1zM55 177h1v5h-1zM55 187h1v5h-1zM55 197h1v5h-1zM55 207h1v5h-1zM55 217h1v5h-1zM55 227h1v5h-1zM55 237h1v5h-1zM55 247h1v5h-1zM55 257h1v5h-1zM55 267h1v5h-1zM55 277h1v5h-1zM55 288h1v1h-1zM55 294h1v5h-1zM55 304h1v5h-1zM55 314h1v5h-1zM55 324h1v5h-1zM55 334h1v5h-1zM55 344h1v5h-1zM55 354h1v5h-1zM55 364h1v5h-1zM55 374h1v5h-1zM55 384h1v5h-1zM55 394h1v5h-1zM55 405h1v1h-1zM55 415h1v5h-1zM55 425h1v5h-1zM55 435h1v5h-1zM55 445h1v5h-1zM55 455h1v5h-1zM55 465h1v5h-1zM55 475h1v5h-1zM55 485h1v5h-1zM55 495h1v5h-1zM55 505h1v5h-1zM55 515h1v5h-1zM55 522h1v1h-1zM55 532h1v5h-1zM55 542h1v5h-1zM55 552h1v5h-1zM55 562h1v5h-1zM55 572h1v5h-1zM55 582h1v5h-1zM55 592h1v5h-1zM55 602h1v5h-1zM55 612h1v5h-1zM55 622h1v5h-1zM55 632h1v5h-1zM55 639h1v1h-1zM55 645h1v5h-1zM55 655h1v5h-1zM55 665h1v5h-1zM55 675h1v5h-1zM55 685h1v5h-1zM55 695h1v5h-1zM55 705h1v5h-1zM55 715h1v5h-1zM55 725h1v5h-1zM55 735h1v5h-1zM55 745h1v5h-1zM55 756h1v1h-1zM55 762h1v5h-1zM55 772h1v5h-1zM55 782h1v5h-1zM55 792h1v5h-1zM55 802h1v5h-1zM55 812h1v5h-1zM55 822h1v5h-1zM55 832h1v5h-1zM55 842h1v5h-1zM55 852h1v5h-1zM55 862h1v5h-1zM55 873h1v1h-1zM55 881h1v5h-1zM55 891h1v5h-1zM55 901h1v5h-1zM55 911h1v5h-1zM55 921h1v5h-1zM55 931h1v5h-1zM55 941h1v5h-1zM55 951h1v5h-1zM55 961h1v5h-1zM55 971h1v4h-1z" fill="#c8c8c8"/>
<path d="M1716.8 59.8h29.7v13h-29.7zM1724.0 83.0h22.5v13h-22.5zM1724.0 106.2h22.5v13h-22.5zM1719.7 129.4h26.8v13h-26.8zM1712.4 152.6h34.1v13h-34.1zM1698.7 176.8h47.8v13h-47.8zM1698.7 200.0h47.8v13h-47.8zM1724.0 223.2h22.5v13h-22.5zM1694.4 246.4h52.1v13h-52.1zM1694.4 269.6h52.1v13h-52.1zM1698.7 293.8h47.8v13h-47.8zM1698.7 317.0h47.8v13h-47.8zM1724.0 340.2h22.5v13h-22.5zM1694.4 363.4h52.1v13h-52.1zM1694.4 386.6h52.1v13h-52.1zM1701.6 413.2h44.9v13h-44.9zM1694.4 436.4h52.1v13h-52.1zM1694.4 459.6h52.1v13h-52.1zM1694.4 482.8h52.1v13h-52.1zM1694.4 506.0h52.1v13h-52.1zM1724.0 527.8h22.5v13h-22.5zM1694.4 551.0h52.1v13h-52.1zM1694.4 574.2h52.1v13h-52.1zM1694.4 597.4h52.1v13h-52.1zM1694.4 620.6h52.1v13h-52.1zM1724.0 644.8h22.5v13h-22.5zM1724.0 668.0h22.5v13h-22.5zM1724.0 691.2h22.5v13h-22.5zM1719.7 714.4h26.8v13h-26.8zM1719.7 737.6h26.8v13h-26.8zM1716.8 761.8h29.7v13h-29.7zM1716.8 785.0h29.7v13h-29.7zM1724.0 808.2h22.5v13h-22.5zM1712.4 831.4h34.1v13h-34.1zM1712.4 854.6h34.1v13h-34.1zM1724.0 878.5h22.5v13h-22.5zM1724.0 902.5h22.5v13h-22.5zM1724.0 926.5h22.5v13h-22.5zM1719.7 950.5h26.8v13h-26.8zM1719.7 974.5h26.8v13h-26.8z" fill="#000"/>
<text x="53.6" y="116.6" font-size="19" fill="#f2e62e" stroke="#f2e62e" stroke-width="0.3" textLength="79.5" lengthAdjust="spacingAndGlyphs">U_loop-b</text>
<text x="53.6" y="233.8" font-size="19" fill="#22cbd9" stroke="#22cbd9" stroke-width="0.3" textLength="52" lengthAdjust="spacingAndGlyphs">YAP-a</text>
<text x="53.6" y="350.5" font-size="19" fill="#e9455c" stroke="#e9455c" stroke-width="0.3" textLength="56.5" lengthAdjust="spacingAndGlyphs">CeBr-a</text>
<text x="53.6" y="467.5" font-size="19" fill="#8fd230" stroke="#8fd230" stroke-width="0.3" textLength="62.5" lengthAdjust="spacingAndGlyphs">CebR-b</text>
<text x="53.6" y="585" font-size="19" fill="#f7952e" stroke="#f7952e" stroke-width="0.3" textLength="61" lengthAdjust="spacingAndGlyphs">NaITl-a</text>
<text x="53.6" y="701.5" font-size="19" fill="#3434d4" stroke="#3434d4" stroke-width="0.3" textLength="44" lengthAdjust="spacingAndGlyphs">LYSO</text>
<text x="53.6" y="818.5" font-size="19" fill="#de46a9" stroke="#de46a9" stroke-width="0.3" textLength="33" lengthAdjust="spacingAndGlyphs">null</text>
<text x="53.6" y="937.4" font-size="19" fill="#00d898" stroke="#00d898" stroke-width="0.3" textLength="63.5" lengthAdjust="spacingAndGlyphs">Trigger</text>
<path d="M42 112h13v1h-13zM55 112h3v1h-3zM55 112h1v4h-1zM56 116h3v1h-3zM57 115h4v1h-4zM59 114h3v1h-3zM60 113h3v1h-3zM61 112h4v1h-4zM63 111h4v1h-4zM65 110h3v1h-3zM66 109h3v1h-3zM67 108h4v1h-4zM69 107h4v1h-4zM71 106h4v1h-4zM73 105h3v1h-3zM74 104h4v1h-4zM76 103h5v1h-5zM79 102h6v1h-6zM83 101h4v1h-4zM85 100h5v1h-5zM88 99h4v1h-4zM90 98h5v1h-5zM93 97h5v1h-5zM96 96h6v1h-6zM100 95h5v1h-5zM103 94h6v1h-6zM107 93h7v1h-7zM112 92h7v1h-7zM117 91h7v1h-7zM122 90h7v1h-7zM127 89h8v1h-8zM133 88h10v1h-10zM141 87h9v1h-9zM148 86h10v1h-10zM156 85h10v1h-10zM164 84h14v1h-14zM176 83h15v1h-15zM189 82h16v1h-16zM203 81h18v1h-18zM219 80h26v1h-26zM243 79h212v1h-212zM453 80h70v1h-70zM521 81h48v1h-48zM567 82h40v1h-40zM605 83h38v1h-38zM641 84h32v1h-32zM671 85h26v1h-26zM695 86h23v1h-23zM716 87h20v1h-20zM734 88h18v1h-18zM750 89h17v1h-17zM765 90h15v1h-15zM778 91h15v1h-15zM791 92h20v1h-20zM809 93h19v1h-19zM826 94h17v1h-17zM841 95h17v1h-17zM856 96h18v1h-18zM872 97h16v1h-16zM886 98h15v1h-15zM899 99h15v1h-15zM912 100h17v1h-17zM927 101h18v1h-18zM943 102h18v1h-18zM959 103h36v1h-36zM993 104h58v1h-58zM1049 105h98v1h-98zM1145 106h157v1h-157zM1300 107h224v1h-224zM1522 108h229v1h-229z" fill="#f8f428" shape-rendering="crispEdges"/>
<rect x="3" y="228" width="1748" height="1" fill="#20d0de" shape-rendering="crispEdges"/>
<rect x="3" y="346" width="1748" height="1" fill="#e83a58" shape-rendering="crispEdges"/>
<rect x="3" y="408" width="1748" height="1" fill="#8cd828" shape-rendering="crispEdges"/>
<rect x="3" y="535" width="1748" height="1" fill="#f7921e" shape-rendering="crispEdges"/>
<rect x="3" y="696" width="1748" height="1" fill="#3030e0" shape-rendering="crispEdges"/>
<rect x="3" y="814" width="1748" height="1" fill="#e040b0" shape-rendering="crispEdges"/>
<path d="M64 534h2v1h-2zM106 534h2v1h-2zM117 534h2v1h-2zM268 534h2v1h-2zM410 534h2v1h-2zM418 534h2v1h-2zM483 534h2v1h-2zM495 534h2v1h-2zM580 534h2v1h-2zM1160 534h2v1h-2zM1260 534h2v1h-2z" fill="#f7921e"/>
<path d="M3 932h52v-36h1696v1h-1695v36h-53z" fill="#00e09c" shape-rendering="crispEdges"/>
<path d="M3 112h5v1h-5zM13 112h5v1h-5zM23 112h5v1h-5zM33 112h5v1h-5zM43 112h5v1h-5zM53 112h5v1h-5zM63 112h5v1h-5zM73 112h5v1h-5zM83 112h5v1h-5zM93 112h5v1h-5zM103 112h5v1h-5zM113 112h5v1h-5zM123 112h5v1h-5zM133 112h5v1h-5zM143 112h5v1h-5zM153 112h5v1h-5zM163 112h5v1h-5zM173 112h5v1h-5zM183 112h5v1h-5zM193 112h5v1h-5zM203 112h5v1h-5zM213 112h5v1h-5zM223 112h5v1h-5zM233 112h5v1h-5zM243 112h5v1h-5zM253 112h5v1h-5zM263 112h5v1h-5zM273 112h5v1h-5zM283 112h5v1h-5zM293 112h5v1h-5zM303 112h5v1h-5zM313 112h5v1h-5zM323 112h5v1h-5zM333 112h5v1h-5zM343 112h5v1h-5zM353 112h5v1h-5zM363 112h5v1h-5zM373 112h5v1h-5zM383 112h5v1h-5zM393 112h5v1h-5zM403 112h5v1h-5zM413 112h5v1h-5zM423 112h5v1h-5zM433 112h5v1h-5zM443 112h5v1h-5zM453 112h5v1h-5zM463 112h5v1h-5zM473 112h5v1h-5zM483 112h5v1h-5zM493 112h5v1h-5zM503 112h5v1h-5zM513 112h5v1h-5zM523 112h5v1h-5zM533 112h5v1h-5zM543 112h5v1h-5zM553 112h5v1h-5zM563 112h5v1h-5zM573 112h5v1h-5zM583 112h5v1h-5zM593 112h5v1h-5zM603 112h5v1h-5zM613 112h5v1h-5zM623 112h5v1h-5zM633 112h5v1h-5zM643 112h5v1h-5zM653 112h5v1h-5zM663 112h5v1h-5zM673 112h5v1h-5zM683 112h5v1h-5zM693 112h5v1h-5zM703 112h5v1h-5zM713 112h5v1h-5zM723 112h5v1h-5zM733 112h5v1h-5zM743 112h5v1h-5zM753 112h5v1h-5zM763 112h5v1h-5zM773 112h5v1h-5zM783 112h5v1h-5zM793 112h5v1h-5zM803 112h5v1h-5zM813 112h5v1h-5zM823 112h5v1h-5zM833 112h5v1h-5zM843 112h5v1h-5zM853 112h5v1h-5zM863 112h5v1h-5zM873 112h5v1h-5zM883 112h5v1h-5zM893 112h5v1h-5zM903 112h5v1h-5zM913 112h5v1h-5zM923 112h5v1h-5zM933 112h5v1h-5zM943 112h5v1h-5zM953 112h5v1h-5zM963 112h5v1h-5zM973 112h5v1h-5zM983 112h5v1h-5zM993 112h5v1h-5zM1003 112h5v1h-5zM1013 112h5v1h-5zM1023 112h5v1h-5zM1033 112h5v1h-5zM1043 112h5v1h-5zM1053 112h5v1h-5zM1063 112h5v1h-5zM1073 112h5v1h-5zM1083 112h5v1h-5zM1093 112h5v1h-5zM1103 112h5v1h-5zM1113 112h5v1h-5zM1123 112h5v1h-5zM1133 112h5v1h-5zM1143 112h5v1h-5zM1153 112h5v1h-5zM1163 112h5v1h-5zM1173 112h5v1h-5zM1183 112h5v1h-5zM1193 112h5v1h-5zM1203 112h5v1h-5zM1213 112h5v1h-5zM1223 112h5v1h-5zM1233 112h5v1h-5zM1243 112h5v1h-5zM1253 112h5v1h-5zM1263 112h5v1h-5zM1273 112h5v1h-5zM1283 112h5v1h-5zM1293 112h5v1h-5zM1303 112h5v1h-5zM1313 112h5v1h-5zM1323 112h5v1h-5zM1333 112h5v1h-5zM1343 112h5v1h-5zM1353 112h5v1h-5zM1363 112h5v1h-5zM1373 112h5v1h-5zM1383 112h5v1h-5zM1393 112h5v1h-5zM1403 112h5v1h-5zM1413 112h5v1h-5zM1423 112h5v1h-5zM1433 112h5v1h-5zM1443 112h5v1h-5zM1453 112h5v1h-5zM1463 112h5v1h-5zM1473 112h5v1h-5zM1483 112h5v1h-5zM1493 112h5v1h-5zM1503 112h5v1h-5zM1513 112h5v1h-5zM1523 112h5v1h-5zM1533 112h5v1h-5zM1543 112h5v1h-5zM1553 112h5v1h-5zM1563 112h5v1h-5zM1573 112h5v1h-5zM1583 112h5v1h-5zM1593 112h5v1h-5zM1603 112h5v1h-5zM1613 112h5v1h-5zM1623 112h5v1h-5zM1633 112h5v1h-5zM1643 112h5v1h-5zM1653 112h5v1h-5zM1663 112h5v1h-5zM1673 112h5v1h-5zM1683 112h5v1h-5zM1693 112h5v1h-5zM1703 112h5v1h-5zM1713 112h5v1h-5z" fill="#c4c4c4" shape-rendering="crispEdges"/>
<path d="M3 229h5v1h-5zM13 229h5v1h-5zM23 229h5v1h-5zM33 229h5v1h-5zM43 229h5v1h-5zM53 229h5v1h-5zM63 229h5v1h-5zM73 229h5v1h-5zM83 229h5v1h-5zM93 229h5v1h-5zM103 229h5v1h-5zM113 229h5v1h-5zM123 229h5v1h-5zM133 229h5v1h-5zM143 229h5v1h-5zM153 229h5v1h-5zM163 229h5v1h-5zM173 229h5v1h-5zM183 229h5v1h-5zM193 229h5v1h-5zM203 229h5v1h-5zM213 229h5v1h-5zM223 229h5v1h-5zM233 229h5v1h-5zM243 229h5v1h-5zM253 229h5v1h-5zM263 229h5v1h-5zM273 229h5v1h-5zM283 229h5v1h-5zM293 229h5v1h-5zM303 229h5v1h-5zM313 229h5v1h-5zM323 229h5v1h-5zM333 229h5v1h-5zM343 229h5v1h-5zM353 229h5v1h-5zM363 229h5v1h-5zM373 229h5v1h-5zM383 229h5v1h-5zM393 229h5v1h-5zM403 229h5v1h-5zM413 229h5v1h-5zM423 229h5v1h-5zM433 229h5v1h-5zM443 229h5v1h-5zM453 229h5v1h-5zM463 229h5v1h-5zM473 229h5v1h-5zM483 229h5v1h-5zM493 229h5v1h-5zM503 229h5v1h-5zM513 229h5v1h-5zM523 229h5v1h-5zM533 229h5v1h-5zM543 229h5v1h-5zM553 229h5v1h-5zM563 229h5v1h-5zM573 229h5v1h-5zM583 229h5v1h-5zM593 229h5v1h-5zM603 229h5v1h-5zM613 229h5v1h-5zM623 229h5v1h-5zM633 229h5v1h-5zM643 229h5v1h-5zM653 229h5v1h-5zM663 229h5v1h-5zM673 229h5v1h-5zM683 229h5v1h-5zM693 229h5v1h-5zM703 229h5v1h-5zM713 229h5v1h-5zM723 229h5v1h-5zM733 229h5v1h-5zM743 229h5v1h-5zM753 229h5v1h-5zM763 229h5v1h-5zM773 229h5v1h-5zM783 229h5v1h-5zM793 229h5v1h-5zM803 229h5v1h-5zM813 229h5v1h-5zM823 229h5v1h-5zM833 229h5v1h-5zM843 229h5v1h-5zM853 229h5v1h-5zM863 229h5v1h-5zM873 229h5v1h-5zM883 229h5v1h-5zM893 229h5v1h-5zM903 229h5v1h-5zM913 229h5v1h-5zM923 229h5v1h-5zM933 229h5v1h-5zM943 229h5v1h-5zM953 229h5v1h-5zM963 229h5v1h-5zM973 229h5v1h-5zM983 229h5v1h-5zM993 229h5v1h-5zM1003 229h5v1h-5zM1013 229h5v1h-5zM1023 229h5v1h-5zM1033 229h5v1h-5zM1043 229h5v1h-5zM1053 229h5v1h-5zM1063 229h5v1h-5zM1073 229h5v1h-5zM1083 229h5v1h-5zM1093 229h5v1h-5zM1103 229h5v1h-5zM1113 229h5v1h-5zM1123 229h5v1h-5zM1133 229h5v1h-5zM1143 229h5v1h-5zM1153 229h5v1h-5zM1163 229h5v1h-5zM1173 229h5v1h-5zM1183 229h5v1h-5zM1193 229h5v1h-5zM1203 229h5v1h-5zM1213 229h5v1h-5zM1223 229h5v1h-5zM1233 229h5v1h-5zM1243 229h5v1h-5zM1253 229h5v1h-5zM1263 229h5v1h-5zM1273 229h5v1h-5zM1283 229h5v1h-5zM1293 229h5v1h-5zM1303 229h5v1h-5zM1313 229h5v1h-5zM1323 229h5v1h-5zM1333 229h5v1h-5zM1343 229h5v1h-5zM1353 229h5v1h-5zM1363 229h5v1h-5zM1373 229h5v1h-5zM1383 229h5v1h-5zM1393 229h5v1h-5zM1403 229h5v1h-5zM1413 229h5v1h-5zM1423 229h5v1h-5zM1433 229h5v1h-5zM1443 229h5v1h-5zM1453 229h5v1h-5zM1463 229h5v1h-5zM1473 229h5v1h-5zM1483 229h5v1h-5zM1493 229h5v1h-5zM1503 229h5v1h-5zM1513 229h5v1h-5zM1523 229h5v1h-5zM1533 229h5v1h-5zM1543 229h5v1h-5zM1553 229h5v1h-5zM1563 229h5v1h-5zM1573 229h5v1h-5zM1583 229h5v1h-5zM1593 229h5v1h-5zM1603 229h5v1h-5zM1613 229h5v1h-5zM1623 229h5v1h-5zM1633 229h5v1h-5zM1643 229h5v1h-5zM1653 229h5v1h-5zM1663 229h5v1h-5zM1673 229h5v1h-5zM1683 229h5v1h-5zM1693 229h5v1h-5zM1703 229h5v1h-5zM1713 229h5v1h-5z" fill="#c4c4c4" shape-rendering="crispEdges"/>
<path d="M3 346h5v1h-5zM13 346h5v1h-5zM23 346h5v1h-5zM33 346h5v1h-5zM43 346h5v1h-5zM53 346h5v1h-5zM63 346h5v1h-5zM73 346h5v1h-5zM83 346h5v1h-5zM93 346h5v1h-5zM103 346h5v1h-5zM113 346h5v1h-5zM123 346h5v1h-5zM133 346h5v1h-5zM143 346h5v1h-5zM153 346h5v1h-5zM163 346h5v1h-5zM173 346h5v1h-5zM183 346h5v1h-5zM193 346h5v1h-5zM203 346h5v1h-5zM213 346h5v1h-5zM223 346h5v1h-5zM233 346h5v1h-5zM243 346h5v1h-5zM253 346h5v1h-5zM263 346h5v1h-5zM273 346h5v1h-5zM283 346h5v1h-5zM293 346h5v1h-5zM303 346h5v1h-5zM313 346h5v1h-5zM323 346h5v1h-5zM333 346h5v1h-5zM343 346h5v1h-5zM353 346h5v1h-5zM363 346h5v1h-5zM373 346h5v1h-5zM383 346h5v1h-5zM393 346h5v1h-5zM403 346h5v1h-5zM413 346h5v1h-5zM423 346h5v1h-5zM433 346h5v1h-5zM443 346h5v1h-5zM453 346h5v1h-5zM463 346h5v1h-5zM473 346h5v1h-5zM483 346h5v1h-5zM493 346h5v1h-5zM503 346h5v1h-5zM513 346h5v1h-5zM523 346h5v1h-5zM533 346h5v1h-5zM543 346h5v1h-5zM553 346h5v1h-5zM563 346h5v1h-5zM573 346h5v1h-5zM583 346h5v1h-5zM593 346h5v1h-5zM603 346h5v1h-5zM613 346h5v1h-5zM623 346h5v1h-5zM633 346h5v1h-5zM643 346h5v1h-5zM653 346h5v1h-5zM663 346h5v1h-5zM673 346h5v1h-5zM683 346h5v1h-5zM693 346h5v1h-5zM703 346h5v1h-5zM713 346h5v1h-5zM723 346h5v1h-5zM733 346h5v1h-5zM743 346h5v1h-5zM753 346h5v1h-5zM763 346h5v1h-5zM773 346h5v1h-5zM783 346h5v1h-5zM793 346h5v1h-5zM803 346h5v1h-5zM813 346h5v1h-5zM823 346h5v1h-5zM833 346h5v1h-5zM843 346h5v1h-5zM853 346h5v1h-5zM863 346h5v1h-5zM873 346h5v1h-5zM883 346h5v1h-5zM893 346h5v1h-5zM903 346h5v1h-5zM913 346h5v1h-5zM923 346h5v1h-5zM933 346h5v1h-5zM943 346h5v1h-5zM953 346h5v1h-5zM963 346h5v1h-5zM973 346h5v1h-5zM983 346h5v1h-5zM993 346h5v1h-5zM1003 346h5v1h-5zM1013 346h5v1h-5zM1023 346h5v1h-5zM1033 346h5v1h-5zM1043 346h5v1h-5zM1053 346h5v1h-5zM1063 346h5v1h-5zM1073 346h5v1h-5zM1083 346h5v1h-5zM1093 346h5v1h-5zM1103 346h5v1h-5zM1113 346h5v1h-5zM1123 346h5v1h-5zM1133 346h5v1h-5zM1143 346h5v1h-5zM1153 346h5v1h-5zM1163 346h5v1h-5zM1173 346h5v1h-5zM1183 346h5v1h-5zM1193 346h5v1h-5zM1203 346h5v1h-5zM1213 346h5v1h-5zM1223 346h5v1h-5zM1233 346h5v1h-5zM1243 346h5v1h-5zM1253 346h5v1h-5zM1263 346h5v1h-5zM1273 346h5v1h-5zM1283 346h5v1h-5zM1293 346h5v1h-5zM1303 346h5v1h-5zM1313 346h5v1h-5zM1323 346h5v1h-5zM1333 346h5v1h-5zM1343 346h5v1h-5zM1353 346h5v1h-5zM1363 346h5v1h-5zM1373 346h5v1h-5zM1383 346h5v1h-5zM1393 346h5v1h-5zM1403 346h5v1h-5zM1413 346h5v1h-5zM1423 346h5v1h-5zM1433 346h5v1h-5zM1443 346h5v1h-5zM1453 346h5v1h-5zM1463 346h5v1h-5zM1473 346h5v1h-5zM1483 346h5v1h-5zM1493 346h5v1h-5zM1503 346h5v1h-5zM1513 346h5v1h-5zM1523 346h5v1h-5zM1533 346h5v1h-5zM1543 346h5v1h-5zM1553 346h5v1h-5zM1563 346h5v1h-5zM1573 346h5v1h-5zM1583 346h5v1h-5zM1593 346h5v1h-5zM1603 346h5v1h-5zM1613 346h5v1h-5zM1623 346h5v1h-5zM1633 346h5v1h-5zM1643 346h5v1h-5zM1653 346h5v1h-5zM1663 346h5v1h-5zM1673 346h5v1h-5zM1683 346h5v1h-5zM1693 346h5v1h-5zM1703 346h5v1h-5zM1713 346h5v1h-5z" fill="#c4c4c4" shape-rendering="crispEdges"/>
<path d="M3 407h5v1h-5zM13 407h5v1h-5zM23 407h5v1h-5zM33 407h5v1h-5zM43 407h5v1h-5zM53 407h5v1h-5zM63 407h5v1h-5zM73 407h5v1h-5zM83 407h5v1h-5zM93 407h5v1h-5zM103 407h5v1h-5zM113 407h5v1h-5zM123 407h5v1h-5zM133 407h5v1h-5zM143 407h5v1h-5zM153 407h5v1h-5zM163 407h5v1h-5zM173 407h5v1h-5zM183 407h5v1h-5zM193 407h5v1h-5zM203 407h5v1h-5zM213 407h5v1h-5zM223 407h5v1h-5zM233 407h5v1h-5zM243 407h5v1h-5zM253 407h5v1h-5zM263 407h5v1h-5zM273 407h5v1h-5zM283 407h5v1h-5zM293 407h5v1h-5zM303 407h5v1h-5zM313 407h5v1h-5zM323 407h5v1h-5zM333 407h5v1h-5zM343 407h5v1h-5zM353 407h5v1h-5zM363 407h5v1h-5zM373 407h5v1h-5zM383 407h5v1h-5zM393 407h5v1h-5zM403 407h5v1h-5zM413 407h5v1h-5zM423 407h5v1h-5zM433 407h5v1h-5zM443 407h5v1h-5zM453 407h5v1h-5zM463 407h5v1h-5zM473 407h5v1h-5zM483 407h5v1h-5zM493 407h5v1h-5zM503 407h5v1h-5zM513 407h5v1h-5zM523 407h5v1h-5zM533 407h5v1h-5zM543 407h5v1h-5zM553 407h5v1h-5zM563 407h5v1h-5zM573 407h5v1h-5zM583 407h5v1h-5zM593 407h5v1h-5zM603 407h5v1h-5zM613 407h5v1h-5zM623 407h5v1h-5zM633 407h5v1h-5zM643 407h5v1h-5zM653 407h5v1h-5zM663 407h5v1h-5zM673 407h5v1h-5zM683 407h5v1h-5zM693 407h5v1h-5zM703 407h5v1h-5zM713 407h5v1h-5zM723 407h5v1h-5zM733 407h5v1h-5zM743 407h5v1h-5zM753 407h5v1h-5zM763 407h5v1h-5zM773 407h5v1h-5zM783 407h5v1h-5zM793 407h5v1h-5zM803 407h5v1h-5zM813 407h5v1h-5zM823 407h5v1h-5zM833 407h5v1h-5zM843 407h5v1h-5zM853 407h5v1h-5zM863 407h5v1h-5zM873 407h5v1h-5zM883 407h5v1h-5zM893 407h5v1h-5zM903 407h5v1h-5zM913 407h5v1h-5zM923 407h5v1h-5zM933 407h5v1h-5zM943 407h5v1h-5zM953 407h5v1h-5zM963 407h5v1h-5zM973 407h5v1h-5zM983 407h5v1h-5zM993 407h5v1h-5zM1003 407h5v1h-5zM1013 407h5v1h-5zM1023 407h5v1h-5zM1033 407h5v1h-5zM1043 407h5v1h-5zM1053 407h5v1h-5zM1063 407h5v1h-5zM1073 407h5v1h-5zM1083 407h5v1h-5zM1093 407h5v1h-5zM1103 407h5v1h-5zM1113 407h5v1h-5zM1123 407h5v1h-5zM1133 407h5v1h-5zM1143 407h5v1h-5zM1153 407h5v1h-5zM1163 407h5v1h-5zM1173 407h5v1h-5zM1183 407h5v1h-5zM1193 407h5v1h-5zM1203 407h5v1h-5zM1213 407h5v1h-5zM1223 407h5v1h-5zM1233 407h5v1h-5zM1243 407h5v1h-5zM1253 407h5v1h-5zM1263 407h5v1h-5zM1273 407h5v1h-5zM1283 407h5v1h-5zM1293 407h5v1h-5zM1303 407h5v1h-5zM1313 407h5v1h-5zM1323 407h5v1h-5zM1333 407h5v1h-5zM1343 407h5v1h-5zM1353 407h5v1h-5zM1363 407h5v1h-5zM1373 407h5v1h-5zM1383 407h5v1h-5zM1393 407h5v1h-5zM1403 407h5v1h-5zM1413 407h5v1h-5zM1423 407h5v1h-5zM1433 407h5v1h-5zM1443 407h5v1h-5zM1453 407h5v1h-5zM1463 407h5v1h-5zM1473 407h5v1h-5zM1483 407h5v1h-5zM1493 407h5v1h-5zM1503 407h5v1h-5zM1513 407h5v1h-5zM1523 407h5v1h-5zM1533 407h5v1h-5zM1543 407h5v1h-5zM1553 407h5v1h-5zM1563 407h5v1h-5zM1573 407h5v1h-5zM1583 407h5v1h-5zM1593 407h5v1h-5zM1603 407h5v1h-5zM1613 407h5v1h-5zM1623 407h5v1h-5zM1633 407h5v1h-5zM1643 407h5v1h-5zM1653 407h5v1h-5zM1663 407h5v1h-5zM1673 407h5v1h-5zM1683 407h5v1h-5zM1693 407h5v1h-5zM1703 407h5v1h-5zM1713 407h5v1h-5zM1723 407h5v1h-5zM1733 407h5v1h-5zM1743 407h5v1h-5z" fill="#c4c4c4" shape-rendering="crispEdges"/>
<path d="M3 534h5v1h-5zM13 534h5v1h-5zM23 534h5v1h-5zM33 534h5v1h-5zM43 534h5v1h-5zM53 534h5v1h-5zM63 534h5v1h-5zM73 534h5v1h-5zM83 534h5v1h-5zM93 534h5v1h-5zM103 534h5v1h-5zM113 534h5v1h-5zM123 534h5v1h-5zM133 534h5v1h-5zM143 534h5v1h-5zM153 534h5v1h-5zM163 534h5v1h-5zM173 534h5v1h-5zM183 534h5v1h-5zM193 534h5v1h-5zM203 534h5v1h-5zM213 534h5v1h-5zM223 534h5v1h-5zM233 534h5v1h-5zM243 534h5v1h-5zM253 534h5v1h-5zM263 534h5v1h-5zM273 534h5v1h-5zM283 534h5v1h-5zM293 534h5v1h-5zM303 534h5v1h-5zM313 534h5v1h-5zM323 534h5v1h-5zM333 534h5v1h-5zM343 534h5v1h-5zM353 534h5v1h-5zM363 534h5v1h-5zM373 534h5v1h-5zM383 534h5v1h-5zM393 534h5v1h-5zM403 534h5v1h-5zM413 534h5v1h-5zM423 534h5v1h-5zM433 534h5v1h-5zM443 534h5v1h-5zM453 534h5v1h-5zM463 534h5v1h-5zM473 534h5v1h-5zM483 534h5v1h-5zM493 534h5v1h-5zM503 534h5v1h-5zM513 534h5v1h-5zM523 534h5v1h-5zM533 534h5v1h-5zM543 534h5v1h-5zM553 534h5v1h-5zM563 534h5v1h-5zM573 534h5v1h-5zM583 534h5v1h-5zM593 534h5v1h-5zM603 534h5v1h-5zM613 534h5v1h-5zM623 534h5v1h-5zM633 534h5v1h-5zM643 534h5v1h-5zM653 534h5v1h-5zM663 534h5v1h-5zM673 534h5v1h-5zM683 534h5v1h-5zM693 534h5v1h-5zM703 534h5v1h-5zM713 534h5v1h-5zM723 534h5v1h-5zM733 534h5v1h-5zM743 534h5v1h-5zM753 534h5v1h-5zM763 534h5v1h-5zM773 534h5v1h-5zM783 534h5v1h-5zM793 534h5v1h-5zM803 534h5v1h-5zM813 534h5v1h-5zM823 534h5v1h-5zM833 534h5v1h-5zM843 534h5v1h-5zM853 534h5v1h-5zM863 534h5v1h-5zM873 534h5v1h-5zM883 534h5v1h-5zM893 534h5v1h-5zM903 534h5v1h-5zM913 534h5v1h-5zM923 534h5v1h-5zM933 534h5v1h-5zM943 534h5v1h-5zM953 534h5v1h-5zM963 534h5v1h-5zM973 534h5v1h-5zM983 534h5v1h-5zM993 534h5v1h-5zM1003 534h5v1h-5zM1013 534h5v1h-5zM1023 534h5v1h-5zM1033 534h5v1h-5zM1043 534h5v1h-5zM1053 534h5v1h-5zM1063 534h5v1h-5zM1073 534h5v1h-5zM1083 534h5v1h-5zM1093 534h5v1h-5zM1103 534h5v1h-5zM1113 534h5v1h-5zM1123 534h5v1h-5zM1133 534h5v1h-5zM1143 534h5v1h-5zM1153 534h5v1h-5zM1163 534h5v1h-5zM1173 534h5v1h-5zM1183 534h5v1h-5zM1193 534h5v1h-5zM1203 534h5v1h-5zM1213 534h5v1h-5zM1223 534h5v1h-5zM1233 534h5v1h-5zM1243 534h5v1h-5zM1253 534h5v1h-5zM1263 534h5v1h-5zM1273 534h5v1h-5zM1283 534h5v1h-5zM1293 534h5v1h-5zM1303 534h5v1h-5zM1313 534h5v1h-5zM1323 534h5v1h-5zM1333 534h5v1h-5zM1343 534h5v1h-5zM1353 534h5v1h-5zM1363 534h5v1h-5zM1373 534h5v1h-5zM1383 534h5v1h-5zM1393 534h5v1h-5zM1403 534h5v1h-5zM1413 534h5v1h-5zM1423 534h5v1h-5zM1433 534h5v1h-5zM1443 534h5v1h-5zM1453 534h5v1h-5zM1463 534h5v1h-5zM1473 534h5v1h-5zM1483 534h5v1h-5zM1493 534h5v1h-5zM1503 534h5v1h-5zM1513 534h5v1h-5zM1523 534h5v1h-5zM1533 534h5v1h-5zM1543 534h5v1h-5zM1553 534h5v1h-5zM1563 534h5v1h-5zM1573 534h5v1h-5zM1583 534h5v1h-5zM1593 534h5v1h-5zM1603 534h5v1h-5zM1613 534h5v1h-5zM1623 534h5v1h-5zM1633 534h5v1h-5zM1643 534h5v1h-5zM1653 534h5v1h-5zM1663 534h5v1h-5zM1673 534h5v1h-5zM1683 534h5v1h-5zM1693 534h5v1h-5zM1703 534h5v1h-5zM1713 534h5v1h-5z" fill="#c4c4c4" shape-rendering="crispEdges"/>
<path d="M3 697h5v1h-5zM13 697h5v1h-5zM23 697h5v1h-5zM33 697h5v1h-5zM43 697h5v1h-5zM53 697h5v1h-5zM63 697h5v1h-5zM73 697h5v1h-5zM83 697h5v1h-5zM93 697h5v1h-5zM103 697h5v1h-5zM113 697h5v1h-5zM123 697h5v1h-5zM133 697h5v1h-5zM143 697h5v1h-5zM153 697h5v1h-5zM163 697h5v1h-5zM173 697h5v1h-5zM183 697h5v1h-5zM193 697h5v1h-5zM203 697h5v1h-5zM213 697h5v1h-5zM223 697h5v1h-5zM233 697h5v1h-5zM243 697h5v1h-5zM253 697h5v1h-5zM263 697h5v1h-5zM273 697h5v1h-5zM283 697h5v1h-5zM293 697h5v1h-5zM303 697h5v1h-5zM313 697h5v1h-5zM323 697h5v1h-5zM333 697h5v1h-5zM343 697h5v1h-5zM353 697h5v1h-5zM363 697h5v1h-5zM373 697h5v1h-5zM383 697h5v1h-5zM393 697h5v1h-5zM403 697h5v1h-5zM413 697h5v1h-5zM423 697h5v1h-5zM433 697h5v1h-5zM443 697h5v1h-5zM453 697h5v1h-5zM463 697h5v1h-5zM473 697h5v1h-5zM483 697h5v1h-5zM493 697h5v1h-5zM503 697h5v1h-5zM513 697h5v1h-5zM523 697h5v1h-5zM533 697h5v1h-5zM543 697h5v1h-5zM553 697h5v1h-5zM563 697h5v1h-5zM573 697h5v1h-5zM583 697h5v1h-5zM593 697h5v1h-5zM603 697h5v1h-5zM613 697h5v1h-5zM623 697h5v1h-5zM633 697h5v1h-5zM643 697h5v1h-5zM653 697h5v1h-5zM663 697h5v1h-5zM673 697h5v1h-5zM683 697h5v1h-5zM693 697h5v1h-5zM703 697h5v1h-5zM713 697h5v1h-5zM723 697h5v1h-5zM733 697h5v1h-5zM743 697h5v1h-5zM753 697h5v1h-5zM763 697h5v1h-5zM773 697h5v1h-5zM783 697h5v1h-5zM793 697h5v1h-5zM803 697h5v1h-5zM813 697h5v1h-5zM823 697h5v1h-5zM833 697h5v1h-5zM843 697h5v1h-5zM853 697h5v1h-5zM863 697h5v1h-5zM873 697h5v1h-5zM883 697h5v1h-5zM893 697h5v1h-5zM903 697h5v1h-5zM913 697h5v1h-5zM923 697h5v1h-5zM933 697h5v1h-5zM943 697h5v1h-5zM953 697h5v1h-5zM963 697h5v1h-5zM973 697h5v1h-5zM983 697h5v1h-5zM993 697h5v1h-5zM1003 697h5v1h-5zM1013 697h5v1h-5zM1023 697h5v1h-5zM1033 697h5v1h-5zM1043 697h5v1h-5zM1053 697h5v1h-5zM1063 697h5v1h-5zM1073 697h5v1h-5zM1083 697h5v1h-5zM1093 697h5v1h-5zM1103 697h5v1h-5zM1113 697h5v1h-5zM1123 697h5v1h-5zM1133 697h5v1h-5zM1143 697h5v1h-5zM1153 697h5v1h-5zM1163 697h5v1h-5zM1173 697h5v1h-5zM1183 697h5v1h-5zM1193 697h5v1h-5zM1203 697h5v1h-5zM1213 697h5v1h-5zM1223 697h5v1h-5zM1233 697h5v1h-5zM1243 697h5v1h-5zM1253 697h5v1h-5zM1263 697h5v1h-5zM1273 697h5v1h-5zM1283 697h5v1h-5zM1293 697h5v1h-5zM1303 697h5v1h-5zM1313 697h5v1h-5zM1323 697h5v1h-5zM1333 697h5v1h-5zM1343 697h5v1h-5zM1353 697h5v1h-5zM1363 697h5v1h-5zM1373 697h5v1h-5zM1383 697h5v1h-5zM1393 697h5v1h-5zM1403 697h5v1h-5zM1413 697h5v1h-5zM1423 697h5v1h-5zM1433 697h5v1h-5zM1443 697h5v1h-5zM1453 697h5v1h-5zM1463 697h5v1h-5zM1473 697h5v1h-5zM1483 697h5v1h-5zM1493 697h5v1h-5zM1503 697h5v1h-5zM1513 697h5v1h-5zM1523 697h5v1h-5zM1533 697h5v1h-5zM1543 697h5v1h-5zM1553 697h5v1h-5zM1563 697h5v1h-5zM1573 697h5v1h-5zM1583 697h5v1h-5zM1593 697h5v1h-5zM1603 697h5v1h-5zM1613 697h5v1h-5zM1623 697h5v1h-5zM1633 697h5v1h-5zM1643 697h5v1h-5zM1653 697h5v1h-5zM1663 697h5v1h-5zM1673 697h5v1h-5zM1683 697h5v1h-5zM1693 697h5v1h-5zM1703 697h5v1h-5zM1713 697h5v1h-5z" fill="#c4c4c4" shape-rendering="crispEdges"/>
<path d="M3 814h5v1h-5zM13 814h5v1h-5zM23 814h5v1h-5zM33 814h5v1h-5zM43 814h5v1h-5zM53 814h5v1h-5zM63 814h5v1h-5zM73 814h5v1h-5zM83 814h5v1h-5zM93 814h5v1h-5zM103 814h5v1h-5zM113 814h5v1h-5zM123 814h5v1h-5zM133 814h5v1h-5zM143 814h5v1h-5zM153 814h5v1h-5zM163 814h5v1h-5zM173 814h5v1h-5zM183 814h5v1h-5zM193 814h5v1h-5zM203 814h5v1h-5zM213 814h5v1h-5zM223 814h5v1h-5zM233 814h5v1h-5zM243 814h5v1h-5zM253 814h5v1h-5zM263 814h5v1h-5zM273 814h5v1h-5zM283 814h5v1h-5zM293 814h5v1h-5zM303 814h5v1h-5zM313 814h5v1h-5zM323 814h5v1h-5zM333 814h5v1h-5zM343 814h5v1h-5zM353 814h5v1h-5zM363 814h5v1h-5zM373 814h5v1h-5zM383 814h5v1h-5zM393 814h5v1h-5zM403 814h5v1h-5zM413 814h5v1h-5zM423 814h5v1h-5zM433 814h5v1h-5zM443 814h5v1h-5zM453 814h5v1h-5zM463 814h5v1h-5zM473 814h5v1h-5zM483 814h5v1h-5zM493 814h5v1h-5zM503 814h5v1h-5zM513 814h5v1h-5zM523 814h5v1h-5zM533 814h5v1h-5zM543 814h5v1h-5zM553 814h5v1h-5zM563 814h5v1h-5zM573 814h5v1h-5zM583 814h5v1h-5zM593 814h5v1h-5zM603 814h5v1h-5zM613 814h5v1h-5zM623 814h5v1h-5zM633 814h5v1h-5zM643 814h5v1h-5zM653 814h5v1h-5zM663 814h5v1h-5zM673 814h5v1h-5zM683 814h5v1h-5zM693 814h5v1h-5zM703 814h5v1h-5zM713 814h5v1h-5zM723 814h5v1h-5zM733 814h5v1h-5zM743 814h5v1h-5zM753 814h5v1h-5zM763 814h5v1h-5zM773 814h5v1h-5zM783 814h5v1h-5zM793 814h5v1h-5zM803 814h5v1h-5zM813 814h5v1h-5zM823 814h5v1h-5zM833 814h5v1h-5zM843 814h5v1h-5zM853 814h5v1h-5zM863 814h5v1h-5zM873 814h5v1h-5zM883 814h5v1h-5zM893 814h5v1h-5zM903 814h5v1h-5zM913 814h5v1h-5zM923 814h5v1h-5zM933 814h5v1h-5zM943 814h5v1h-5zM953 814h5v1h-5zM963 814h5v1h-5zM973 814h5v1h-5zM983 814h5v1h-5zM993 814h5v1h-5zM1003 814h5v1h-5zM1013 814h5v1h-5zM1023 814h5v1h-5zM1033 814h5v1h-5zM1043 814h5v1h-5zM1053 814h5v1h-5zM1063 814h5v1h-5zM1073 814h5v1h-5zM1083 814h5v1h-5zM1093 814h5v1h-5zM1103 814h5v1h-5zM1113 814h5v1h-5zM1123 814h5v1h-5zM1133 814h5v1h-5zM1143 814h5v1h-5zM1153 814h5v1h-5zM1163 814h5v1h-5zM1173 814h5v1h-5zM1183 814h5v1h-5zM1193 814h5v1h-5zM1203 814h5v1h-5zM1213 814h5v1h-5zM1223 814h5v1h-5zM1233 814h5v1h-5zM1243 814h5v1h-5zM1253 814h5v1h-5zM1263 814h5v1h-5zM1273 814h5v1h-5zM1283 814h5v1h-5zM1293 814h5v1h-5zM1303 814h5v1h-5zM1313 814h5v1h-5zM1323 814h5v1h-5zM1333 814h5v1h-5zM1343 814h5v1h-5zM1353 814h5v1h-5zM1363 814h5v1h-5zM1373 814h5v1h-5zM1383 814h5v1h-5zM1393 814h5v1h-5zM1403 814h5v1h-5zM1413 814h5v1h-5zM1423 814h5v1h-5zM1433 814h5v1h-5zM1443 814h5v1h-5zM1453 814h5v1h-5zM1463 814h5v1h-5zM1473 814h5v1h-5zM1483 814h5v1h-5zM1493 814h5v1h-5zM1503 814h5v1h-5zM1513 814h5v1h-5zM1523 814h5v1h-5zM1533 814h5v1h-5zM1543 814h5v1h-5zM1553 814h5v1h-5zM1563 814h5v1h-5zM1573 814h5v1h-5zM1583 814h5v1h-5zM1593 814h5v1h-5zM1603 814h5v1h-5zM1613 814h5v1h-5zM1623 814h5v1h-5zM1633 814h5v1h-5zM1643 814h5v1h-5zM1653 814h5v1h-5zM1663 814h5v1h-5zM1673 814h5v1h-5zM1683 814h5v1h-5zM1693 814h5v1h-5zM1703 814h5v1h-5zM1713 814h5v1h-5z" fill="#c4c4c4" shape-rendering="crispEdges"/>
<path d="M3 933h5v1h-5zM13 933h5v1h-5zM23 933h5v1h-5zM33 933h5v1h-5zM43 933h5v1h-5zM53 933h5v1h-5zM63 933h5v1h-5zM73 933h5v1h-5zM83 933h5v1h-5zM93 933h5v1h-5zM103 933h5v1h-5zM113 933h5v1h-5zM123 933h5v1h-5zM133 933h5v1h-5zM143 933h5v1h-5zM153 933h5v1h-5zM163 933h5v1h-5zM173 933h5v1h-5zM183 933h5v1h-5zM193 933h5v1h-5zM203 933h5v1h-5zM213 933h5v1h-5zM223 933h5v1h-5zM233 933h5v1h-5zM243 933h5v1h-5zM253 933h5v1h-5zM263 933h5v1h-5zM273 933h5v1h-5zM283 933h5v1h-5zM293 933h5v1h-5zM303 933h5v1h-5zM313 933h5v1h-5zM323 933h5v1h-5zM333 933h5v1h-5zM343 933h5v1h-5zM353 933h5v1h-5zM363 933h5v1h-5zM373 933h5v1h-5zM383 933h5v1h-5zM393 933h5v1h-5zM403 933h5v1h-5zM413 933h5v1h-5zM423 933h5v1h-5zM433 933h5v1h-5zM443 933h5v1h-5zM453 933h5v1h-5zM463 933h5v1h-5zM473 933h5v1h-5zM483 933h5v1h-5zM493 933h5v1h-5zM503 933h5v1h-5zM513 933h5v1h-5zM523 933h5v1h-5zM533 933h5v1h-5zM543 933h5v1h-5zM553 933h5v1h-5zM563 933h5v1h-5zM573 933h5v1h-5zM583 933h5v1h-5zM593 933h5v1h-5zM603 933h5v1h-5zM613 933h5v1h-5zM623 933h5v1h-5zM633 933h5v1h-5zM643 933h5v1h-5zM653 933h5v1h-5zM663 933h5v1h-5zM673 933h5v1h-5zM683 933h5v1h-5zM693 933h5v1h-5zM703 933h5v1h-5zM713 933h5v1h-5zM723 933h5v1h-5zM733 933h5v1h-5zM743 933h5v1h-5zM753 933h5v1h-5zM763 933h5v1h-5zM773 933h5v1h-5zM783 933h5v1h-5zM793 933h5v1h-5zM803 933h5v1h-5zM813 933h5v1h-5zM823 933h5v1h-5zM833 933h5v1h-5zM843 933h5v1h-5zM853 933h5v1h-5zM863 933h5v1h-5zM873 933h5v1h-5zM883 933h5v1h-5zM893 933h5v1h-5zM903 933h5v1h-5zM913 933h5v1h-5zM923 933h5v1h-5zM933 933h5v1h-5zM943 933h5v1h-5zM953 933h5v1h-5zM963 933h5v1h-5zM973 933h5v1h-5zM983 933h5v1h-5zM993 933h5v1h-5zM1003 933h5v1h-5zM1013 933h5v1h-5zM1023 933h5v1h-5zM1033 933h5v1h-5zM1043 933h5v1h-5zM1053 933h5v1h-5zM1063 933h5v1h-5zM1073 933h5v1h-5zM1083 933h5v1h-5zM1093 933h5v1h-5zM1103 933h5v1h-5zM1113 933h5v1h-5zM1123 933h5v1h-5zM1133 933h5v1h-5zM1143 933h5v1h-5zM1153 933h5v1h-5zM1163 933h5v1h-5zM1173 933h5v1h-5zM1183 933h5v1h-5zM1193 933h5v1h-5zM1203 933h5v1h-5zM1213 933h5v1h-5zM1223 933h5v1h-5zM1233 933h5v1h-5zM1243 933h5v1h-5zM1253 933h5v1h-5zM1263 933h5v1h-5zM1273 933h5v1h-5zM1283 933h5v1h-5zM1293 933h5v1h-5zM1303 933h5v1h-5zM1313 933h5v1h-5zM1323 933h5v1h-5zM1333 933h5v1h-5zM1343 933h5v1h-5zM1353 933h5v1h-5zM1363 933h5v1h-5zM1373 933h5v1h-5zM1383 933h5v1h-5zM1393 933h5v1h-5zM1403 933h5v1h-5zM1413 933h5v1h-5zM1423 933h5v1h-5zM1433 933h5v1h-5zM1443 933h5v1h-5zM1453 933h5v1h-5zM1463 933h5v1h-5zM1473 933h5v1h-5zM1483 933h5v1h-5zM1493 933h5v1h-5zM1503 933h5v1h-5zM1513 933h5v1h-5zM1523 933h5v1h-5zM1533 933h5v1h-5zM1543 933h5v1h-5zM1553 933h5v1h-5zM1563 933h5v1h-5zM1573 933h5v1h-5zM1583 933h5v1h-5zM1593 933h5v1h-5zM1603 933h5v1h-5zM1613 933h5v1h-5zM1623 933h5v1h-5zM1633 933h5v1h-5zM1643 933h5v1h-5zM1653 933h5v1h-5zM1663 933h5v1h-5zM1673 933h5v1h-5zM1683 933h5v1h-5zM1693 933h5v1h-5zM1703 933h5v1h-5zM1713 933h5v1h-5z" fill="#c4c4c4" shape-rendering="crispEdges"/>
<path d="M9.5 99.5H30L42 112L30 124.5H9.5Q6.5 124.5 6.5 121.5V102.5Q6.5 99.5 9.5 99.5Z" fill="#201d08" stroke="#f2e62e" stroke-width="1.3" stroke-linejoin="round"/>
<text x="14.6" y="114.8" font-size="11.5" fill="#f2e62e" textLength="17.2" lengthAdjust="spacing">C1</text>
<path d="M9.5 216.5H30L42 229L30 241.5H9.5Q6.5 241.5 6.5 238.5V219.5Q6.5 216.5 9.5 216.5Z" fill="#071416" stroke="#22cbd9" stroke-width="1.3" stroke-linejoin="round"/>
<text x="14.6" y="231.8" font-size="11.5" fill="#22cbd9" textLength="17.2" lengthAdjust="spacing">C2</text>
<path d="M9.5 333.5H30L42 346L30 358.5H9.5Q6.5 358.5 6.5 355.5V336.5Q6.5 333.5 9.5 333.5Z" fill="#1a090c" stroke="#e9455c" stroke-width="1.3" stroke-linejoin="round"/>
<text x="14.6" y="348.8" font-size="11.5" fill="#e9455c" textLength="17.2" lengthAdjust="spacing">C3</text>
<path d="M9.5 450.5H30L42 463L30 475.5H9.5Q6.5 475.5 6.5 472.5V453.5Q6.5 450.5 9.5 450.5Z" fill="#0f1a07" stroke="#8fd230" stroke-width="1.3" stroke-linejoin="round"/>
<text x="14.6" y="465.8" font-size="11.5" fill="#8fd230" textLength="17.2" lengthAdjust="spacing">C4</text>
<path d="M9.5 567.5H30L42 580L30 592.5H9.5Q6.5 592.5 6.5 589.5V570.5Q6.5 567.5 9.5 567.5Z" fill="#180f06" stroke="#f7952e" stroke-width="1.3" stroke-linejoin="round"/>
<text x="14.6" y="582.8" font-size="11.5" fill="#f7952e" textLength="17.2" lengthAdjust="spacing">C5</text>
<path d="M9.5 684.5H30L42 697L30 709.5H9.5Q6.5 709.5 6.5 706.5V687.5Q6.5 684.5 9.5 684.5Z" fill="#08081e" stroke="#3434d4" stroke-width="1.3" stroke-linejoin="round"/>
<text x="14.6" y="699.8" font-size="11.5" fill="#3434d4" textLength="17.2" lengthAdjust="spacing">C6</text>
<path d="M9.5 801.5H30L42 814L30 826.5H9.5Q6.5 826.5 6.5 823.5V804.5Q6.5 801.5 9.5 801.5Z" fill="#1a0914" stroke="#de46a9" stroke-width="1.3" stroke-linejoin="round"/>
<text x="14.6" y="816.8" font-size="11.5" fill="#de46a9" textLength="17.2" lengthAdjust="spacing">C7</text>
<path d="M9.5 919.5H30L42 932L30 944.5H9.5Q6.5 944.5 6.5 941.5V922.5Q6.5 919.5 9.5 919.5Z" fill="#00d898" stroke="#00d898" stroke-width="1.5"/>
<text x="14.6" y="934.8" font-size="11.5" fill="#0a2a22" textLength="17.2" lengthAdjust="spacing">C8</text>
<text x="1745" y="70.3" font-size="13" fill="#f2e62e" stroke="#f2e62e" stroke-width="0.25" text-anchor="end">16 V</text><text x="1745" y="93.5" font-size="13" fill="#f2e62e" stroke="#f2e62e" stroke-width="0.25" text-anchor="end">8 V</text><text x="1745" y="116.7" font-size="13" fill="#f2e62e" stroke="#f2e62e" stroke-width="0.25" text-anchor="end">0 V</text><text x="1745" y="139.9" font-size="13" fill="#f2e62e" stroke="#f2e62e" stroke-width="0.25" text-anchor="end">-8 V</text><text x="1745" y="163.1" font-size="13" fill="#f2e62e" stroke="#f2e62e" stroke-width="0.25" text-anchor="end">-16 V</text><text x="1745" y="187.3" font-size="13" fill="#22cbd9" stroke="#22cbd9" stroke-width="0.25" text-anchor="end">200 mV</text><text x="1745" y="210.5" font-size="13" fill="#22cbd9" stroke="#22cbd9" stroke-width="0.25" text-anchor="end">100 mV</text><text x="1745" y="233.7" font-size="13" fill="#22cbd9" stroke="#22cbd9" stroke-width="0.25" text-anchor="end">0 V</text><text x="1745" y="256.9" font-size="13" fill="#22cbd9" stroke="#22cbd9" stroke-width="0.25" text-anchor="end">-100 mV</text><text x="1745" y="280.1" font-size="13" fill="#22cbd9" stroke="#22cbd9" stroke-width="0.25" text-anchor="end">-200 mV</text><text x="1745" y="304.3" font-size="13" fill="#e9455c" stroke="#e9455c" stroke-width="0.25" text-anchor="end">400 mV</text><text x="1745" y="327.5" font-size="13" fill="#e9455c" stroke="#e9455c" stroke-width="0.25" text-anchor="end">200 mV</text><text x="1745" y="350.7" font-size="13" fill="#e9455c" stroke="#e9455c" stroke-width="0.25" text-anchor="end">0 V</text><text x="1745" y="373.9" font-size="13" fill="#e9455c" stroke="#e9455c" stroke-width="0.25" text-anchor="end">-200 mV</text><text x="1745" y="397.1" font-size="13" fill="#e9455c" stroke="#e9455c" stroke-width="0.25" text-anchor="end">-400 mV</text><text x="1745" y="423.7" font-size="13" fill="#8fd230" stroke="#8fd230" stroke-width="0.25" text-anchor="end">-50 mV</text><text x="1745" y="446.9" font-size="13" fill="#8fd230" stroke="#8fd230" stroke-width="0.25" text-anchor="end">-150 mV</text><text x="1745" y="470.1" font-size="13" fill="#8fd230" stroke="#8fd230" stroke-width="0.25" text-anchor="end">-250 mV</text><text x="1745" y="493.3" font-size="13" fill="#8fd230" stroke="#8fd230" stroke-width="0.25" text-anchor="end">-350 mV</text><text x="1745" y="516.5" font-size="13" fill="#8fd230" stroke="#8fd230" stroke-width="0.25" text-anchor="end">-450 mV</text><text x="1745" y="538.3" font-size="13" fill="#f7952e" stroke="#f7952e" stroke-width="0.25" text-anchor="end">0 V</text><text x="1745" y="561.5" font-size="13" fill="#f7952e" stroke="#f7952e" stroke-width="0.25" text-anchor="end">-100 mV</text><text x="1745" y="584.7" font-size="13" fill="#f7952e" stroke="#f7952e" stroke-width="0.25" text-anchor="end">-200 mV</text><text x="1745" y="607.9" font-size="13" fill="#f7952e" stroke="#f7952e" stroke-width="0.25" text-anchor="end">-300 mV</text><text x="1745" y="631.1" font-size="13" fill="#f7952e" stroke="#f7952e" stroke-width="0.25" text-anchor="end">-400 mV</text><text x="1745" y="655.3" font-size="13" fill="#3434d4" stroke="#3434d4" stroke-width="0.25" text-anchor="end">4 V</text><text x="1745" y="678.5" font-size="13" fill="#3434d4" stroke="#3434d4" stroke-width="0.25" text-anchor="end">2 V</text><text x="1745" y="701.7" font-size="13" fill="#3434d4" stroke="#3434d4" stroke-width="0.25" text-anchor="end">0 V</text><text x="1745" y="724.9" font-size="13" fill="#3434d4" stroke="#3434d4" stroke-width="0.25" text-anchor="end">-2 V</text><text x="1745" y="748.1" font-size="13" fill="#3434d4" stroke="#3434d4" stroke-width="0.25" text-anchor="end">-4 V</text><text x="1745" y="772.3" font-size="13" fill="#de46a9" stroke="#de46a9" stroke-width="0.25" text-anchor="end">40 V</text><text x="1745" y="795.5" font-size="13" fill="#de46a9" stroke="#de46a9" stroke-width="0.25" text-anchor="end">20 V</text><text x="1745" y="818.7" font-size="13" fill="#de46a9" stroke="#de46a9" stroke-width="0.25" text-anchor="end">0 V</text><text x="1745" y="841.9" font-size="13" fill="#de46a9" stroke="#de46a9" stroke-width="0.25" text-anchor="end">-20 V</text><text x="1745" y="865.1" font-size="13" fill="#de46a9" stroke="#de46a9" stroke-width="0.25" text-anchor="end">-40 V</text><text x="1745" y="889.0" font-size="13" fill="#00d898" stroke="#00d898" stroke-width="0.25" text-anchor="end">8 V</text><text x="1745" y="913.0" font-size="13" fill="#00d898" stroke="#00d898" stroke-width="0.25" text-anchor="end">4 V</text><text x="1745" y="937.0" font-size="13" fill="#00d898" stroke="#00d898" stroke-width="0.25" text-anchor="end">0 V</text><text x="1745" y="961.0" font-size="13" fill="#00d898" stroke="#00d898" stroke-width="0.25" text-anchor="end">-4 V</text><text x="1745" y="985.0" font-size="13" fill="#00d898" stroke="#00d898" stroke-width="0.25" text-anchor="end">-8 V</text>
<path d="M1708.2 61H1742.5Q1744 61 1744 62.5V96.8Z" fill="#555555"/>
<circle cx="1737" cy="67.3" r="4.1" fill="none" stroke="#a6a6a6" stroke-width="1.5"/>
<path d="M1733.9 70.6L1728.4 76.2" stroke="#a6a6a6" stroke-width="2.6" stroke-linecap="round"/>
<path d="M45 54H65L55.5 63.5Z" fill="#f7941d"/>
<path d="M46.5 874H64V892.5H59L55.5 899L52 892.5H46.5Z" fill="#000" stroke="#f7941d" stroke-width="2"/>
<text x="55.5" y="888.8" font-size="14.5" font-weight="bold" fill="#f7941d" text-anchor="middle">T</text>
<path d="M1730 908.5L1742 898.5V918.5Z" fill="#00d898"/><rect x="1741" y="906.5" width="10" height="4" fill="#00d898"/>
<text x="55.5" y="986.3" font-size="13" fill="#b4b4b4" stroke="#b4b4b4" stroke-width="0.2" text-anchor="middle">0 s</text><text x="230.5" y="986.3" font-size="13" fill="#b4b4b4" stroke="#b4b4b4" stroke-width="0.2" text-anchor="middle">3.5 ms</text><text x="405.5" y="986.3" font-size="13" fill="#b4b4b4" stroke="#b4b4b4" stroke-width="0.2" text-anchor="middle">7 ms</text><text x="580.5" y="986.3" font-size="13" fill="#b4b4b4" stroke="#b4b4b4" stroke-width="0.2" text-anchor="middle">10.5 ms</text><text x="755.5" y="986.3" font-size="13" fill="#b4b4b4" stroke="#b4b4b4" stroke-width="0.2" text-anchor="middle">14 ms</text><text x="929.5" y="986.3" font-size="13" fill="#b4b4b4" stroke="#b4b4b4" stroke-width="0.2" text-anchor="middle">17.5 ms</text><text x="1104.5" y="986.3" font-size="13" fill="#b4b4b4" stroke="#b4b4b4" stroke-width="0.2" text-anchor="middle">21 ms</text><text x="1279.5" y="986.3" font-size="13" fill="#b4b4b4" stroke="#b4b4b4" stroke-width="0.2" text-anchor="middle">24.5 ms</text><text x="1454.5" y="986.3" font-size="13" fill="#b4b4b4" stroke="#b4b4b4" stroke-width="0.2" text-anchor="middle">28 ms</text><text x="1629.5" y="986.3" font-size="13" fill="#b4b4b4" stroke="#b4b4b4" stroke-width="0.2" text-anchor="middle">31.5 ms</text>
<rect x="1769" y="26" width="151" height="969" fill="#2d2d2d"/>
<rect x="1769" y="26" width="1" height="969" fill="#5c5c5c"/><rect x="1918" y="26" width="1" height="969" fill="#5c5c5c"/>
<rect x="1769" y="26" width="150" height="1" fill="#786d65"/><rect x="1769" y="994" width="151" height="1" fill="#786d65"/>
<text x="1844.6" y="40.8" font-size="15" font-weight="bold" fill="#ececec" text-anchor="middle">Add New...</text>
<defs><linearGradient id="btng" x1="0" y1="0" x2="0" y2="1"><stop offset="0" stop-color="#3e3e3e"/><stop offset="0.25" stop-color="#2e2e2e"/><stop offset="0.85" stop-color="#282828"/><stop offset="1" stop-color="#1a1a1a"/></linearGradient>
<linearGradient id="btng2" x1="0" y1="0" x2="0" y2="1"><stop offset="0" stop-color="#444"/><stop offset="0.2" stop-color="#2e2e2e"/><stop offset="0.88" stop-color="#262626"/><stop offset="1" stop-color="#181818"/></linearGradient></defs>
<rect x="1777.5" y="53.5" width="62" height="36" rx="5" fill="url(#btng)" stroke="#6b6058" stroke-width="1"/>
<text x="1808.5" y="75.8" font-size="14.5" fill="#e8e8e8" text-anchor="middle">Cursors</text>
<rect x="1849.5" y="53.5" width="62" height="36" rx="5" fill="url(#btng)" stroke="#6b6058" stroke-width="1"/>
<text x="1880.5" y="75.8" font-size="14.5" fill="#e8e8e8" text-anchor="middle">Note</text>
<rect x="1777.5" y="99.5" width="62" height="36" rx="5" fill="url(#btng)" stroke="#6b6058" stroke-width="1"/>
<text x="1808.5" y="121.8" font-size="14.5" fill="#e8e8e8" text-anchor="middle">Measure</text>
<rect x="1849.5" y="99.5" width="62" height="36" rx="5" fill="url(#btng)" stroke="#6b6058" stroke-width="1"/>
<text x="1880.5" y="121.8" font-size="14.5" fill="#e8e8e8" text-anchor="middle">Search</text>
<rect x="1777.5" y="145.5" width="62" height="36" rx="5" fill="url(#btng)" stroke="#6b6058" stroke-width="1"/>
<rect x="1849.5" y="145.5" width="62" height="36" rx="5" fill="url(#btng)" stroke="#6b6058" stroke-width="1"/>
<text x="1880.5" y="167.8" font-size="14.5" fill="#e8e8e8" text-anchor="middle">Plot</text>
<text x="1808.5" y="160.5" font-size="14.5" fill="#e8e8e8" text-anchor="middle">Results</text>
<text x="1808.5" y="176" font-size="14.5" fill="#e8e8e8" text-anchor="middle">Table</text>
<rect x="1773" y="190" width="144" height="1" fill="#6e645c"/>
<rect x="1773" y="943" width="144" height="1" fill="#6e645c"/>
<rect x="1776.5" y="952.5" width="62" height="36" rx="6" fill="url(#btng)" stroke="#6b6058" stroke-width="1"/>
<path d="M1795 958.5h2v2h-2zM1799 958.5h1.5v1.5h-1.5zM1802.5 958.5h1.5v1.5h-1.5zM1806 958.5h2v2h-2zM1795 963h1.5v1.5h-1.5zM1795 967h1.5v1.5h-1.5zM1795 971.5h2v2h-2zM1799.5 972.5h1.5v1.5h-1.5zM1808 962.5h1.5v1.5h-1.5z" fill="#cfcfcf"/>
<path d="M1812.5 975.5L1818.5 981.5" stroke="#cfcfcf" stroke-width="3.2" stroke-linecap="round"/><path d="M1812.5 975.5L1818.5 981.5" stroke="#3a3a3a" stroke-width="1" stroke-linecap="round"/>
<circle cx="1809.3" cy="972.2" r="5.7" fill="#2e2e2e" stroke="#cfcfcf" stroke-width="1.6"/><circle cx="1809.3" cy="972.2" r="3.7" fill="#8c8c8c"/>
<g fill="none" stroke="#d8d8d8" stroke-width="1.1">
<ellipse cx="1882.5" cy="959.5" rx="13" ry="4"/>
<path d="M1870.5 961.5L1872.5 983Q1882.5 989 1893 983L1895 961.5"/>
<path d="M1871 962.5Q1882.5 967 1894.5 962.5"/>
<path d="M1877 966.5L1878 982M1882.5 967V983M1888 966.5L1887 982"/>
</g>
<rect x="3" y="999" width="90" height="78.5" rx="4" fill="#c8c8c8"/>
<path d="M3 1017.5V1003Q3 999 7 999H89Q93 999 93 1003V1017.5Z" fill="#4a4622"/>
<rect x="3" y="1017.5" width="90" height="3.3" fill="#acacac"/>
<text x="8.8" y="1013" font-size="15" fill="#f2ea2e">Ch 1</text>
<text x="10" y="1035.6" font-size="15.5" fill="#111">4 V/div</text>
<text x="10" y="1055.5" font-size="15.5" fill="#111">1 MΩ</text>
<text x="10" y="1073" font-size="15.5" fill="#111">200 kHz</text>
<text x="76.5" y="1067.5" font-size="9" fill="#111">B</text><text x="81" y="1071" font-size="9" fill="#111">w</text>
<rect x="98" y="999" width="90" height="78.5" rx="4" fill="#c8c8c8"/>
<path d="M98 1017.5V1003Q98 999 102 999H184Q188 999 188 1003V1017.5Z" fill="#1f4448"/>
<rect x="98" y="1017.5" width="90" height="3.3" fill="#acacac"/>
<text x="103.8" y="1013" font-size="15" fill="#22d8e6">Ch 2</text>
<text x="105" y="1035.6" font-size="15.5" fill="#111">50 mV/div</text>
<text x="105" y="1055.5" font-size="15.5" fill="#111">50 Ω</text>
<text x="105" y="1073" font-size="15.5" fill="#111">200 kHz</text>
<text x="171.5" y="1067.5" font-size="9" fill="#111">B</text><text x="176" y="1071" font-size="9" fill="#111">w</text>
<rect x="193" y="999" width="90" height="78.5" rx="4" fill="#c8c8c8"/>
<path d="M193 1017.5V1003Q193 999 197 999H279Q283 999 283 1003V1017.5Z" fill="#4b2529"/>
<rect x="193" y="1017.5" width="90" height="3.3" fill="#acacac"/>
<text x="198.8" y="1013" font-size="15" fill="#f04a62">Ch 3</text>
<text x="200" y="1035.6" font-size="15.5" fill="#111">100 mV/div</text>
<text x="200" y="1055.5" font-size="15.5" fill="#111">50 Ω</text>
<text x="200" y="1073" font-size="15.5" fill="#111">200 kHz</text>
<text x="266.5" y="1067.5" font-size="9" fill="#111">B</text><text x="271" y="1071" font-size="9" fill="#111">w</text>
<rect x="288" y="999" width="90" height="78.5" rx="4" fill="#c8c8c8"/>
<path d="M288 1017.5V1003Q288 999 292 999H374Q378 999 378 1003V1017.5Z" fill="#2e4422"/>
<rect x="288" y="1017.5" width="90" height="3.3" fill="#acacac"/>
<text x="293.8" y="1013" font-size="15" fill="#98dc34">Ch 4</text>
<text x="295" y="1035.6" font-size="15.5" fill="#111">50 mV/div</text>
<text x="295" y="1055.5" font-size="15.5" fill="#111">50 Ω</text>
<text x="295" y="1073" font-size="15.5" fill="#111">200 kHz</text>
<text x="361.5" y="1067.5" font-size="9" fill="#111">B</text><text x="366" y="1071" font-size="9" fill="#111">w</text>
<rect x="383" y="999" width="90" height="78.5" rx="4" fill="#c8c8c8"/>
<path d="M383 1017.5V1003Q383 999 387 999H469Q473 999 473 1003V1017.5Z" fill="#4a3521"/>
<rect x="383" y="1017.5" width="90" height="3.3" fill="#acacac"/>
<text x="388.8" y="1013" font-size="15" fill="#f7962f">Ch 5</text>
<text x="390" y="1035.6" font-size="15.5" fill="#111">50 mV/div</text>
<text x="390" y="1055.5" font-size="15.5" fill="#111">50 Ω</text>
<text x="390" y="1073" font-size="15.5" fill="#111">200 kHz</text>
<text x="456.5" y="1067.5" font-size="9" fill="#111">B</text><text x="461" y="1071" font-size="9" fill="#111">w</text>
<rect x="478" y="999" width="90" height="78.5" rx="4" fill="#c8c8c8"/>
<path d="M478 1017.5V1003Q478 999 482 999H564Q568 999 568 1003V1017.5Z" fill="#1e1e44"/>
<rect x="478" y="1017.5" width="90" height="3.3" fill="#acacac"/>
<text x="483.8" y="1013" font-size="15" fill="#3838d8">Ch 6</text>
<text x="485" y="1035.6" font-size="15.5" fill="#111">1 V/div</text>
<text x="485" y="1055.5" font-size="15.5" fill="#111">50 Ω</text>
<text x="485" y="1073" font-size="15.5" fill="#111">200 kHz</text>
<text x="551.5" y="1067.5" font-size="9" fill="#111">B</text><text x="556" y="1071" font-size="9" fill="#111">w</text>
<rect x="573" y="999" width="90" height="78.5" rx="4" fill="#c8c8c8"/>
<path d="M573 1017.5V1003Q573 999 577 999H659Q663 999 663 1003V1017.5Z" fill="#48253c"/>
<rect x="573" y="1017.5" width="90" height="3.3" fill="#acacac"/>
<text x="578.8" y="1013" font-size="15" fill="#e84cb4">Ch 7</text>
<text x="580" y="1035.6" font-size="15.5" fill="#111">10 V/div</text>
<text x="580" y="1055.5" font-size="15.5" fill="#111">1 MΩ</text>
<text x="580" y="1073" font-size="15.5" fill="#111">200 kHz</text>
<text x="646.5" y="1067.5" font-size="9" fill="#111">B</text><text x="651" y="1071" font-size="9" fill="#111">w</text>
<rect x="668" y="999" width="90" height="78.5" rx="4" fill="#c8c8c8"/>
<path d="M668 1017.5V1003Q668 999 672 999H754Q758 999 758 1003V1017.5Z" fill="#00d898"/>
<rect x="668" y="1017.5" width="90" height="3.3" fill="#acacac"/>
<text x="673.8" y="1013" font-size="15" fill="#111111">Ch 8</text>
<text x="675" y="1035.6" font-size="15.5" fill="#111">2 V/div</text>
<text x="675" y="1055.5" font-size="15.5" fill="#111">1 MΩ</text>
<text x="675" y="1073" font-size="15.5" fill="#111">200 kHz</text>
<text x="741.5" y="1067.5" font-size="9" fill="#111">B</text><text x="746" y="1071" font-size="9" fill="#111">w</text>
<rect x="1119" y="998" width="1" height="79" fill="#5e5e5e"/>
<rect x="1270" y="998" width="1" height="79" fill="#5e5e5e"/>
<rect x="1130.5" y="998.5" width="39" height="78" rx="6" fill="url(#btng2)" stroke="#6b6058" stroke-width="1"/>
<rect x="1134" y="1006" width="32" height="2" fill="#f7941d"/>
<text x="1150" y="1028.8" font-size="15.5" fill="#ececec" text-anchor="middle">Add</text>
<text x="1150" y="1044.7" font-size="15.5" fill="#ececec" text-anchor="middle">New</text>
<text x="1150" y="1060.6" font-size="15.5" fill="#ececec" text-anchor="middle">Math</text>
<rect x="1175.5" y="998.5" width="39" height="78" rx="6" fill="url(#btng2)" stroke="#6b6058" stroke-width="1"/>
<rect x="1179" y="1006" width="32" height="2" fill="#c4c4d4"/>
<text x="1195" y="1028.8" font-size="15.5" fill="#ececec" text-anchor="middle">Add</text>
<text x="1195" y="1044.7" font-size="15.5" fill="#ececec" text-anchor="middle">New</text>
<text x="1195" y="1060.6" font-size="15.5" fill="#ececec" text-anchor="middle">Ref</text>
<rect x="1220.5" y="998.5" width="39" height="78" rx="6" fill="url(#btng2)" stroke="#6b6058" stroke-width="1"/>
<rect x="1224" y="1006" width="32" height="2" fill="#c050f0"/>
<text x="1240" y="1028.8" font-size="15.5" fill="#ececec" text-anchor="middle">Add</text>
<text x="1240" y="1044.7" font-size="15.5" fill="#ececec" text-anchor="middle">New</text>
<text x="1240" y="1060.6" font-size="15.5" fill="#ececec" text-anchor="middle">Bus</text>
<rect x="1281" y="998" width="200" height="79" rx="5" fill="#c8c8c8"/><path d="M1281 1017V1003Q1281 998 1286 998H1476Q1481 998 1481 1003V1017Z" fill="#555658"/><rect x="1281" y="1017" width="200" height="3" fill="#a8a8a8"/><text x="1286.5" y="1012" font-size="15.5" fill="#ececec" textLength="73.5" lengthAdjust="spacingAndGlyphs">Horizontal</text>
<text x="1288.5" y="1035" font-size="15.5" fill="#111">3.5 ms/div</text>
<text x="1394.5" y="1035" font-size="15.5" fill="#111">35 ms</text>
<text x="1288.5" y="1054" font-size="15.5" fill="#111">SR: 1 MS/s</text>
<text x="1394.5" y="1054" font-size="15.5" fill="#111">1 µs/pt</text>
<text x="1288.5" y="1073" font-size="15.5" fill="#111">RL: 35 kpts</text>
<path d="M1394.5 1061.5H1402.5V1069.5H1400L1398.5 1072.5L1397 1069.5H1394.5Z" fill="#000" stroke="#f7941d" stroke-width="1.2"/>
<text x="1398.5" y="1068.5" font-size="7.5" font-weight="bold" fill="#fff" text-anchor="middle">T</text>
<text x="1408.5" y="1073" font-size="15.5" fill="#111">3%</text>
<rect x="1491" y="998" width="160" height="79" rx="5" fill="#c8c8c8"/><path d="M1491 1017V1003Q1491 998 1496 998H1646Q1651 998 1651 1003V1017Z" fill="#555658"/><rect x="1491" y="1017" width="160" height="3" fill="#a8a8a8"/><text x="1496.5" y="1012" font-size="15.5" fill="#ececec" textLength="48.5" lengthAdjust="spacingAndGlyphs">Trigger</text>
<rect x="1498.5" y="1022.5" width="29" height="16" rx="5" fill="#00d898" stroke="#111" stroke-width="1"/>
<text x="1513" y="1035.4" font-size="15.5" fill="#111" stroke="#111" stroke-width="0.3" text-anchor="middle">8</text>
<path d="M1538 1035H1542L1550 1025.5H1554" fill="none" stroke="#3a3a80" stroke-width="1.1"/>
<text x="1564" y="1034.8" font-size="15.5" fill="#111">4 V</text>
<rect x="1661" y="998" width="150" height="79" rx="5" fill="#c8c8c8"/><path d="M1661 1017V1003Q1661 998 1666 998H1806Q1811 998 1811 1003V1017Z" fill="#555658"/><rect x="1661" y="1017" width="150" height="3" fill="#a8a8a8"/><text x="1666.5" y="1012" font-size="15.5" fill="#ececec" textLength="77" lengthAdjust="spacingAndGlyphs">Acquisition</text>
<text x="1668.5" y="1035" font-size="15.5" fill="#111">Manual,</text>
<text x="1746.5" y="1035" font-size="15.5" fill="#111">Analyze</text>
<text x="1668.5" y="1053.7" font-size="15.5" fill="#111">High Res: 16 bits</text>
<text x="1668.5" y="1072.3" font-size="15.5" fill="#111">Single: 1 /1</text>
<rect x="1821.5" y="998.5" width="89" height="35" rx="6" fill="#ff1c24" stroke="#5a5a5a" stroke-width="1"/>
<text x="1865.5" y="1019.2" font-size="13.5" font-weight="bold" fill="#fff" text-anchor="middle">Stopped</text>
<rect x="1821.5" y="1042" width="89.5" height="35.5" rx="6" fill="#c8c8c8"/>
<text x="1866" y="1056.4" font-size="15.5" fill="#111" text-anchor="middle" textLength="81.5" lengthAdjust="spacingAndGlyphs">23 Oct 2025</text>
<text x="1866" y="1073.7" font-size="15.5" fill="#111" text-anchor="middle">11:39:07</text>
<circle cx="1762" cy="501.6" r="2.1" fill="#cdcdcd"/><circle cx="1762" cy="510.2" r="2.1" fill="#cdcdcd"/><circle cx="1762" cy="518.8" r="2.1" fill="#cdcdcd"/>
</svg></body></html>
